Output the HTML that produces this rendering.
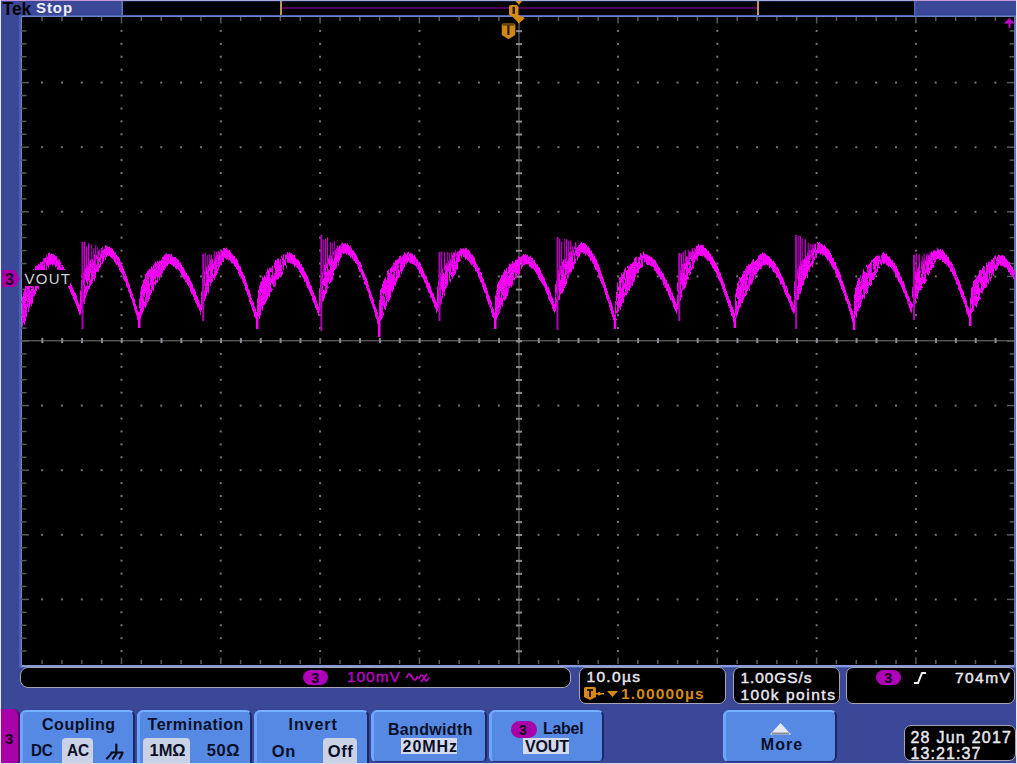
<!DOCTYPE html>
<html><head><meta charset="utf-8">
<style>
*{margin:0;padding:0;box-sizing:border-box}
html,body{width:1017px;height:764px;overflow:hidden;background:#3b4898;font-family:"Liberation Sans",sans-serif}
.a{position:absolute}
.btn{position:absolute;top:710px;height:53px;background:#5589e3;border-top:2px solid #78aeff;border-left:3px solid #6ea6ff;border-right:2.5px solid #1c2766;border-bottom:0;border-radius:6px 6px 0 0}
.btn2{height:52px;border-bottom:1px solid #24307a;border-radius:6px 6px 5px 5px}
.hl{position:absolute;background:#ccd2e6;border-radius:4px}
.box{position:absolute;background:#000;border:1px solid #a4a4b4;border-radius:7px}
.t{position:absolute;white-space:nowrap;font-family:"Liberation Sans",sans-serif}
#wrap{position:absolute;left:0;top:0;width:1017px;height:764px;background:#3b4898;overflow:hidden}
</style></head><body><div id="wrap">
<svg class="a" style="left:0;top:0" width="1017" height="764" viewBox="0 0 1017 764">
<rect x="0" y="0" width="1017" height="1" fill="#a6aacf"/>
<rect x="0" y="0" width="123" height="1" fill="#c49ad8"/>
<rect x="914" y="0" width="103" height="1" fill="#c49ad8"/>
<rect x="0" y="0" width="1" height="764" fill="#e8e8f0"/>
<rect x="1016" y="0" width="1" height="764" fill="#e8e8f0"/>
<rect x="0" y="763" width="1017" height="1" fill="#d8d8e2"/>
<rect x="123" y="1" width="791" height="14" fill="#000"/>
<rect x="123" y="1" width="791" height="1" fill="#141a48"/>
<rect x="121.5" y="1" width="1.5" height="14" fill="#5a76c8"/>
<rect x="914" y="1" width="1.5" height="14" fill="#4a64b8"/>
<rect x="282" y="7" width="475" height="2" fill="#50005a"/>
<rect x="280" y="1" width="2" height="14" fill="#9a9aa8"/>
<rect x="280.5" y="3" width="1.5" height="3" fill="#e09010"/>
<rect x="280.5" y="7" width="1.5" height="3" fill="#e09010"/>
<rect x="280.5" y="11" width="1.5" height="3" fill="#e09010"/>
<rect x="757" y="1" width="2" height="14" fill="#9a9aa8"/>
<rect x="757" y="3" width="1.5" height="3" fill="#e09010"/>
<rect x="757" y="7" width="1.5" height="3" fill="#e09010"/>
<rect x="757" y="11" width="1.5" height="3" fill="#e09010"/>
<rect x="19" y="15" width="997" height="653" fill="#4a62b0"/>
<rect x="21" y="16" width="995" height="651" fill="#6a84c4"/>
<rect x="22" y="17" width="992" height="648" fill="#000"/>
<rect x="22" y="665" width="994" height="2" fill="#8a9ad8"/>
<rect x="1014" y="16" width="2" height="651" fill="#5a78b8"/>
<rect x="120.50" y="29.92" width="2" height="2" fill="#767676"/>
<rect x="120.50" y="42.84" width="2" height="2" fill="#767676"/>
<rect x="120.50" y="55.76" width="2" height="2" fill="#767676"/>
<rect x="120.50" y="68.68" width="2" height="2" fill="#767676"/>
<rect x="120.50" y="81.60" width="2" height="2" fill="#767676"/>
<rect x="120.50" y="94.52" width="2" height="2" fill="#767676"/>
<rect x="120.50" y="107.44" width="2" height="2" fill="#767676"/>
<rect x="120.50" y="120.36" width="2" height="2" fill="#767676"/>
<rect x="120.50" y="133.28" width="2" height="2" fill="#767676"/>
<rect x="120.50" y="146.20" width="2" height="2" fill="#767676"/>
<rect x="120.50" y="159.12" width="2" height="2" fill="#767676"/>
<rect x="120.50" y="172.04" width="2" height="2" fill="#767676"/>
<rect x="120.50" y="184.96" width="2" height="2" fill="#767676"/>
<rect x="120.50" y="197.88" width="2" height="2" fill="#767676"/>
<rect x="120.50" y="210.80" width="2" height="2" fill="#767676"/>
<rect x="120.50" y="223.72" width="2" height="2" fill="#767676"/>
<rect x="120.50" y="236.64" width="2" height="2" fill="#767676"/>
<rect x="120.50" y="249.56" width="2" height="2" fill="#767676"/>
<rect x="120.50" y="262.48" width="2" height="2" fill="#767676"/>
<rect x="120.50" y="275.40" width="2" height="2" fill="#767676"/>
<rect x="120.50" y="288.32" width="2" height="2" fill="#767676"/>
<rect x="120.50" y="301.24" width="2" height="2" fill="#767676"/>
<rect x="120.50" y="314.16" width="2" height="2" fill="#767676"/>
<rect x="120.50" y="327.08" width="2" height="2" fill="#767676"/>
<rect x="120.50" y="340.00" width="2" height="2" fill="#767676"/>
<rect x="120.50" y="352.92" width="2" height="2" fill="#767676"/>
<rect x="120.50" y="365.84" width="2" height="2" fill="#767676"/>
<rect x="120.50" y="378.76" width="2" height="2" fill="#767676"/>
<rect x="120.50" y="391.68" width="2" height="2" fill="#767676"/>
<rect x="120.50" y="404.60" width="2" height="2" fill="#767676"/>
<rect x="120.50" y="417.52" width="2" height="2" fill="#767676"/>
<rect x="120.50" y="430.44" width="2" height="2" fill="#767676"/>
<rect x="120.50" y="443.36" width="2" height="2" fill="#767676"/>
<rect x="120.50" y="456.28" width="2" height="2" fill="#767676"/>
<rect x="120.50" y="469.20" width="2" height="2" fill="#767676"/>
<rect x="120.50" y="482.12" width="2" height="2" fill="#767676"/>
<rect x="120.50" y="495.04" width="2" height="2" fill="#767676"/>
<rect x="120.50" y="507.96" width="2" height="2" fill="#767676"/>
<rect x="120.50" y="520.88" width="2" height="2" fill="#767676"/>
<rect x="120.50" y="533.80" width="2" height="2" fill="#767676"/>
<rect x="120.50" y="546.72" width="2" height="2" fill="#767676"/>
<rect x="120.50" y="559.64" width="2" height="2" fill="#767676"/>
<rect x="120.50" y="572.56" width="2" height="2" fill="#767676"/>
<rect x="120.50" y="585.48" width="2" height="2" fill="#767676"/>
<rect x="120.50" y="598.40" width="2" height="2" fill="#767676"/>
<rect x="120.50" y="611.32" width="2" height="2" fill="#767676"/>
<rect x="120.50" y="624.24" width="2" height="2" fill="#767676"/>
<rect x="120.50" y="637.16" width="2" height="2" fill="#767676"/>
<rect x="120.50" y="650.08" width="2" height="2" fill="#767676"/>
<rect x="219.80" y="29.92" width="2" height="2" fill="#767676"/>
<rect x="219.80" y="42.84" width="2" height="2" fill="#767676"/>
<rect x="219.80" y="55.76" width="2" height="2" fill="#767676"/>
<rect x="219.80" y="68.68" width="2" height="2" fill="#767676"/>
<rect x="219.80" y="81.60" width="2" height="2" fill="#767676"/>
<rect x="219.80" y="94.52" width="2" height="2" fill="#767676"/>
<rect x="219.80" y="107.44" width="2" height="2" fill="#767676"/>
<rect x="219.80" y="120.36" width="2" height="2" fill="#767676"/>
<rect x="219.80" y="133.28" width="2" height="2" fill="#767676"/>
<rect x="219.80" y="146.20" width="2" height="2" fill="#767676"/>
<rect x="219.80" y="159.12" width="2" height="2" fill="#767676"/>
<rect x="219.80" y="172.04" width="2" height="2" fill="#767676"/>
<rect x="219.80" y="184.96" width="2" height="2" fill="#767676"/>
<rect x="219.80" y="197.88" width="2" height="2" fill="#767676"/>
<rect x="219.80" y="210.80" width="2" height="2" fill="#767676"/>
<rect x="219.80" y="223.72" width="2" height="2" fill="#767676"/>
<rect x="219.80" y="236.64" width="2" height="2" fill="#767676"/>
<rect x="219.80" y="249.56" width="2" height="2" fill="#767676"/>
<rect x="219.80" y="262.48" width="2" height="2" fill="#767676"/>
<rect x="219.80" y="275.40" width="2" height="2" fill="#767676"/>
<rect x="219.80" y="288.32" width="2" height="2" fill="#767676"/>
<rect x="219.80" y="301.24" width="2" height="2" fill="#767676"/>
<rect x="219.80" y="314.16" width="2" height="2" fill="#767676"/>
<rect x="219.80" y="327.08" width="2" height="2" fill="#767676"/>
<rect x="219.80" y="340.00" width="2" height="2" fill="#767676"/>
<rect x="219.80" y="352.92" width="2" height="2" fill="#767676"/>
<rect x="219.80" y="365.84" width="2" height="2" fill="#767676"/>
<rect x="219.80" y="378.76" width="2" height="2" fill="#767676"/>
<rect x="219.80" y="391.68" width="2" height="2" fill="#767676"/>
<rect x="219.80" y="404.60" width="2" height="2" fill="#767676"/>
<rect x="219.80" y="417.52" width="2" height="2" fill="#767676"/>
<rect x="219.80" y="430.44" width="2" height="2" fill="#767676"/>
<rect x="219.80" y="443.36" width="2" height="2" fill="#767676"/>
<rect x="219.80" y="456.28" width="2" height="2" fill="#767676"/>
<rect x="219.80" y="469.20" width="2" height="2" fill="#767676"/>
<rect x="219.80" y="482.12" width="2" height="2" fill="#767676"/>
<rect x="219.80" y="495.04" width="2" height="2" fill="#767676"/>
<rect x="219.80" y="507.96" width="2" height="2" fill="#767676"/>
<rect x="219.80" y="520.88" width="2" height="2" fill="#767676"/>
<rect x="219.80" y="533.80" width="2" height="2" fill="#767676"/>
<rect x="219.80" y="546.72" width="2" height="2" fill="#767676"/>
<rect x="219.80" y="559.64" width="2" height="2" fill="#767676"/>
<rect x="219.80" y="572.56" width="2" height="2" fill="#767676"/>
<rect x="219.80" y="585.48" width="2" height="2" fill="#767676"/>
<rect x="219.80" y="598.40" width="2" height="2" fill="#767676"/>
<rect x="219.80" y="611.32" width="2" height="2" fill="#767676"/>
<rect x="219.80" y="624.24" width="2" height="2" fill="#767676"/>
<rect x="219.80" y="637.16" width="2" height="2" fill="#767676"/>
<rect x="219.80" y="650.08" width="2" height="2" fill="#767676"/>
<rect x="319.10" y="29.92" width="2" height="2" fill="#767676"/>
<rect x="319.10" y="42.84" width="2" height="2" fill="#767676"/>
<rect x="319.10" y="55.76" width="2" height="2" fill="#767676"/>
<rect x="319.10" y="68.68" width="2" height="2" fill="#767676"/>
<rect x="319.10" y="81.60" width="2" height="2" fill="#767676"/>
<rect x="319.10" y="94.52" width="2" height="2" fill="#767676"/>
<rect x="319.10" y="107.44" width="2" height="2" fill="#767676"/>
<rect x="319.10" y="120.36" width="2" height="2" fill="#767676"/>
<rect x="319.10" y="133.28" width="2" height="2" fill="#767676"/>
<rect x="319.10" y="146.20" width="2" height="2" fill="#767676"/>
<rect x="319.10" y="159.12" width="2" height="2" fill="#767676"/>
<rect x="319.10" y="172.04" width="2" height="2" fill="#767676"/>
<rect x="319.10" y="184.96" width="2" height="2" fill="#767676"/>
<rect x="319.10" y="197.88" width="2" height="2" fill="#767676"/>
<rect x="319.10" y="210.80" width="2" height="2" fill="#767676"/>
<rect x="319.10" y="223.72" width="2" height="2" fill="#767676"/>
<rect x="319.10" y="236.64" width="2" height="2" fill="#767676"/>
<rect x="319.10" y="249.56" width="2" height="2" fill="#767676"/>
<rect x="319.10" y="262.48" width="2" height="2" fill="#767676"/>
<rect x="319.10" y="275.40" width="2" height="2" fill="#767676"/>
<rect x="319.10" y="288.32" width="2" height="2" fill="#767676"/>
<rect x="319.10" y="301.24" width="2" height="2" fill="#767676"/>
<rect x="319.10" y="314.16" width="2" height="2" fill="#767676"/>
<rect x="319.10" y="327.08" width="2" height="2" fill="#767676"/>
<rect x="319.10" y="340.00" width="2" height="2" fill="#767676"/>
<rect x="319.10" y="352.92" width="2" height="2" fill="#767676"/>
<rect x="319.10" y="365.84" width="2" height="2" fill="#767676"/>
<rect x="319.10" y="378.76" width="2" height="2" fill="#767676"/>
<rect x="319.10" y="391.68" width="2" height="2" fill="#767676"/>
<rect x="319.10" y="404.60" width="2" height="2" fill="#767676"/>
<rect x="319.10" y="417.52" width="2" height="2" fill="#767676"/>
<rect x="319.10" y="430.44" width="2" height="2" fill="#767676"/>
<rect x="319.10" y="443.36" width="2" height="2" fill="#767676"/>
<rect x="319.10" y="456.28" width="2" height="2" fill="#767676"/>
<rect x="319.10" y="469.20" width="2" height="2" fill="#767676"/>
<rect x="319.10" y="482.12" width="2" height="2" fill="#767676"/>
<rect x="319.10" y="495.04" width="2" height="2" fill="#767676"/>
<rect x="319.10" y="507.96" width="2" height="2" fill="#767676"/>
<rect x="319.10" y="520.88" width="2" height="2" fill="#767676"/>
<rect x="319.10" y="533.80" width="2" height="2" fill="#767676"/>
<rect x="319.10" y="546.72" width="2" height="2" fill="#767676"/>
<rect x="319.10" y="559.64" width="2" height="2" fill="#767676"/>
<rect x="319.10" y="572.56" width="2" height="2" fill="#767676"/>
<rect x="319.10" y="585.48" width="2" height="2" fill="#767676"/>
<rect x="319.10" y="598.40" width="2" height="2" fill="#767676"/>
<rect x="319.10" y="611.32" width="2" height="2" fill="#767676"/>
<rect x="319.10" y="624.24" width="2" height="2" fill="#767676"/>
<rect x="319.10" y="637.16" width="2" height="2" fill="#767676"/>
<rect x="319.10" y="650.08" width="2" height="2" fill="#767676"/>
<rect x="418.40" y="29.92" width="2" height="2" fill="#767676"/>
<rect x="418.40" y="42.84" width="2" height="2" fill="#767676"/>
<rect x="418.40" y="55.76" width="2" height="2" fill="#767676"/>
<rect x="418.40" y="68.68" width="2" height="2" fill="#767676"/>
<rect x="418.40" y="81.60" width="2" height="2" fill="#767676"/>
<rect x="418.40" y="94.52" width="2" height="2" fill="#767676"/>
<rect x="418.40" y="107.44" width="2" height="2" fill="#767676"/>
<rect x="418.40" y="120.36" width="2" height="2" fill="#767676"/>
<rect x="418.40" y="133.28" width="2" height="2" fill="#767676"/>
<rect x="418.40" y="146.20" width="2" height="2" fill="#767676"/>
<rect x="418.40" y="159.12" width="2" height="2" fill="#767676"/>
<rect x="418.40" y="172.04" width="2" height="2" fill="#767676"/>
<rect x="418.40" y="184.96" width="2" height="2" fill="#767676"/>
<rect x="418.40" y="197.88" width="2" height="2" fill="#767676"/>
<rect x="418.40" y="210.80" width="2" height="2" fill="#767676"/>
<rect x="418.40" y="223.72" width="2" height="2" fill="#767676"/>
<rect x="418.40" y="236.64" width="2" height="2" fill="#767676"/>
<rect x="418.40" y="249.56" width="2" height="2" fill="#767676"/>
<rect x="418.40" y="262.48" width="2" height="2" fill="#767676"/>
<rect x="418.40" y="275.40" width="2" height="2" fill="#767676"/>
<rect x="418.40" y="288.32" width="2" height="2" fill="#767676"/>
<rect x="418.40" y="301.24" width="2" height="2" fill="#767676"/>
<rect x="418.40" y="314.16" width="2" height="2" fill="#767676"/>
<rect x="418.40" y="327.08" width="2" height="2" fill="#767676"/>
<rect x="418.40" y="340.00" width="2" height="2" fill="#767676"/>
<rect x="418.40" y="352.92" width="2" height="2" fill="#767676"/>
<rect x="418.40" y="365.84" width="2" height="2" fill="#767676"/>
<rect x="418.40" y="378.76" width="2" height="2" fill="#767676"/>
<rect x="418.40" y="391.68" width="2" height="2" fill="#767676"/>
<rect x="418.40" y="404.60" width="2" height="2" fill="#767676"/>
<rect x="418.40" y="417.52" width="2" height="2" fill="#767676"/>
<rect x="418.40" y="430.44" width="2" height="2" fill="#767676"/>
<rect x="418.40" y="443.36" width="2" height="2" fill="#767676"/>
<rect x="418.40" y="456.28" width="2" height="2" fill="#767676"/>
<rect x="418.40" y="469.20" width="2" height="2" fill="#767676"/>
<rect x="418.40" y="482.12" width="2" height="2" fill="#767676"/>
<rect x="418.40" y="495.04" width="2" height="2" fill="#767676"/>
<rect x="418.40" y="507.96" width="2" height="2" fill="#767676"/>
<rect x="418.40" y="520.88" width="2" height="2" fill="#767676"/>
<rect x="418.40" y="533.80" width="2" height="2" fill="#767676"/>
<rect x="418.40" y="546.72" width="2" height="2" fill="#767676"/>
<rect x="418.40" y="559.64" width="2" height="2" fill="#767676"/>
<rect x="418.40" y="572.56" width="2" height="2" fill="#767676"/>
<rect x="418.40" y="585.48" width="2" height="2" fill="#767676"/>
<rect x="418.40" y="598.40" width="2" height="2" fill="#767676"/>
<rect x="418.40" y="611.32" width="2" height="2" fill="#767676"/>
<rect x="418.40" y="624.24" width="2" height="2" fill="#767676"/>
<rect x="418.40" y="637.16" width="2" height="2" fill="#767676"/>
<rect x="418.40" y="650.08" width="2" height="2" fill="#767676"/>
<rect x="617.00" y="29.92" width="2" height="2" fill="#767676"/>
<rect x="617.00" y="42.84" width="2" height="2" fill="#767676"/>
<rect x="617.00" y="55.76" width="2" height="2" fill="#767676"/>
<rect x="617.00" y="68.68" width="2" height="2" fill="#767676"/>
<rect x="617.00" y="81.60" width="2" height="2" fill="#767676"/>
<rect x="617.00" y="94.52" width="2" height="2" fill="#767676"/>
<rect x="617.00" y="107.44" width="2" height="2" fill="#767676"/>
<rect x="617.00" y="120.36" width="2" height="2" fill="#767676"/>
<rect x="617.00" y="133.28" width="2" height="2" fill="#767676"/>
<rect x="617.00" y="146.20" width="2" height="2" fill="#767676"/>
<rect x="617.00" y="159.12" width="2" height="2" fill="#767676"/>
<rect x="617.00" y="172.04" width="2" height="2" fill="#767676"/>
<rect x="617.00" y="184.96" width="2" height="2" fill="#767676"/>
<rect x="617.00" y="197.88" width="2" height="2" fill="#767676"/>
<rect x="617.00" y="210.80" width="2" height="2" fill="#767676"/>
<rect x="617.00" y="223.72" width="2" height="2" fill="#767676"/>
<rect x="617.00" y="236.64" width="2" height="2" fill="#767676"/>
<rect x="617.00" y="249.56" width="2" height="2" fill="#767676"/>
<rect x="617.00" y="262.48" width="2" height="2" fill="#767676"/>
<rect x="617.00" y="275.40" width="2" height="2" fill="#767676"/>
<rect x="617.00" y="288.32" width="2" height="2" fill="#767676"/>
<rect x="617.00" y="301.24" width="2" height="2" fill="#767676"/>
<rect x="617.00" y="314.16" width="2" height="2" fill="#767676"/>
<rect x="617.00" y="327.08" width="2" height="2" fill="#767676"/>
<rect x="617.00" y="340.00" width="2" height="2" fill="#767676"/>
<rect x="617.00" y="352.92" width="2" height="2" fill="#767676"/>
<rect x="617.00" y="365.84" width="2" height="2" fill="#767676"/>
<rect x="617.00" y="378.76" width="2" height="2" fill="#767676"/>
<rect x="617.00" y="391.68" width="2" height="2" fill="#767676"/>
<rect x="617.00" y="404.60" width="2" height="2" fill="#767676"/>
<rect x="617.00" y="417.52" width="2" height="2" fill="#767676"/>
<rect x="617.00" y="430.44" width="2" height="2" fill="#767676"/>
<rect x="617.00" y="443.36" width="2" height="2" fill="#767676"/>
<rect x="617.00" y="456.28" width="2" height="2" fill="#767676"/>
<rect x="617.00" y="469.20" width="2" height="2" fill="#767676"/>
<rect x="617.00" y="482.12" width="2" height="2" fill="#767676"/>
<rect x="617.00" y="495.04" width="2" height="2" fill="#767676"/>
<rect x="617.00" y="507.96" width="2" height="2" fill="#767676"/>
<rect x="617.00" y="520.88" width="2" height="2" fill="#767676"/>
<rect x="617.00" y="533.80" width="2" height="2" fill="#767676"/>
<rect x="617.00" y="546.72" width="2" height="2" fill="#767676"/>
<rect x="617.00" y="559.64" width="2" height="2" fill="#767676"/>
<rect x="617.00" y="572.56" width="2" height="2" fill="#767676"/>
<rect x="617.00" y="585.48" width="2" height="2" fill="#767676"/>
<rect x="617.00" y="598.40" width="2" height="2" fill="#767676"/>
<rect x="617.00" y="611.32" width="2" height="2" fill="#767676"/>
<rect x="617.00" y="624.24" width="2" height="2" fill="#767676"/>
<rect x="617.00" y="637.16" width="2" height="2" fill="#767676"/>
<rect x="617.00" y="650.08" width="2" height="2" fill="#767676"/>
<rect x="716.30" y="29.92" width="2" height="2" fill="#767676"/>
<rect x="716.30" y="42.84" width="2" height="2" fill="#767676"/>
<rect x="716.30" y="55.76" width="2" height="2" fill="#767676"/>
<rect x="716.30" y="68.68" width="2" height="2" fill="#767676"/>
<rect x="716.30" y="81.60" width="2" height="2" fill="#767676"/>
<rect x="716.30" y="94.52" width="2" height="2" fill="#767676"/>
<rect x="716.30" y="107.44" width="2" height="2" fill="#767676"/>
<rect x="716.30" y="120.36" width="2" height="2" fill="#767676"/>
<rect x="716.30" y="133.28" width="2" height="2" fill="#767676"/>
<rect x="716.30" y="146.20" width="2" height="2" fill="#767676"/>
<rect x="716.30" y="159.12" width="2" height="2" fill="#767676"/>
<rect x="716.30" y="172.04" width="2" height="2" fill="#767676"/>
<rect x="716.30" y="184.96" width="2" height="2" fill="#767676"/>
<rect x="716.30" y="197.88" width="2" height="2" fill="#767676"/>
<rect x="716.30" y="210.80" width="2" height="2" fill="#767676"/>
<rect x="716.30" y="223.72" width="2" height="2" fill="#767676"/>
<rect x="716.30" y="236.64" width="2" height="2" fill="#767676"/>
<rect x="716.30" y="249.56" width="2" height="2" fill="#767676"/>
<rect x="716.30" y="262.48" width="2" height="2" fill="#767676"/>
<rect x="716.30" y="275.40" width="2" height="2" fill="#767676"/>
<rect x="716.30" y="288.32" width="2" height="2" fill="#767676"/>
<rect x="716.30" y="301.24" width="2" height="2" fill="#767676"/>
<rect x="716.30" y="314.16" width="2" height="2" fill="#767676"/>
<rect x="716.30" y="327.08" width="2" height="2" fill="#767676"/>
<rect x="716.30" y="340.00" width="2" height="2" fill="#767676"/>
<rect x="716.30" y="352.92" width="2" height="2" fill="#767676"/>
<rect x="716.30" y="365.84" width="2" height="2" fill="#767676"/>
<rect x="716.30" y="378.76" width="2" height="2" fill="#767676"/>
<rect x="716.30" y="391.68" width="2" height="2" fill="#767676"/>
<rect x="716.30" y="404.60" width="2" height="2" fill="#767676"/>
<rect x="716.30" y="417.52" width="2" height="2" fill="#767676"/>
<rect x="716.30" y="430.44" width="2" height="2" fill="#767676"/>
<rect x="716.30" y="443.36" width="2" height="2" fill="#767676"/>
<rect x="716.30" y="456.28" width="2" height="2" fill="#767676"/>
<rect x="716.30" y="469.20" width="2" height="2" fill="#767676"/>
<rect x="716.30" y="482.12" width="2" height="2" fill="#767676"/>
<rect x="716.30" y="495.04" width="2" height="2" fill="#767676"/>
<rect x="716.30" y="507.96" width="2" height="2" fill="#767676"/>
<rect x="716.30" y="520.88" width="2" height="2" fill="#767676"/>
<rect x="716.30" y="533.80" width="2" height="2" fill="#767676"/>
<rect x="716.30" y="546.72" width="2" height="2" fill="#767676"/>
<rect x="716.30" y="559.64" width="2" height="2" fill="#767676"/>
<rect x="716.30" y="572.56" width="2" height="2" fill="#767676"/>
<rect x="716.30" y="585.48" width="2" height="2" fill="#767676"/>
<rect x="716.30" y="598.40" width="2" height="2" fill="#767676"/>
<rect x="716.30" y="611.32" width="2" height="2" fill="#767676"/>
<rect x="716.30" y="624.24" width="2" height="2" fill="#767676"/>
<rect x="716.30" y="637.16" width="2" height="2" fill="#767676"/>
<rect x="716.30" y="650.08" width="2" height="2" fill="#767676"/>
<rect x="815.60" y="29.92" width="2" height="2" fill="#767676"/>
<rect x="815.60" y="42.84" width="2" height="2" fill="#767676"/>
<rect x="815.60" y="55.76" width="2" height="2" fill="#767676"/>
<rect x="815.60" y="68.68" width="2" height="2" fill="#767676"/>
<rect x="815.60" y="81.60" width="2" height="2" fill="#767676"/>
<rect x="815.60" y="94.52" width="2" height="2" fill="#767676"/>
<rect x="815.60" y="107.44" width="2" height="2" fill="#767676"/>
<rect x="815.60" y="120.36" width="2" height="2" fill="#767676"/>
<rect x="815.60" y="133.28" width="2" height="2" fill="#767676"/>
<rect x="815.60" y="146.20" width="2" height="2" fill="#767676"/>
<rect x="815.60" y="159.12" width="2" height="2" fill="#767676"/>
<rect x="815.60" y="172.04" width="2" height="2" fill="#767676"/>
<rect x="815.60" y="184.96" width="2" height="2" fill="#767676"/>
<rect x="815.60" y="197.88" width="2" height="2" fill="#767676"/>
<rect x="815.60" y="210.80" width="2" height="2" fill="#767676"/>
<rect x="815.60" y="223.72" width="2" height="2" fill="#767676"/>
<rect x="815.60" y="236.64" width="2" height="2" fill="#767676"/>
<rect x="815.60" y="249.56" width="2" height="2" fill="#767676"/>
<rect x="815.60" y="262.48" width="2" height="2" fill="#767676"/>
<rect x="815.60" y="275.40" width="2" height="2" fill="#767676"/>
<rect x="815.60" y="288.32" width="2" height="2" fill="#767676"/>
<rect x="815.60" y="301.24" width="2" height="2" fill="#767676"/>
<rect x="815.60" y="314.16" width="2" height="2" fill="#767676"/>
<rect x="815.60" y="327.08" width="2" height="2" fill="#767676"/>
<rect x="815.60" y="340.00" width="2" height="2" fill="#767676"/>
<rect x="815.60" y="352.92" width="2" height="2" fill="#767676"/>
<rect x="815.60" y="365.84" width="2" height="2" fill="#767676"/>
<rect x="815.60" y="378.76" width="2" height="2" fill="#767676"/>
<rect x="815.60" y="391.68" width="2" height="2" fill="#767676"/>
<rect x="815.60" y="404.60" width="2" height="2" fill="#767676"/>
<rect x="815.60" y="417.52" width="2" height="2" fill="#767676"/>
<rect x="815.60" y="430.44" width="2" height="2" fill="#767676"/>
<rect x="815.60" y="443.36" width="2" height="2" fill="#767676"/>
<rect x="815.60" y="456.28" width="2" height="2" fill="#767676"/>
<rect x="815.60" y="469.20" width="2" height="2" fill="#767676"/>
<rect x="815.60" y="482.12" width="2" height="2" fill="#767676"/>
<rect x="815.60" y="495.04" width="2" height="2" fill="#767676"/>
<rect x="815.60" y="507.96" width="2" height="2" fill="#767676"/>
<rect x="815.60" y="520.88" width="2" height="2" fill="#767676"/>
<rect x="815.60" y="533.80" width="2" height="2" fill="#767676"/>
<rect x="815.60" y="546.72" width="2" height="2" fill="#767676"/>
<rect x="815.60" y="559.64" width="2" height="2" fill="#767676"/>
<rect x="815.60" y="572.56" width="2" height="2" fill="#767676"/>
<rect x="815.60" y="585.48" width="2" height="2" fill="#767676"/>
<rect x="815.60" y="598.40" width="2" height="2" fill="#767676"/>
<rect x="815.60" y="611.32" width="2" height="2" fill="#767676"/>
<rect x="815.60" y="624.24" width="2" height="2" fill="#767676"/>
<rect x="815.60" y="637.16" width="2" height="2" fill="#767676"/>
<rect x="815.60" y="650.08" width="2" height="2" fill="#767676"/>
<rect x="914.90" y="29.92" width="2" height="2" fill="#767676"/>
<rect x="914.90" y="42.84" width="2" height="2" fill="#767676"/>
<rect x="914.90" y="55.76" width="2" height="2" fill="#767676"/>
<rect x="914.90" y="68.68" width="2" height="2" fill="#767676"/>
<rect x="914.90" y="81.60" width="2" height="2" fill="#767676"/>
<rect x="914.90" y="94.52" width="2" height="2" fill="#767676"/>
<rect x="914.90" y="107.44" width="2" height="2" fill="#767676"/>
<rect x="914.90" y="120.36" width="2" height="2" fill="#767676"/>
<rect x="914.90" y="133.28" width="2" height="2" fill="#767676"/>
<rect x="914.90" y="146.20" width="2" height="2" fill="#767676"/>
<rect x="914.90" y="159.12" width="2" height="2" fill="#767676"/>
<rect x="914.90" y="172.04" width="2" height="2" fill="#767676"/>
<rect x="914.90" y="184.96" width="2" height="2" fill="#767676"/>
<rect x="914.90" y="197.88" width="2" height="2" fill="#767676"/>
<rect x="914.90" y="210.80" width="2" height="2" fill="#767676"/>
<rect x="914.90" y="223.72" width="2" height="2" fill="#767676"/>
<rect x="914.90" y="236.64" width="2" height="2" fill="#767676"/>
<rect x="914.90" y="249.56" width="2" height="2" fill="#767676"/>
<rect x="914.90" y="262.48" width="2" height="2" fill="#767676"/>
<rect x="914.90" y="275.40" width="2" height="2" fill="#767676"/>
<rect x="914.90" y="288.32" width="2" height="2" fill="#767676"/>
<rect x="914.90" y="301.24" width="2" height="2" fill="#767676"/>
<rect x="914.90" y="314.16" width="2" height="2" fill="#767676"/>
<rect x="914.90" y="327.08" width="2" height="2" fill="#767676"/>
<rect x="914.90" y="340.00" width="2" height="2" fill="#767676"/>
<rect x="914.90" y="352.92" width="2" height="2" fill="#767676"/>
<rect x="914.90" y="365.84" width="2" height="2" fill="#767676"/>
<rect x="914.90" y="378.76" width="2" height="2" fill="#767676"/>
<rect x="914.90" y="391.68" width="2" height="2" fill="#767676"/>
<rect x="914.90" y="404.60" width="2" height="2" fill="#767676"/>
<rect x="914.90" y="417.52" width="2" height="2" fill="#767676"/>
<rect x="914.90" y="430.44" width="2" height="2" fill="#767676"/>
<rect x="914.90" y="443.36" width="2" height="2" fill="#767676"/>
<rect x="914.90" y="456.28" width="2" height="2" fill="#767676"/>
<rect x="914.90" y="469.20" width="2" height="2" fill="#767676"/>
<rect x="914.90" y="482.12" width="2" height="2" fill="#767676"/>
<rect x="914.90" y="495.04" width="2" height="2" fill="#767676"/>
<rect x="914.90" y="507.96" width="2" height="2" fill="#767676"/>
<rect x="914.90" y="520.88" width="2" height="2" fill="#767676"/>
<rect x="914.90" y="533.80" width="2" height="2" fill="#767676"/>
<rect x="914.90" y="546.72" width="2" height="2" fill="#767676"/>
<rect x="914.90" y="559.64" width="2" height="2" fill="#767676"/>
<rect x="914.90" y="572.56" width="2" height="2" fill="#767676"/>
<rect x="914.90" y="585.48" width="2" height="2" fill="#767676"/>
<rect x="914.90" y="598.40" width="2" height="2" fill="#767676"/>
<rect x="914.90" y="611.32" width="2" height="2" fill="#767676"/>
<rect x="914.90" y="624.24" width="2" height="2" fill="#767676"/>
<rect x="914.90" y="637.16" width="2" height="2" fill="#767676"/>
<rect x="914.90" y="650.08" width="2" height="2" fill="#767676"/>
<rect x="41.06" y="81.60" width="2" height="2" fill="#767676"/>
<rect x="60.92" y="81.60" width="2" height="2" fill="#767676"/>
<rect x="80.78" y="81.60" width="2" height="2" fill="#767676"/>
<rect x="100.64" y="81.60" width="2" height="2" fill="#767676"/>
<rect x="140.36" y="81.60" width="2" height="2" fill="#767676"/>
<rect x="160.22" y="81.60" width="2" height="2" fill="#767676"/>
<rect x="180.08" y="81.60" width="2" height="2" fill="#767676"/>
<rect x="199.94" y="81.60" width="2" height="2" fill="#767676"/>
<rect x="239.66" y="81.60" width="2" height="2" fill="#767676"/>
<rect x="259.52" y="81.60" width="2" height="2" fill="#767676"/>
<rect x="279.38" y="81.60" width="2" height="2" fill="#767676"/>
<rect x="299.24" y="81.60" width="2" height="2" fill="#767676"/>
<rect x="338.96" y="81.60" width="2" height="2" fill="#767676"/>
<rect x="358.82" y="81.60" width="2" height="2" fill="#767676"/>
<rect x="378.68" y="81.60" width="2" height="2" fill="#767676"/>
<rect x="398.54" y="81.60" width="2" height="2" fill="#767676"/>
<rect x="438.26" y="81.60" width="2" height="2" fill="#767676"/>
<rect x="458.12" y="81.60" width="2" height="2" fill="#767676"/>
<rect x="477.98" y="81.60" width="2" height="2" fill="#767676"/>
<rect x="497.84" y="81.60" width="2" height="2" fill="#767676"/>
<rect x="537.56" y="81.60" width="2" height="2" fill="#767676"/>
<rect x="557.42" y="81.60" width="2" height="2" fill="#767676"/>
<rect x="577.28" y="81.60" width="2" height="2" fill="#767676"/>
<rect x="597.14" y="81.60" width="2" height="2" fill="#767676"/>
<rect x="636.86" y="81.60" width="2" height="2" fill="#767676"/>
<rect x="656.72" y="81.60" width="2" height="2" fill="#767676"/>
<rect x="676.58" y="81.60" width="2" height="2" fill="#767676"/>
<rect x="696.44" y="81.60" width="2" height="2" fill="#767676"/>
<rect x="736.16" y="81.60" width="2" height="2" fill="#767676"/>
<rect x="756.02" y="81.60" width="2" height="2" fill="#767676"/>
<rect x="775.88" y="81.60" width="2" height="2" fill="#767676"/>
<rect x="795.74" y="81.60" width="2" height="2" fill="#767676"/>
<rect x="835.46" y="81.60" width="2" height="2" fill="#767676"/>
<rect x="855.32" y="81.60" width="2" height="2" fill="#767676"/>
<rect x="875.18" y="81.60" width="2" height="2" fill="#767676"/>
<rect x="895.04" y="81.60" width="2" height="2" fill="#767676"/>
<rect x="934.76" y="81.60" width="2" height="2" fill="#767676"/>
<rect x="954.62" y="81.60" width="2" height="2" fill="#767676"/>
<rect x="974.48" y="81.60" width="2" height="2" fill="#767676"/>
<rect x="994.34" y="81.60" width="2" height="2" fill="#767676"/>
<rect x="41.06" y="146.20" width="2" height="2" fill="#767676"/>
<rect x="60.92" y="146.20" width="2" height="2" fill="#767676"/>
<rect x="80.78" y="146.20" width="2" height="2" fill="#767676"/>
<rect x="100.64" y="146.20" width="2" height="2" fill="#767676"/>
<rect x="140.36" y="146.20" width="2" height="2" fill="#767676"/>
<rect x="160.22" y="146.20" width="2" height="2" fill="#767676"/>
<rect x="180.08" y="146.20" width="2" height="2" fill="#767676"/>
<rect x="199.94" y="146.20" width="2" height="2" fill="#767676"/>
<rect x="239.66" y="146.20" width="2" height="2" fill="#767676"/>
<rect x="259.52" y="146.20" width="2" height="2" fill="#767676"/>
<rect x="279.38" y="146.20" width="2" height="2" fill="#767676"/>
<rect x="299.24" y="146.20" width="2" height="2" fill="#767676"/>
<rect x="338.96" y="146.20" width="2" height="2" fill="#767676"/>
<rect x="358.82" y="146.20" width="2" height="2" fill="#767676"/>
<rect x="378.68" y="146.20" width="2" height="2" fill="#767676"/>
<rect x="398.54" y="146.20" width="2" height="2" fill="#767676"/>
<rect x="438.26" y="146.20" width="2" height="2" fill="#767676"/>
<rect x="458.12" y="146.20" width="2" height="2" fill="#767676"/>
<rect x="477.98" y="146.20" width="2" height="2" fill="#767676"/>
<rect x="497.84" y="146.20" width="2" height="2" fill="#767676"/>
<rect x="537.56" y="146.20" width="2" height="2" fill="#767676"/>
<rect x="557.42" y="146.20" width="2" height="2" fill="#767676"/>
<rect x="577.28" y="146.20" width="2" height="2" fill="#767676"/>
<rect x="597.14" y="146.20" width="2" height="2" fill="#767676"/>
<rect x="636.86" y="146.20" width="2" height="2" fill="#767676"/>
<rect x="656.72" y="146.20" width="2" height="2" fill="#767676"/>
<rect x="676.58" y="146.20" width="2" height="2" fill="#767676"/>
<rect x="696.44" y="146.20" width="2" height="2" fill="#767676"/>
<rect x="736.16" y="146.20" width="2" height="2" fill="#767676"/>
<rect x="756.02" y="146.20" width="2" height="2" fill="#767676"/>
<rect x="775.88" y="146.20" width="2" height="2" fill="#767676"/>
<rect x="795.74" y="146.20" width="2" height="2" fill="#767676"/>
<rect x="835.46" y="146.20" width="2" height="2" fill="#767676"/>
<rect x="855.32" y="146.20" width="2" height="2" fill="#767676"/>
<rect x="875.18" y="146.20" width="2" height="2" fill="#767676"/>
<rect x="895.04" y="146.20" width="2" height="2" fill="#767676"/>
<rect x="934.76" y="146.20" width="2" height="2" fill="#767676"/>
<rect x="954.62" y="146.20" width="2" height="2" fill="#767676"/>
<rect x="974.48" y="146.20" width="2" height="2" fill="#767676"/>
<rect x="994.34" y="146.20" width="2" height="2" fill="#767676"/>
<rect x="41.06" y="210.80" width="2" height="2" fill="#767676"/>
<rect x="60.92" y="210.80" width="2" height="2" fill="#767676"/>
<rect x="80.78" y="210.80" width="2" height="2" fill="#767676"/>
<rect x="100.64" y="210.80" width="2" height="2" fill="#767676"/>
<rect x="140.36" y="210.80" width="2" height="2" fill="#767676"/>
<rect x="160.22" y="210.80" width="2" height="2" fill="#767676"/>
<rect x="180.08" y="210.80" width="2" height="2" fill="#767676"/>
<rect x="199.94" y="210.80" width="2" height="2" fill="#767676"/>
<rect x="239.66" y="210.80" width="2" height="2" fill="#767676"/>
<rect x="259.52" y="210.80" width="2" height="2" fill="#767676"/>
<rect x="279.38" y="210.80" width="2" height="2" fill="#767676"/>
<rect x="299.24" y="210.80" width="2" height="2" fill="#767676"/>
<rect x="338.96" y="210.80" width="2" height="2" fill="#767676"/>
<rect x="358.82" y="210.80" width="2" height="2" fill="#767676"/>
<rect x="378.68" y="210.80" width="2" height="2" fill="#767676"/>
<rect x="398.54" y="210.80" width="2" height="2" fill="#767676"/>
<rect x="438.26" y="210.80" width="2" height="2" fill="#767676"/>
<rect x="458.12" y="210.80" width="2" height="2" fill="#767676"/>
<rect x="477.98" y="210.80" width="2" height="2" fill="#767676"/>
<rect x="497.84" y="210.80" width="2" height="2" fill="#767676"/>
<rect x="537.56" y="210.80" width="2" height="2" fill="#767676"/>
<rect x="557.42" y="210.80" width="2" height="2" fill="#767676"/>
<rect x="577.28" y="210.80" width="2" height="2" fill="#767676"/>
<rect x="597.14" y="210.80" width="2" height="2" fill="#767676"/>
<rect x="636.86" y="210.80" width="2" height="2" fill="#767676"/>
<rect x="656.72" y="210.80" width="2" height="2" fill="#767676"/>
<rect x="676.58" y="210.80" width="2" height="2" fill="#767676"/>
<rect x="696.44" y="210.80" width="2" height="2" fill="#767676"/>
<rect x="736.16" y="210.80" width="2" height="2" fill="#767676"/>
<rect x="756.02" y="210.80" width="2" height="2" fill="#767676"/>
<rect x="775.88" y="210.80" width="2" height="2" fill="#767676"/>
<rect x="795.74" y="210.80" width="2" height="2" fill="#767676"/>
<rect x="835.46" y="210.80" width="2" height="2" fill="#767676"/>
<rect x="855.32" y="210.80" width="2" height="2" fill="#767676"/>
<rect x="875.18" y="210.80" width="2" height="2" fill="#767676"/>
<rect x="895.04" y="210.80" width="2" height="2" fill="#767676"/>
<rect x="934.76" y="210.80" width="2" height="2" fill="#767676"/>
<rect x="954.62" y="210.80" width="2" height="2" fill="#767676"/>
<rect x="974.48" y="210.80" width="2" height="2" fill="#767676"/>
<rect x="994.34" y="210.80" width="2" height="2" fill="#767676"/>
<rect x="41.06" y="275.40" width="2" height="2" fill="#767676"/>
<rect x="60.92" y="275.40" width="2" height="2" fill="#767676"/>
<rect x="80.78" y="275.40" width="2" height="2" fill="#767676"/>
<rect x="100.64" y="275.40" width="2" height="2" fill="#767676"/>
<rect x="140.36" y="275.40" width="2" height="2" fill="#767676"/>
<rect x="160.22" y="275.40" width="2" height="2" fill="#767676"/>
<rect x="180.08" y="275.40" width="2" height="2" fill="#767676"/>
<rect x="199.94" y="275.40" width="2" height="2" fill="#767676"/>
<rect x="239.66" y="275.40" width="2" height="2" fill="#767676"/>
<rect x="259.52" y="275.40" width="2" height="2" fill="#767676"/>
<rect x="279.38" y="275.40" width="2" height="2" fill="#767676"/>
<rect x="299.24" y="275.40" width="2" height="2" fill="#767676"/>
<rect x="338.96" y="275.40" width="2" height="2" fill="#767676"/>
<rect x="358.82" y="275.40" width="2" height="2" fill="#767676"/>
<rect x="378.68" y="275.40" width="2" height="2" fill="#767676"/>
<rect x="398.54" y="275.40" width="2" height="2" fill="#767676"/>
<rect x="438.26" y="275.40" width="2" height="2" fill="#767676"/>
<rect x="458.12" y="275.40" width="2" height="2" fill="#767676"/>
<rect x="477.98" y="275.40" width="2" height="2" fill="#767676"/>
<rect x="497.84" y="275.40" width="2" height="2" fill="#767676"/>
<rect x="537.56" y="275.40" width="2" height="2" fill="#767676"/>
<rect x="557.42" y="275.40" width="2" height="2" fill="#767676"/>
<rect x="577.28" y="275.40" width="2" height="2" fill="#767676"/>
<rect x="597.14" y="275.40" width="2" height="2" fill="#767676"/>
<rect x="636.86" y="275.40" width="2" height="2" fill="#767676"/>
<rect x="656.72" y="275.40" width="2" height="2" fill="#767676"/>
<rect x="676.58" y="275.40" width="2" height="2" fill="#767676"/>
<rect x="696.44" y="275.40" width="2" height="2" fill="#767676"/>
<rect x="736.16" y="275.40" width="2" height="2" fill="#767676"/>
<rect x="756.02" y="275.40" width="2" height="2" fill="#767676"/>
<rect x="775.88" y="275.40" width="2" height="2" fill="#767676"/>
<rect x="795.74" y="275.40" width="2" height="2" fill="#767676"/>
<rect x="835.46" y="275.40" width="2" height="2" fill="#767676"/>
<rect x="855.32" y="275.40" width="2" height="2" fill="#767676"/>
<rect x="875.18" y="275.40" width="2" height="2" fill="#767676"/>
<rect x="895.04" y="275.40" width="2" height="2" fill="#767676"/>
<rect x="934.76" y="275.40" width="2" height="2" fill="#767676"/>
<rect x="954.62" y="275.40" width="2" height="2" fill="#767676"/>
<rect x="974.48" y="275.40" width="2" height="2" fill="#767676"/>
<rect x="994.34" y="275.40" width="2" height="2" fill="#767676"/>
<rect x="41.06" y="404.60" width="2" height="2" fill="#767676"/>
<rect x="60.92" y="404.60" width="2" height="2" fill="#767676"/>
<rect x="80.78" y="404.60" width="2" height="2" fill="#767676"/>
<rect x="100.64" y="404.60" width="2" height="2" fill="#767676"/>
<rect x="140.36" y="404.60" width="2" height="2" fill="#767676"/>
<rect x="160.22" y="404.60" width="2" height="2" fill="#767676"/>
<rect x="180.08" y="404.60" width="2" height="2" fill="#767676"/>
<rect x="199.94" y="404.60" width="2" height="2" fill="#767676"/>
<rect x="239.66" y="404.60" width="2" height="2" fill="#767676"/>
<rect x="259.52" y="404.60" width="2" height="2" fill="#767676"/>
<rect x="279.38" y="404.60" width="2" height="2" fill="#767676"/>
<rect x="299.24" y="404.60" width="2" height="2" fill="#767676"/>
<rect x="338.96" y="404.60" width="2" height="2" fill="#767676"/>
<rect x="358.82" y="404.60" width="2" height="2" fill="#767676"/>
<rect x="378.68" y="404.60" width="2" height="2" fill="#767676"/>
<rect x="398.54" y="404.60" width="2" height="2" fill="#767676"/>
<rect x="438.26" y="404.60" width="2" height="2" fill="#767676"/>
<rect x="458.12" y="404.60" width="2" height="2" fill="#767676"/>
<rect x="477.98" y="404.60" width="2" height="2" fill="#767676"/>
<rect x="497.84" y="404.60" width="2" height="2" fill="#767676"/>
<rect x="537.56" y="404.60" width="2" height="2" fill="#767676"/>
<rect x="557.42" y="404.60" width="2" height="2" fill="#767676"/>
<rect x="577.28" y="404.60" width="2" height="2" fill="#767676"/>
<rect x="597.14" y="404.60" width="2" height="2" fill="#767676"/>
<rect x="636.86" y="404.60" width="2" height="2" fill="#767676"/>
<rect x="656.72" y="404.60" width="2" height="2" fill="#767676"/>
<rect x="676.58" y="404.60" width="2" height="2" fill="#767676"/>
<rect x="696.44" y="404.60" width="2" height="2" fill="#767676"/>
<rect x="736.16" y="404.60" width="2" height="2" fill="#767676"/>
<rect x="756.02" y="404.60" width="2" height="2" fill="#767676"/>
<rect x="775.88" y="404.60" width="2" height="2" fill="#767676"/>
<rect x="795.74" y="404.60" width="2" height="2" fill="#767676"/>
<rect x="835.46" y="404.60" width="2" height="2" fill="#767676"/>
<rect x="855.32" y="404.60" width="2" height="2" fill="#767676"/>
<rect x="875.18" y="404.60" width="2" height="2" fill="#767676"/>
<rect x="895.04" y="404.60" width="2" height="2" fill="#767676"/>
<rect x="934.76" y="404.60" width="2" height="2" fill="#767676"/>
<rect x="954.62" y="404.60" width="2" height="2" fill="#767676"/>
<rect x="974.48" y="404.60" width="2" height="2" fill="#767676"/>
<rect x="994.34" y="404.60" width="2" height="2" fill="#767676"/>
<rect x="41.06" y="469.20" width="2" height="2" fill="#767676"/>
<rect x="60.92" y="469.20" width="2" height="2" fill="#767676"/>
<rect x="80.78" y="469.20" width="2" height="2" fill="#767676"/>
<rect x="100.64" y="469.20" width="2" height="2" fill="#767676"/>
<rect x="140.36" y="469.20" width="2" height="2" fill="#767676"/>
<rect x="160.22" y="469.20" width="2" height="2" fill="#767676"/>
<rect x="180.08" y="469.20" width="2" height="2" fill="#767676"/>
<rect x="199.94" y="469.20" width="2" height="2" fill="#767676"/>
<rect x="239.66" y="469.20" width="2" height="2" fill="#767676"/>
<rect x="259.52" y="469.20" width="2" height="2" fill="#767676"/>
<rect x="279.38" y="469.20" width="2" height="2" fill="#767676"/>
<rect x="299.24" y="469.20" width="2" height="2" fill="#767676"/>
<rect x="338.96" y="469.20" width="2" height="2" fill="#767676"/>
<rect x="358.82" y="469.20" width="2" height="2" fill="#767676"/>
<rect x="378.68" y="469.20" width="2" height="2" fill="#767676"/>
<rect x="398.54" y="469.20" width="2" height="2" fill="#767676"/>
<rect x="438.26" y="469.20" width="2" height="2" fill="#767676"/>
<rect x="458.12" y="469.20" width="2" height="2" fill="#767676"/>
<rect x="477.98" y="469.20" width="2" height="2" fill="#767676"/>
<rect x="497.84" y="469.20" width="2" height="2" fill="#767676"/>
<rect x="537.56" y="469.20" width="2" height="2" fill="#767676"/>
<rect x="557.42" y="469.20" width="2" height="2" fill="#767676"/>
<rect x="577.28" y="469.20" width="2" height="2" fill="#767676"/>
<rect x="597.14" y="469.20" width="2" height="2" fill="#767676"/>
<rect x="636.86" y="469.20" width="2" height="2" fill="#767676"/>
<rect x="656.72" y="469.20" width="2" height="2" fill="#767676"/>
<rect x="676.58" y="469.20" width="2" height="2" fill="#767676"/>
<rect x="696.44" y="469.20" width="2" height="2" fill="#767676"/>
<rect x="736.16" y="469.20" width="2" height="2" fill="#767676"/>
<rect x="756.02" y="469.20" width="2" height="2" fill="#767676"/>
<rect x="775.88" y="469.20" width="2" height="2" fill="#767676"/>
<rect x="795.74" y="469.20" width="2" height="2" fill="#767676"/>
<rect x="835.46" y="469.20" width="2" height="2" fill="#767676"/>
<rect x="855.32" y="469.20" width="2" height="2" fill="#767676"/>
<rect x="875.18" y="469.20" width="2" height="2" fill="#767676"/>
<rect x="895.04" y="469.20" width="2" height="2" fill="#767676"/>
<rect x="934.76" y="469.20" width="2" height="2" fill="#767676"/>
<rect x="954.62" y="469.20" width="2" height="2" fill="#767676"/>
<rect x="974.48" y="469.20" width="2" height="2" fill="#767676"/>
<rect x="994.34" y="469.20" width="2" height="2" fill="#767676"/>
<rect x="41.06" y="533.80" width="2" height="2" fill="#767676"/>
<rect x="60.92" y="533.80" width="2" height="2" fill="#767676"/>
<rect x="80.78" y="533.80" width="2" height="2" fill="#767676"/>
<rect x="100.64" y="533.80" width="2" height="2" fill="#767676"/>
<rect x="140.36" y="533.80" width="2" height="2" fill="#767676"/>
<rect x="160.22" y="533.80" width="2" height="2" fill="#767676"/>
<rect x="180.08" y="533.80" width="2" height="2" fill="#767676"/>
<rect x="199.94" y="533.80" width="2" height="2" fill="#767676"/>
<rect x="239.66" y="533.80" width="2" height="2" fill="#767676"/>
<rect x="259.52" y="533.80" width="2" height="2" fill="#767676"/>
<rect x="279.38" y="533.80" width="2" height="2" fill="#767676"/>
<rect x="299.24" y="533.80" width="2" height="2" fill="#767676"/>
<rect x="338.96" y="533.80" width="2" height="2" fill="#767676"/>
<rect x="358.82" y="533.80" width="2" height="2" fill="#767676"/>
<rect x="378.68" y="533.80" width="2" height="2" fill="#767676"/>
<rect x="398.54" y="533.80" width="2" height="2" fill="#767676"/>
<rect x="438.26" y="533.80" width="2" height="2" fill="#767676"/>
<rect x="458.12" y="533.80" width="2" height="2" fill="#767676"/>
<rect x="477.98" y="533.80" width="2" height="2" fill="#767676"/>
<rect x="497.84" y="533.80" width="2" height="2" fill="#767676"/>
<rect x="537.56" y="533.80" width="2" height="2" fill="#767676"/>
<rect x="557.42" y="533.80" width="2" height="2" fill="#767676"/>
<rect x="577.28" y="533.80" width="2" height="2" fill="#767676"/>
<rect x="597.14" y="533.80" width="2" height="2" fill="#767676"/>
<rect x="636.86" y="533.80" width="2" height="2" fill="#767676"/>
<rect x="656.72" y="533.80" width="2" height="2" fill="#767676"/>
<rect x="676.58" y="533.80" width="2" height="2" fill="#767676"/>
<rect x="696.44" y="533.80" width="2" height="2" fill="#767676"/>
<rect x="736.16" y="533.80" width="2" height="2" fill="#767676"/>
<rect x="756.02" y="533.80" width="2" height="2" fill="#767676"/>
<rect x="775.88" y="533.80" width="2" height="2" fill="#767676"/>
<rect x="795.74" y="533.80" width="2" height="2" fill="#767676"/>
<rect x="835.46" y="533.80" width="2" height="2" fill="#767676"/>
<rect x="855.32" y="533.80" width="2" height="2" fill="#767676"/>
<rect x="875.18" y="533.80" width="2" height="2" fill="#767676"/>
<rect x="895.04" y="533.80" width="2" height="2" fill="#767676"/>
<rect x="934.76" y="533.80" width="2" height="2" fill="#767676"/>
<rect x="954.62" y="533.80" width="2" height="2" fill="#767676"/>
<rect x="974.48" y="533.80" width="2" height="2" fill="#767676"/>
<rect x="994.34" y="533.80" width="2" height="2" fill="#767676"/>
<rect x="41.06" y="598.40" width="2" height="2" fill="#767676"/>
<rect x="60.92" y="598.40" width="2" height="2" fill="#767676"/>
<rect x="80.78" y="598.40" width="2" height="2" fill="#767676"/>
<rect x="100.64" y="598.40" width="2" height="2" fill="#767676"/>
<rect x="140.36" y="598.40" width="2" height="2" fill="#767676"/>
<rect x="160.22" y="598.40" width="2" height="2" fill="#767676"/>
<rect x="180.08" y="598.40" width="2" height="2" fill="#767676"/>
<rect x="199.94" y="598.40" width="2" height="2" fill="#767676"/>
<rect x="239.66" y="598.40" width="2" height="2" fill="#767676"/>
<rect x="259.52" y="598.40" width="2" height="2" fill="#767676"/>
<rect x="279.38" y="598.40" width="2" height="2" fill="#767676"/>
<rect x="299.24" y="598.40" width="2" height="2" fill="#767676"/>
<rect x="338.96" y="598.40" width="2" height="2" fill="#767676"/>
<rect x="358.82" y="598.40" width="2" height="2" fill="#767676"/>
<rect x="378.68" y="598.40" width="2" height="2" fill="#767676"/>
<rect x="398.54" y="598.40" width="2" height="2" fill="#767676"/>
<rect x="438.26" y="598.40" width="2" height="2" fill="#767676"/>
<rect x="458.12" y="598.40" width="2" height="2" fill="#767676"/>
<rect x="477.98" y="598.40" width="2" height="2" fill="#767676"/>
<rect x="497.84" y="598.40" width="2" height="2" fill="#767676"/>
<rect x="537.56" y="598.40" width="2" height="2" fill="#767676"/>
<rect x="557.42" y="598.40" width="2" height="2" fill="#767676"/>
<rect x="577.28" y="598.40" width="2" height="2" fill="#767676"/>
<rect x="597.14" y="598.40" width="2" height="2" fill="#767676"/>
<rect x="636.86" y="598.40" width="2" height="2" fill="#767676"/>
<rect x="656.72" y="598.40" width="2" height="2" fill="#767676"/>
<rect x="676.58" y="598.40" width="2" height="2" fill="#767676"/>
<rect x="696.44" y="598.40" width="2" height="2" fill="#767676"/>
<rect x="736.16" y="598.40" width="2" height="2" fill="#767676"/>
<rect x="756.02" y="598.40" width="2" height="2" fill="#767676"/>
<rect x="775.88" y="598.40" width="2" height="2" fill="#767676"/>
<rect x="795.74" y="598.40" width="2" height="2" fill="#767676"/>
<rect x="835.46" y="598.40" width="2" height="2" fill="#767676"/>
<rect x="855.32" y="598.40" width="2" height="2" fill="#767676"/>
<rect x="875.18" y="598.40" width="2" height="2" fill="#767676"/>
<rect x="895.04" y="598.40" width="2" height="2" fill="#767676"/>
<rect x="934.76" y="598.40" width="2" height="2" fill="#767676"/>
<rect x="954.62" y="598.40" width="2" height="2" fill="#767676"/>
<rect x="974.48" y="598.40" width="2" height="2" fill="#767676"/>
<rect x="994.34" y="598.40" width="2" height="2" fill="#767676"/>
<rect x="22" y="340" width="992" height="1.4" fill="#565656"/>
<rect x="518.3" y="17" width="1.4" height="647" fill="#565656"/>
<rect x="41.31" y="338" width="2" height="5" fill="#8c8c94"/>
<rect x="41.31" y="17" width="1.5" height="4" fill="#5a5a5a"/>
<rect x="41.31" y="660" width="1.5" height="4" fill="#5a5a5a"/>
<rect x="61.17" y="338" width="2" height="5" fill="#8c8c94"/>
<rect x="61.17" y="17" width="1.5" height="4" fill="#5a5a5a"/>
<rect x="61.17" y="660" width="1.5" height="4" fill="#5a5a5a"/>
<rect x="81.03" y="338" width="2" height="5" fill="#8c8c94"/>
<rect x="81.03" y="17" width="1.5" height="4" fill="#5a5a5a"/>
<rect x="81.03" y="660" width="1.5" height="4" fill="#5a5a5a"/>
<rect x="100.89" y="338" width="2" height="5" fill="#8c8c94"/>
<rect x="100.89" y="17" width="1.5" height="4" fill="#5a5a5a"/>
<rect x="100.89" y="660" width="1.5" height="4" fill="#5a5a5a"/>
<rect x="120.75" y="338" width="2" height="5" fill="#8c8c94"/>
<rect x="120.75" y="17" width="1.5" height="6.5" fill="#5a5a5a"/>
<rect x="120.75" y="657.5" width="1.5" height="6.5" fill="#5a5a5a"/>
<rect x="140.61" y="338" width="2" height="5" fill="#8c8c94"/>
<rect x="140.61" y="17" width="1.5" height="4" fill="#5a5a5a"/>
<rect x="140.61" y="660" width="1.5" height="4" fill="#5a5a5a"/>
<rect x="160.47" y="338" width="2" height="5" fill="#8c8c94"/>
<rect x="160.47" y="17" width="1.5" height="4" fill="#5a5a5a"/>
<rect x="160.47" y="660" width="1.5" height="4" fill="#5a5a5a"/>
<rect x="180.33" y="338" width="2" height="5" fill="#8c8c94"/>
<rect x="180.33" y="17" width="1.5" height="4" fill="#5a5a5a"/>
<rect x="180.33" y="660" width="1.5" height="4" fill="#5a5a5a"/>
<rect x="200.19" y="338" width="2" height="5" fill="#8c8c94"/>
<rect x="200.19" y="17" width="1.5" height="4" fill="#5a5a5a"/>
<rect x="200.19" y="660" width="1.5" height="4" fill="#5a5a5a"/>
<rect x="220.05" y="338" width="2" height="5" fill="#8c8c94"/>
<rect x="220.05" y="17" width="1.5" height="6.5" fill="#5a5a5a"/>
<rect x="220.05" y="657.5" width="1.5" height="6.5" fill="#5a5a5a"/>
<rect x="239.91" y="338" width="2" height="5" fill="#8c8c94"/>
<rect x="239.91" y="17" width="1.5" height="4" fill="#5a5a5a"/>
<rect x="239.91" y="660" width="1.5" height="4" fill="#5a5a5a"/>
<rect x="259.77" y="338" width="2" height="5" fill="#8c8c94"/>
<rect x="259.77" y="17" width="1.5" height="4" fill="#5a5a5a"/>
<rect x="259.77" y="660" width="1.5" height="4" fill="#5a5a5a"/>
<rect x="279.63" y="338" width="2" height="5" fill="#8c8c94"/>
<rect x="279.63" y="17" width="1.5" height="4" fill="#5a5a5a"/>
<rect x="279.63" y="660" width="1.5" height="4" fill="#5a5a5a"/>
<rect x="299.49" y="338" width="2" height="5" fill="#8c8c94"/>
<rect x="299.49" y="17" width="1.5" height="4" fill="#5a5a5a"/>
<rect x="299.49" y="660" width="1.5" height="4" fill="#5a5a5a"/>
<rect x="319.35" y="338" width="2" height="5" fill="#8c8c94"/>
<rect x="319.35" y="17" width="1.5" height="6.5" fill="#5a5a5a"/>
<rect x="319.35" y="657.5" width="1.5" height="6.5" fill="#5a5a5a"/>
<rect x="339.21" y="338" width="2" height="5" fill="#8c8c94"/>
<rect x="339.21" y="17" width="1.5" height="4" fill="#5a5a5a"/>
<rect x="339.21" y="660" width="1.5" height="4" fill="#5a5a5a"/>
<rect x="359.07" y="338" width="2" height="5" fill="#8c8c94"/>
<rect x="359.07" y="17" width="1.5" height="4" fill="#5a5a5a"/>
<rect x="359.07" y="660" width="1.5" height="4" fill="#5a5a5a"/>
<rect x="378.93" y="338" width="2" height="5" fill="#8c8c94"/>
<rect x="378.93" y="17" width="1.5" height="4" fill="#5a5a5a"/>
<rect x="378.93" y="660" width="1.5" height="4" fill="#5a5a5a"/>
<rect x="398.79" y="338" width="2" height="5" fill="#8c8c94"/>
<rect x="398.79" y="17" width="1.5" height="4" fill="#5a5a5a"/>
<rect x="398.79" y="660" width="1.5" height="4" fill="#5a5a5a"/>
<rect x="418.65" y="338" width="2" height="5" fill="#8c8c94"/>
<rect x="418.65" y="17" width="1.5" height="6.5" fill="#5a5a5a"/>
<rect x="418.65" y="657.5" width="1.5" height="6.5" fill="#5a5a5a"/>
<rect x="438.51" y="338" width="2" height="5" fill="#8c8c94"/>
<rect x="438.51" y="17" width="1.5" height="4" fill="#5a5a5a"/>
<rect x="438.51" y="660" width="1.5" height="4" fill="#5a5a5a"/>
<rect x="458.37" y="338" width="2" height="5" fill="#8c8c94"/>
<rect x="458.37" y="17" width="1.5" height="4" fill="#5a5a5a"/>
<rect x="458.37" y="660" width="1.5" height="4" fill="#5a5a5a"/>
<rect x="478.23" y="338" width="2" height="5" fill="#8c8c94"/>
<rect x="478.23" y="17" width="1.5" height="4" fill="#5a5a5a"/>
<rect x="478.23" y="660" width="1.5" height="4" fill="#5a5a5a"/>
<rect x="498.09" y="338" width="2" height="5" fill="#8c8c94"/>
<rect x="498.09" y="17" width="1.5" height="4" fill="#5a5a5a"/>
<rect x="498.09" y="660" width="1.5" height="4" fill="#5a5a5a"/>
<rect x="517.95" y="338" width="2" height="5" fill="#8c8c94"/>
<rect x="517.95" y="17" width="1.5" height="6.5" fill="#5a5a5a"/>
<rect x="517.95" y="657.5" width="1.5" height="6.5" fill="#5a5a5a"/>
<rect x="537.81" y="338" width="2" height="5" fill="#8c8c94"/>
<rect x="537.81" y="17" width="1.5" height="4" fill="#5a5a5a"/>
<rect x="537.81" y="660" width="1.5" height="4" fill="#5a5a5a"/>
<rect x="557.67" y="338" width="2" height="5" fill="#8c8c94"/>
<rect x="557.67" y="17" width="1.5" height="4" fill="#5a5a5a"/>
<rect x="557.67" y="660" width="1.5" height="4" fill="#5a5a5a"/>
<rect x="577.53" y="338" width="2" height="5" fill="#8c8c94"/>
<rect x="577.53" y="17" width="1.5" height="4" fill="#5a5a5a"/>
<rect x="577.53" y="660" width="1.5" height="4" fill="#5a5a5a"/>
<rect x="597.39" y="338" width="2" height="5" fill="#8c8c94"/>
<rect x="597.39" y="17" width="1.5" height="4" fill="#5a5a5a"/>
<rect x="597.39" y="660" width="1.5" height="4" fill="#5a5a5a"/>
<rect x="617.25" y="338" width="2" height="5" fill="#8c8c94"/>
<rect x="617.25" y="17" width="1.5" height="6.5" fill="#5a5a5a"/>
<rect x="617.25" y="657.5" width="1.5" height="6.5" fill="#5a5a5a"/>
<rect x="637.11" y="338" width="2" height="5" fill="#8c8c94"/>
<rect x="637.11" y="17" width="1.5" height="4" fill="#5a5a5a"/>
<rect x="637.11" y="660" width="1.5" height="4" fill="#5a5a5a"/>
<rect x="656.97" y="338" width="2" height="5" fill="#8c8c94"/>
<rect x="656.97" y="17" width="1.5" height="4" fill="#5a5a5a"/>
<rect x="656.97" y="660" width="1.5" height="4" fill="#5a5a5a"/>
<rect x="676.83" y="338" width="2" height="5" fill="#8c8c94"/>
<rect x="676.83" y="17" width="1.5" height="4" fill="#5a5a5a"/>
<rect x="676.83" y="660" width="1.5" height="4" fill="#5a5a5a"/>
<rect x="696.69" y="338" width="2" height="5" fill="#8c8c94"/>
<rect x="696.69" y="17" width="1.5" height="4" fill="#5a5a5a"/>
<rect x="696.69" y="660" width="1.5" height="4" fill="#5a5a5a"/>
<rect x="716.55" y="338" width="2" height="5" fill="#8c8c94"/>
<rect x="716.55" y="17" width="1.5" height="6.5" fill="#5a5a5a"/>
<rect x="716.55" y="657.5" width="1.5" height="6.5" fill="#5a5a5a"/>
<rect x="736.41" y="338" width="2" height="5" fill="#8c8c94"/>
<rect x="736.41" y="17" width="1.5" height="4" fill="#5a5a5a"/>
<rect x="736.41" y="660" width="1.5" height="4" fill="#5a5a5a"/>
<rect x="756.27" y="338" width="2" height="5" fill="#8c8c94"/>
<rect x="756.27" y="17" width="1.5" height="4" fill="#5a5a5a"/>
<rect x="756.27" y="660" width="1.5" height="4" fill="#5a5a5a"/>
<rect x="776.13" y="338" width="2" height="5" fill="#8c8c94"/>
<rect x="776.13" y="17" width="1.5" height="4" fill="#5a5a5a"/>
<rect x="776.13" y="660" width="1.5" height="4" fill="#5a5a5a"/>
<rect x="795.99" y="338" width="2" height="5" fill="#8c8c94"/>
<rect x="795.99" y="17" width="1.5" height="4" fill="#5a5a5a"/>
<rect x="795.99" y="660" width="1.5" height="4" fill="#5a5a5a"/>
<rect x="815.85" y="338" width="2" height="5" fill="#8c8c94"/>
<rect x="815.85" y="17" width="1.5" height="6.5" fill="#5a5a5a"/>
<rect x="815.85" y="657.5" width="1.5" height="6.5" fill="#5a5a5a"/>
<rect x="835.71" y="338" width="2" height="5" fill="#8c8c94"/>
<rect x="835.71" y="17" width="1.5" height="4" fill="#5a5a5a"/>
<rect x="835.71" y="660" width="1.5" height="4" fill="#5a5a5a"/>
<rect x="855.57" y="338" width="2" height="5" fill="#8c8c94"/>
<rect x="855.57" y="17" width="1.5" height="4" fill="#5a5a5a"/>
<rect x="855.57" y="660" width="1.5" height="4" fill="#5a5a5a"/>
<rect x="875.43" y="338" width="2" height="5" fill="#8c8c94"/>
<rect x="875.43" y="17" width="1.5" height="4" fill="#5a5a5a"/>
<rect x="875.43" y="660" width="1.5" height="4" fill="#5a5a5a"/>
<rect x="895.29" y="338" width="2" height="5" fill="#8c8c94"/>
<rect x="895.29" y="17" width="1.5" height="4" fill="#5a5a5a"/>
<rect x="895.29" y="660" width="1.5" height="4" fill="#5a5a5a"/>
<rect x="915.15" y="338" width="2" height="5" fill="#8c8c94"/>
<rect x="915.15" y="17" width="1.5" height="6.5" fill="#5a5a5a"/>
<rect x="915.15" y="657.5" width="1.5" height="6.5" fill="#5a5a5a"/>
<rect x="935.01" y="338" width="2" height="5" fill="#8c8c94"/>
<rect x="935.01" y="17" width="1.5" height="4" fill="#5a5a5a"/>
<rect x="935.01" y="660" width="1.5" height="4" fill="#5a5a5a"/>
<rect x="954.87" y="338" width="2" height="5" fill="#8c8c94"/>
<rect x="954.87" y="17" width="1.5" height="4" fill="#5a5a5a"/>
<rect x="954.87" y="660" width="1.5" height="4" fill="#5a5a5a"/>
<rect x="974.73" y="338" width="2" height="5" fill="#8c8c94"/>
<rect x="974.73" y="17" width="1.5" height="4" fill="#5a5a5a"/>
<rect x="974.73" y="660" width="1.5" height="4" fill="#5a5a5a"/>
<rect x="994.59" y="338" width="2" height="5" fill="#8c8c94"/>
<rect x="994.59" y="17" width="1.5" height="4" fill="#5a5a5a"/>
<rect x="994.59" y="660" width="1.5" height="4" fill="#5a5a5a"/>
<rect x="516" y="30.17" width="6" height="2" fill="#8c8c94"/>
<rect x="21" y="30.17" width="5.5" height="1.5" fill="#5a5a5a"/>
<rect x="1009.5" y="30.17" width="4.5" height="1.5" fill="#5a5a5a"/>
<rect x="516" y="43.09" width="6" height="2" fill="#8c8c94"/>
<rect x="21" y="43.09" width="5.5" height="1.5" fill="#5a5a5a"/>
<rect x="1009.5" y="43.09" width="4.5" height="1.5" fill="#5a5a5a"/>
<rect x="516" y="56.01" width="6" height="2" fill="#8c8c94"/>
<rect x="21" y="56.01" width="5.5" height="1.5" fill="#5a5a5a"/>
<rect x="1009.5" y="56.01" width="4.5" height="1.5" fill="#5a5a5a"/>
<rect x="516" y="68.93" width="6" height="2" fill="#8c8c94"/>
<rect x="21" y="68.93" width="5.5" height="1.5" fill="#5a5a5a"/>
<rect x="1009.5" y="68.93" width="4.5" height="1.5" fill="#5a5a5a"/>
<rect x="516" y="81.85" width="6" height="2" fill="#8c8c94"/>
<rect x="21" y="81.85" width="8" height="1.5" fill="#5a5a5a"/>
<rect x="1007" y="81.85" width="7" height="1.5" fill="#5a5a5a"/>
<rect x="516" y="94.77" width="6" height="2" fill="#8c8c94"/>
<rect x="21" y="94.77" width="5.5" height="1.5" fill="#5a5a5a"/>
<rect x="1009.5" y="94.77" width="4.5" height="1.5" fill="#5a5a5a"/>
<rect x="516" y="107.69" width="6" height="2" fill="#8c8c94"/>
<rect x="21" y="107.69" width="5.5" height="1.5" fill="#5a5a5a"/>
<rect x="1009.5" y="107.69" width="4.5" height="1.5" fill="#5a5a5a"/>
<rect x="516" y="120.61" width="6" height="2" fill="#8c8c94"/>
<rect x="21" y="120.61" width="5.5" height="1.5" fill="#5a5a5a"/>
<rect x="1009.5" y="120.61" width="4.5" height="1.5" fill="#5a5a5a"/>
<rect x="516" y="133.53" width="6" height="2" fill="#8c8c94"/>
<rect x="21" y="133.53" width="5.5" height="1.5" fill="#5a5a5a"/>
<rect x="1009.5" y="133.53" width="4.5" height="1.5" fill="#5a5a5a"/>
<rect x="516" y="146.45" width="6" height="2" fill="#8c8c94"/>
<rect x="21" y="146.45" width="8" height="1.5" fill="#5a5a5a"/>
<rect x="1007" y="146.45" width="7" height="1.5" fill="#5a5a5a"/>
<rect x="516" y="159.37" width="6" height="2" fill="#8c8c94"/>
<rect x="21" y="159.37" width="5.5" height="1.5" fill="#5a5a5a"/>
<rect x="1009.5" y="159.37" width="4.5" height="1.5" fill="#5a5a5a"/>
<rect x="516" y="172.29" width="6" height="2" fill="#8c8c94"/>
<rect x="21" y="172.29" width="5.5" height="1.5" fill="#5a5a5a"/>
<rect x="1009.5" y="172.29" width="4.5" height="1.5" fill="#5a5a5a"/>
<rect x="516" y="185.21" width="6" height="2" fill="#8c8c94"/>
<rect x="21" y="185.21" width="5.5" height="1.5" fill="#5a5a5a"/>
<rect x="1009.5" y="185.21" width="4.5" height="1.5" fill="#5a5a5a"/>
<rect x="516" y="198.13" width="6" height="2" fill="#8c8c94"/>
<rect x="21" y="198.13" width="5.5" height="1.5" fill="#5a5a5a"/>
<rect x="1009.5" y="198.13" width="4.5" height="1.5" fill="#5a5a5a"/>
<rect x="516" y="211.05" width="6" height="2" fill="#8c8c94"/>
<rect x="21" y="211.05" width="8" height="1.5" fill="#5a5a5a"/>
<rect x="1007" y="211.05" width="7" height="1.5" fill="#5a5a5a"/>
<rect x="516" y="223.97" width="6" height="2" fill="#8c8c94"/>
<rect x="21" y="223.97" width="5.5" height="1.5" fill="#5a5a5a"/>
<rect x="1009.5" y="223.97" width="4.5" height="1.5" fill="#5a5a5a"/>
<rect x="516" y="236.89" width="6" height="2" fill="#8c8c94"/>
<rect x="21" y="236.89" width="5.5" height="1.5" fill="#5a5a5a"/>
<rect x="1009.5" y="236.89" width="4.5" height="1.5" fill="#5a5a5a"/>
<rect x="516" y="249.81" width="6" height="2" fill="#8c8c94"/>
<rect x="21" y="249.81" width="5.5" height="1.5" fill="#5a5a5a"/>
<rect x="1009.5" y="249.81" width="4.5" height="1.5" fill="#5a5a5a"/>
<rect x="516" y="262.73" width="6" height="2" fill="#8c8c94"/>
<rect x="21" y="262.73" width="5.5" height="1.5" fill="#5a5a5a"/>
<rect x="1009.5" y="262.73" width="4.5" height="1.5" fill="#5a5a5a"/>
<rect x="516" y="275.65" width="6" height="2" fill="#8c8c94"/>
<rect x="21" y="275.65" width="8" height="1.5" fill="#5a5a5a"/>
<rect x="1007" y="275.65" width="7" height="1.5" fill="#5a5a5a"/>
<rect x="516" y="288.57" width="6" height="2" fill="#8c8c94"/>
<rect x="21" y="288.57" width="5.5" height="1.5" fill="#5a5a5a"/>
<rect x="1009.5" y="288.57" width="4.5" height="1.5" fill="#5a5a5a"/>
<rect x="516" y="301.49" width="6" height="2" fill="#8c8c94"/>
<rect x="21" y="301.49" width="5.5" height="1.5" fill="#5a5a5a"/>
<rect x="1009.5" y="301.49" width="4.5" height="1.5" fill="#5a5a5a"/>
<rect x="516" y="314.41" width="6" height="2" fill="#8c8c94"/>
<rect x="21" y="314.41" width="5.5" height="1.5" fill="#5a5a5a"/>
<rect x="1009.5" y="314.41" width="4.5" height="1.5" fill="#5a5a5a"/>
<rect x="516" y="327.33" width="6" height="2" fill="#8c8c94"/>
<rect x="21" y="327.33" width="5.5" height="1.5" fill="#5a5a5a"/>
<rect x="1009.5" y="327.33" width="4.5" height="1.5" fill="#5a5a5a"/>
<rect x="516" y="340.25" width="6" height="2" fill="#8c8c94"/>
<rect x="21" y="340.25" width="8" height="1.5" fill="#5a5a5a"/>
<rect x="1007" y="340.25" width="7" height="1.5" fill="#5a5a5a"/>
<rect x="516" y="353.17" width="6" height="2" fill="#8c8c94"/>
<rect x="21" y="353.17" width="5.5" height="1.5" fill="#5a5a5a"/>
<rect x="1009.5" y="353.17" width="4.5" height="1.5" fill="#5a5a5a"/>
<rect x="516" y="366.09" width="6" height="2" fill="#8c8c94"/>
<rect x="21" y="366.09" width="5.5" height="1.5" fill="#5a5a5a"/>
<rect x="1009.5" y="366.09" width="4.5" height="1.5" fill="#5a5a5a"/>
<rect x="516" y="379.01" width="6" height="2" fill="#8c8c94"/>
<rect x="21" y="379.01" width="5.5" height="1.5" fill="#5a5a5a"/>
<rect x="1009.5" y="379.01" width="4.5" height="1.5" fill="#5a5a5a"/>
<rect x="516" y="391.93" width="6" height="2" fill="#8c8c94"/>
<rect x="21" y="391.93" width="5.5" height="1.5" fill="#5a5a5a"/>
<rect x="1009.5" y="391.93" width="4.5" height="1.5" fill="#5a5a5a"/>
<rect x="516" y="404.85" width="6" height="2" fill="#8c8c94"/>
<rect x="21" y="404.85" width="8" height="1.5" fill="#5a5a5a"/>
<rect x="1007" y="404.85" width="7" height="1.5" fill="#5a5a5a"/>
<rect x="516" y="417.77" width="6" height="2" fill="#8c8c94"/>
<rect x="21" y="417.77" width="5.5" height="1.5" fill="#5a5a5a"/>
<rect x="1009.5" y="417.77" width="4.5" height="1.5" fill="#5a5a5a"/>
<rect x="516" y="430.69" width="6" height="2" fill="#8c8c94"/>
<rect x="21" y="430.69" width="5.5" height="1.5" fill="#5a5a5a"/>
<rect x="1009.5" y="430.69" width="4.5" height="1.5" fill="#5a5a5a"/>
<rect x="516" y="443.61" width="6" height="2" fill="#8c8c94"/>
<rect x="21" y="443.61" width="5.5" height="1.5" fill="#5a5a5a"/>
<rect x="1009.5" y="443.61" width="4.5" height="1.5" fill="#5a5a5a"/>
<rect x="516" y="456.53" width="6" height="2" fill="#8c8c94"/>
<rect x="21" y="456.53" width="5.5" height="1.5" fill="#5a5a5a"/>
<rect x="1009.5" y="456.53" width="4.5" height="1.5" fill="#5a5a5a"/>
<rect x="516" y="469.45" width="6" height="2" fill="#8c8c94"/>
<rect x="21" y="469.45" width="8" height="1.5" fill="#5a5a5a"/>
<rect x="1007" y="469.45" width="7" height="1.5" fill="#5a5a5a"/>
<rect x="516" y="482.37" width="6" height="2" fill="#8c8c94"/>
<rect x="21" y="482.37" width="5.5" height="1.5" fill="#5a5a5a"/>
<rect x="1009.5" y="482.37" width="4.5" height="1.5" fill="#5a5a5a"/>
<rect x="516" y="495.29" width="6" height="2" fill="#8c8c94"/>
<rect x="21" y="495.29" width="5.5" height="1.5" fill="#5a5a5a"/>
<rect x="1009.5" y="495.29" width="4.5" height="1.5" fill="#5a5a5a"/>
<rect x="516" y="508.21" width="6" height="2" fill="#8c8c94"/>
<rect x="21" y="508.21" width="5.5" height="1.5" fill="#5a5a5a"/>
<rect x="1009.5" y="508.21" width="4.5" height="1.5" fill="#5a5a5a"/>
<rect x="516" y="521.13" width="6" height="2" fill="#8c8c94"/>
<rect x="21" y="521.13" width="5.5" height="1.5" fill="#5a5a5a"/>
<rect x="1009.5" y="521.13" width="4.5" height="1.5" fill="#5a5a5a"/>
<rect x="516" y="534.05" width="6" height="2" fill="#8c8c94"/>
<rect x="21" y="534.05" width="8" height="1.5" fill="#5a5a5a"/>
<rect x="1007" y="534.05" width="7" height="1.5" fill="#5a5a5a"/>
<rect x="516" y="546.97" width="6" height="2" fill="#8c8c94"/>
<rect x="21" y="546.97" width="5.5" height="1.5" fill="#5a5a5a"/>
<rect x="1009.5" y="546.97" width="4.5" height="1.5" fill="#5a5a5a"/>
<rect x="516" y="559.89" width="6" height="2" fill="#8c8c94"/>
<rect x="21" y="559.89" width="5.5" height="1.5" fill="#5a5a5a"/>
<rect x="1009.5" y="559.89" width="4.5" height="1.5" fill="#5a5a5a"/>
<rect x="516" y="572.81" width="6" height="2" fill="#8c8c94"/>
<rect x="21" y="572.81" width="5.5" height="1.5" fill="#5a5a5a"/>
<rect x="1009.5" y="572.81" width="4.5" height="1.5" fill="#5a5a5a"/>
<rect x="516" y="585.73" width="6" height="2" fill="#8c8c94"/>
<rect x="21" y="585.73" width="5.5" height="1.5" fill="#5a5a5a"/>
<rect x="1009.5" y="585.73" width="4.5" height="1.5" fill="#5a5a5a"/>
<rect x="516" y="598.65" width="6" height="2" fill="#8c8c94"/>
<rect x="21" y="598.65" width="8" height="1.5" fill="#5a5a5a"/>
<rect x="1007" y="598.65" width="7" height="1.5" fill="#5a5a5a"/>
<rect x="516" y="611.57" width="6" height="2" fill="#8c8c94"/>
<rect x="21" y="611.57" width="5.5" height="1.5" fill="#5a5a5a"/>
<rect x="1009.5" y="611.57" width="4.5" height="1.5" fill="#5a5a5a"/>
<rect x="516" y="624.49" width="6" height="2" fill="#8c8c94"/>
<rect x="21" y="624.49" width="5.5" height="1.5" fill="#5a5a5a"/>
<rect x="1009.5" y="624.49" width="4.5" height="1.5" fill="#5a5a5a"/>
<rect x="516" y="637.41" width="6" height="2" fill="#8c8c94"/>
<rect x="21" y="637.41" width="5.5" height="1.5" fill="#5a5a5a"/>
<rect x="1009.5" y="637.41" width="4.5" height="1.5" fill="#5a5a5a"/>
<rect x="516" y="650.33" width="6" height="2" fill="#8c8c94"/>
<rect x="21" y="650.33" width="5.5" height="1.5" fill="#5a5a5a"/>
<rect x="1009.5" y="650.33" width="4.5" height="1.5" fill="#5a5a5a"/>
<rect x="22" y="296.6" width="1" height="6.6" fill="#ff00ff"/>
<rect x="22" y="303.3" width="1" height="4.5" fill="#ff00ff"/>
<rect x="22" y="307.8" width="1" height="2.9" fill="#ff00ff"/>
<rect x="22" y="310.7" width="1" height="5.1" fill="#ff00ff"/>
<rect x="22" y="315.9" width="1" height="2.5" fill="#ff00ff"/>
<rect x="22" y="318.3" width="1" height="2.5" fill="#d000d8"/>
<rect x="22" y="320.8" width="1" height="5.5" fill="#ff00ff"/>
<rect x="23" y="292.4" width="1" height="2.8" fill="#ff00ff"/>
<rect x="23" y="295.2" width="1" height="4.6" fill="#ff00ff"/>
<rect x="23" y="299.9" width="1" height="3.0" fill="#ff00ff"/>
<rect x="23" y="302.8" width="1" height="2.2" fill="#ff00ff"/>
<rect x="23" y="305.0" width="1" height="4.2" fill="#d000d8"/>
<rect x="23" y="309.2" width="1" height="4.6" fill="#ff00ff"/>
<rect x="23" y="313.8" width="1" height="4.5" fill="#ff00ff"/>
<rect x="23" y="318.3" width="1" height="4.3" fill="#ff00ff"/>
<rect x="24" y="289.4" width="1" height="3.6" fill="#ff00ff"/>
<rect x="24" y="293.0" width="1" height="3.4" fill="#ff00ff"/>
<rect x="24" y="296.5" width="1" height="5.8" fill="#ff00ff"/>
<rect x="24" y="302.3" width="1" height="6.2" fill="#ff00ff"/>
<rect x="24" y="308.5" width="1" height="6.8" fill="#d000d8"/>
<rect x="24" y="315.3" width="1" height="2.0" fill="#ff00ff"/>
<rect x="24" y="317.3" width="1" height="6.6" fill="#ff00ff"/>
<rect x="24" y="323.9" width="1" height="1.0" fill="#ff00ff"/>
<rect x="25" y="283.3" width="1" height="5.9" fill="#ff00ff"/>
<rect x="25" y="289.2" width="1" height="2.4" fill="#ff00ff"/>
<rect x="25" y="291.7" width="1" height="6.8" fill="#ff00ff"/>
<rect x="25" y="298.5" width="1" height="2.6" fill="#ff00ff"/>
<rect x="25" y="301.1" width="1" height="2.5" fill="#ff00ff"/>
<rect x="25" y="303.6" width="1" height="6.0" fill="#ff00ff"/>
<rect x="25" y="309.6" width="1" height="4.8" fill="#ff00ff"/>
<rect x="25" y="314.4" width="1" height="3.0" fill="#ff00ff"/>
<rect x="25" y="317.3" width="1" height="2.7" fill="#ff00ff"/>
<rect x="25" y="320.0" width="1" height="1.0" fill="#ff00ff"/>
<rect x="26" y="281.3" width="1" height="6.9" fill="#d000d8"/>
<rect x="26" y="288.1" width="1" height="3.5" fill="#d000d8"/>
<rect x="26" y="291.7" width="1" height="3.1" fill="#ff00ff"/>
<rect x="26" y="294.7" width="1" height="6.3" fill="#ff00ff"/>
<rect x="26" y="303.5" width="1" height="3.1" fill="#ff00ff"/>
<rect x="26" y="306.6" width="1" height="5.9" fill="#ff00ff"/>
<rect x="26" y="312.4" width="1" height="3.5" fill="#ff00ff"/>
<rect x="26" y="315.9" width="1" height="1.0" fill="#ff00ff"/>
<rect x="27" y="279.1" width="1" height="3.9" fill="#ff00ff"/>
<rect x="27" y="283.0" width="1" height="6.8" fill="#ff00ff"/>
<rect x="27" y="289.8" width="1" height="4.9" fill="#d000d8"/>
<rect x="27" y="294.6" width="1" height="2.9" fill="#ff00ff"/>
<rect x="27" y="297.6" width="1" height="6.5" fill="#d000d8"/>
<rect x="27" y="304.1" width="1" height="3.2" fill="#ff00ff"/>
<rect x="28" y="279.6" width="1" height="4.1" fill="#ff00ff"/>
<rect x="28" y="285.9" width="1" height="3.2" fill="#ff00ff"/>
<rect x="28" y="289.1" width="1" height="3.3" fill="#d000d8"/>
<rect x="28" y="292.4" width="1" height="5.0" fill="#ff00ff"/>
<rect x="28" y="297.4" width="1" height="2.9" fill="#ff00ff"/>
<rect x="28" y="300.3" width="1" height="2.3" fill="#ff00ff"/>
<rect x="28" y="302.6" width="1" height="4.8" fill="#d000d8"/>
<rect x="28" y="307.4" width="1" height="4.9" fill="#ff00ff"/>
<rect x="29" y="277.9" width="1" height="2.1" fill="#ff00ff"/>
<rect x="29" y="280.0" width="1" height="4.2" fill="#ff00ff"/>
<rect x="29" y="284.2" width="1" height="2.9" fill="#ff00ff"/>
<rect x="29" y="287.1" width="1" height="4.9" fill="#ff00ff"/>
<rect x="29" y="291.9" width="1" height="3.8" fill="#d000d8"/>
<rect x="29" y="295.8" width="1" height="6.9" fill="#ff00ff"/>
<rect x="29" y="302.7" width="1" height="5.0" fill="#ff00ff"/>
<rect x="30" y="273.1" width="1" height="2.1" fill="#d000d8"/>
<rect x="30" y="280.7" width="1" height="2.1" fill="#ff00ff"/>
<rect x="30" y="282.8" width="1" height="4.4" fill="#ff00ff"/>
<rect x="30" y="290.8" width="1" height="2.4" fill="#ff00ff"/>
<rect x="30" y="293.1" width="1" height="5.7" fill="#d000d8"/>
<rect x="30" y="298.8" width="1" height="5.5" fill="#ff00ff"/>
<rect x="31" y="274.1" width="1" height="3.8" fill="#ff00ff"/>
<rect x="31" y="277.8" width="1" height="6.5" fill="#d000d8"/>
<rect x="31" y="284.3" width="1" height="4.1" fill="#ff00ff"/>
<rect x="31" y="288.4" width="1" height="6.3" fill="#ff00ff"/>
<rect x="31" y="294.7" width="1" height="5.1" fill="#ff00ff"/>
<rect x="31" y="299.9" width="1" height="4.9" fill="#ff00ff"/>
<rect x="31" y="304.8" width="1" height="1.4" fill="#ff00ff"/>
<rect x="32" y="273.4" width="1" height="5.6" fill="#ff00ff"/>
<rect x="32" y="279.0" width="1" height="5.7" fill="#ff00ff"/>
<rect x="32" y="284.7" width="1" height="4.2" fill="#d000d8"/>
<rect x="32" y="288.9" width="1" height="2.4" fill="#ff00ff"/>
<rect x="32" y="291.3" width="1" height="2.1" fill="#ff00ff"/>
<rect x="32" y="293.5" width="1" height="4.4" fill="#ff00ff"/>
<rect x="32" y="297.9" width="1" height="5.5" fill="#ff00ff"/>
<rect x="33" y="269.0" width="1" height="3.5" fill="#ff00ff"/>
<rect x="33" y="272.5" width="1" height="3.0" fill="#ff00ff"/>
<rect x="33" y="275.5" width="1" height="6.5" fill="#ff00ff"/>
<rect x="33" y="282.1" width="1" height="4.2" fill="#d000d8"/>
<rect x="33" y="286.3" width="1" height="3.6" fill="#ff00ff"/>
<rect x="33" y="289.9" width="1" height="3.0" fill="#ff00ff"/>
<rect x="33" y="292.9" width="1" height="3.9" fill="#d000d8"/>
<rect x="34" y="270.2" width="1" height="4.9" fill="#ff00ff"/>
<rect x="34" y="275.1" width="1" height="2.7" fill="#ff00ff"/>
<rect x="34" y="277.8" width="1" height="6.2" fill="#d000d8"/>
<rect x="34" y="289.5" width="1" height="3.4" fill="#ff00ff"/>
<rect x="34" y="292.9" width="1" height="3.4" fill="#ff00ff"/>
<rect x="35" y="266.3" width="1" height="5.1" fill="#ff00ff"/>
<rect x="35" y="271.4" width="1" height="3.6" fill="#d000d8"/>
<rect x="35" y="275.0" width="1" height="6.9" fill="#ff00ff"/>
<rect x="35" y="281.9" width="1" height="2.4" fill="#ff00ff"/>
<rect x="35" y="284.2" width="1" height="6.4" fill="#ff00ff"/>
<rect x="35" y="290.6" width="1" height="3.5" fill="#ff00ff"/>
<rect x="36" y="265.4" width="1" height="2.1" fill="#ff00ff"/>
<rect x="36" y="267.5" width="1" height="4.3" fill="#ff00ff"/>
<rect x="36" y="271.8" width="1" height="6.1" fill="#ff00ff"/>
<rect x="36" y="277.9" width="1" height="2.7" fill="#ff00ff"/>
<rect x="36" y="280.6" width="1" height="5.1" fill="#ff00ff"/>
<rect x="36" y="285.8" width="1" height="5.1" fill="#ff00ff"/>
<rect x="37" y="265.8" width="1" height="4.4" fill="#ff00ff"/>
<rect x="37" y="270.2" width="1" height="2.1" fill="#ff00ff"/>
<rect x="37" y="272.2" width="1" height="5.6" fill="#ff00ff"/>
<rect x="37" y="277.8" width="1" height="3.4" fill="#ff00ff"/>
<rect x="37" y="281.1" width="1" height="5.5" fill="#ff00ff"/>
<rect x="37" y="286.6" width="1" height="1.9" fill="#ff00ff"/>
<rect x="38" y="263.5" width="1" height="6.5" fill="#ff00ff"/>
<rect x="38" y="270.0" width="1" height="6.7" fill="#ff00ff"/>
<rect x="38" y="276.7" width="1" height="2.6" fill="#ff00ff"/>
<rect x="38" y="279.4" width="1" height="5.1" fill="#d000d8"/>
<rect x="38" y="284.5" width="1" height="3.9" fill="#ff00ff"/>
<rect x="38" y="288.4" width="1" height="1.0" fill="#ff00ff"/>
<rect x="39" y="264.7" width="1" height="5.3" fill="#ff00ff"/>
<rect x="39" y="269.9" width="1" height="5.6" fill="#d000d8"/>
<rect x="39" y="275.5" width="1" height="5.2" fill="#ff00ff"/>
<rect x="39" y="280.7" width="1" height="3.1" fill="#d000d8"/>
<rect x="40" y="262.0" width="1" height="3.6" fill="#d000d8"/>
<rect x="40" y="265.6" width="1" height="6.3" fill="#ff00ff"/>
<rect x="40" y="271.9" width="1" height="2.4" fill="#ff00ff"/>
<rect x="40" y="274.3" width="1" height="4.8" fill="#ff00ff"/>
<rect x="40" y="279.0" width="1" height="4.4" fill="#ff00ff"/>
<rect x="40" y="283.5" width="1" height="1.3" fill="#ff00ff"/>
<rect x="41" y="262.1" width="1" height="3.7" fill="#ff00ff"/>
<rect x="41" y="265.7" width="1" height="2.7" fill="#ff00ff"/>
<rect x="41" y="268.4" width="1" height="4.6" fill="#ff00ff"/>
<rect x="41" y="273.0" width="1" height="6.2" fill="#ff00ff"/>
<rect x="41" y="279.2" width="1" height="1.0" fill="#ff00ff"/>
<rect x="42" y="261.7" width="1" height="3.1" fill="#ff00ff"/>
<rect x="42" y="264.8" width="1" height="3.5" fill="#ff00ff"/>
<rect x="42" y="268.3" width="1" height="5.2" fill="#ff00ff"/>
<rect x="42" y="273.5" width="1" height="3.5" fill="#ff00ff"/>
<rect x="43" y="258.2" width="1" height="6.2" fill="#d000d8"/>
<rect x="43" y="264.5" width="1" height="3.0" fill="#d000d8"/>
<rect x="43" y="267.5" width="1" height="6.8" fill="#ff00ff"/>
<rect x="43" y="274.4" width="1" height="2.0" fill="#ff00ff"/>
<rect x="44" y="258.2" width="1" height="5.0" fill="#ff00ff"/>
<rect x="44" y="263.3" width="1" height="6.8" fill="#ff00ff"/>
<rect x="44" y="270.1" width="1" height="4.0" fill="#d000d8"/>
<rect x="44" y="274.1" width="1" height="1.0" fill="#ff00ff"/>
<rect x="45" y="258.0" width="1" height="4.7" fill="#ff00ff"/>
<rect x="45" y="269.5" width="1" height="1.1" fill="#ff00ff"/>
<rect x="46" y="254.9" width="1" height="6.1" fill="#d000d8"/>
<rect x="46" y="261.0" width="1" height="4.4" fill="#ff00ff"/>
<rect x="46" y="265.4" width="1" height="3.0" fill="#ff00ff"/>
<rect x="46" y="268.3" width="1" height="2.0" fill="#ff00ff"/>
<rect x="47" y="256.7" width="1" height="3.0" fill="#ff00ff"/>
<rect x="47" y="259.7" width="1" height="5.4" fill="#ff00ff"/>
<rect x="47" y="265.1" width="1" height="1.1" fill="#ff00ff"/>
<rect x="48" y="253.2" width="1" height="2.6" fill="#ff00ff"/>
<rect x="48" y="255.8" width="1" height="3.3" fill="#ff00ff"/>
<rect x="48" y="259.1" width="1" height="4.7" fill="#ff00ff"/>
<rect x="48" y="263.7" width="1" height="3.9" fill="#ff00ff"/>
<rect x="48" y="267.6" width="1" height="1.0" fill="#ff00ff"/>
<rect x="49" y="252.8" width="1" height="5.2" fill="#ff00ff"/>
<rect x="49" y="258.0" width="1" height="6.3" fill="#ff00ff"/>
<rect x="49" y="264.3" width="1" height="1.0" fill="#ff00ff"/>
<rect x="50" y="254.6" width="1" height="10.2" fill="#ff00ff"/>
<rect x="51" y="253.8" width="1" height="10.0" fill="#ff00ff"/>
<rect x="52" y="253.9" width="1" height="11.9" fill="#ff00ff"/>
<rect x="53" y="254.2" width="1" height="10.3" fill="#ff00ff"/>
<rect x="54" y="255.1" width="1" height="9.6" fill="#ff00ff"/>
<rect x="55" y="256.3" width="1" height="10.9" fill="#ff00ff"/>
<rect x="55" y="260.7" width="1" height="2.4" fill="#a000a0"/>
<rect x="56" y="256.2" width="1" height="10.4" fill="#ff00ff"/>
<rect x="57" y="259.3" width="1" height="10.1" fill="#ff00ff"/>
<rect x="57" y="264.5" width="1" height="2.5" fill="#a000a0"/>
<rect x="58" y="259.5" width="1" height="10.4" fill="#ff00ff"/>
<rect x="58" y="260.2" width="1" height="1.2" fill="#a000a0"/>
<rect x="59" y="259.6" width="1" height="11.2" fill="#ff00ff"/>
<rect x="60" y="262.3" width="1" height="9.0" fill="#ff00ff"/>
<rect x="60" y="264.1" width="1" height="2.7" fill="#a000a0"/>
<rect x="61" y="264.8" width="1" height="9.8" fill="#ff00ff"/>
<rect x="61" y="265.4" width="1" height="2.9" fill="#a000a0"/>
<rect x="62" y="265.1" width="1" height="10.7" fill="#ff00ff"/>
<rect x="63" y="266.9" width="1" height="10.1" fill="#ff00ff"/>
<rect x="64" y="269.0" width="1" height="8.6" fill="#ff00ff"/>
<rect x="65" y="271.5" width="1" height="8.4" fill="#ff00ff"/>
<rect x="66" y="273.3" width="1" height="9.2" fill="#ff00ff"/>
<rect x="66" y="274.8" width="1" height="2.0" fill="#a000a0"/>
<rect x="67" y="273.6" width="1" height="12.1" fill="#ff00ff"/>
<rect x="68" y="277.5" width="1" height="10.4" fill="#ff00ff"/>
<rect x="69" y="279.0" width="1" height="10.5" fill="#ff00ff"/>
<rect x="70" y="282.7" width="1" height="9.6" fill="#ff00ff"/>
<rect x="71" y="284.9" width="1" height="9.6" fill="#ff00ff"/>
<rect x="72" y="287.2" width="1" height="9.0" fill="#ff00ff"/>
<rect x="73" y="289.8" width="1" height="9.6" fill="#ff00ff"/>
<rect x="74" y="292.1" width="1" height="9.1" fill="#ff00ff"/>
<rect x="75" y="293.0" width="1" height="10.7" fill="#ff00ff"/>
<rect x="76" y="295.5" width="1" height="10.8" fill="#ff00ff"/>
<rect x="77" y="299.6" width="1" height="9.1" fill="#ff00ff"/>
<rect x="78" y="302.4" width="1" height="9.2" fill="#ff00ff"/>
<rect x="79" y="304.8" width="1" height="9.9" fill="#ff00ff"/>
<rect x="80" y="290.4" width="1" height="5.5" fill="#ff00ff"/>
<rect x="80" y="295.9" width="1" height="6.9" fill="#ff00ff"/>
<rect x="80" y="302.8" width="1" height="5.1" fill="#ff00ff"/>
<rect x="80" y="307.8" width="1" height="3.3" fill="#ff00ff"/>
<rect x="80" y="311.1" width="1" height="2.3" fill="#ff00ff"/>
<rect x="80" y="313.4" width="1" height="1.3" fill="#ff00ff"/>
<rect x="81" y="280.1" width="1" height="4.8" fill="#ff00ff"/>
<rect x="81" y="284.8" width="1" height="6.8" fill="#ff00ff"/>
<rect x="81" y="291.7" width="1" height="7.0" fill="#ff00ff"/>
<rect x="81" y="298.6" width="1" height="6.0" fill="#ff00ff"/>
<rect x="81" y="304.7" width="1" height="5.0" fill="#ff00ff"/>
<rect x="81" y="311.9" width="1" height="1.0" fill="#ff00ff"/>
<rect x="82" y="275.5" width="1" height="5.1" fill="#ff00ff"/>
<rect x="82" y="280.5" width="1" height="6.7" fill="#ff00ff"/>
<rect x="82" y="287.2" width="1" height="4.6" fill="#ff00ff"/>
<rect x="82" y="291.9" width="1" height="3.8" fill="#ff00ff"/>
<rect x="82" y="295.7" width="1" height="5.3" fill="#ff00ff"/>
<rect x="82" y="301.0" width="1" height="3.4" fill="#ff00ff"/>
<rect x="82" y="304.4" width="1" height="2.9" fill="#ff00ff"/>
<rect x="83" y="272.6" width="1" height="2.8" fill="#ff00ff"/>
<rect x="83" y="275.3" width="1" height="3.9" fill="#d000d8"/>
<rect x="83" y="279.3" width="1" height="5.7" fill="#ff00ff"/>
<rect x="83" y="292.0" width="1" height="2.4" fill="#d000d8"/>
<rect x="83" y="294.3" width="1" height="4.1" fill="#ff00ff"/>
<rect x="83" y="298.5" width="1" height="3.7" fill="#ff00ff"/>
<rect x="84" y="271.1" width="1" height="5.6" fill="#ff00ff"/>
<rect x="84" y="276.7" width="1" height="6.9" fill="#d000d8"/>
<rect x="84" y="283.6" width="1" height="5.0" fill="#ff00ff"/>
<rect x="84" y="288.6" width="1" height="5.1" fill="#ff00ff"/>
<rect x="84" y="293.7" width="1" height="3.0" fill="#ff00ff"/>
<rect x="84" y="296.7" width="1" height="4.6" fill="#ff00ff"/>
<rect x="84" y="301.4" width="1" height="2.6" fill="#ff00ff"/>
<rect x="85" y="268.5" width="1" height="4.9" fill="#ff00ff"/>
<rect x="85" y="273.5" width="1" height="5.9" fill="#ff00ff"/>
<rect x="85" y="286.3" width="1" height="5.7" fill="#ff00ff"/>
<rect x="85" y="292.0" width="1" height="2.6" fill="#d000d8"/>
<rect x="85" y="294.6" width="1" height="3.4" fill="#ff00ff"/>
<rect x="86" y="266.2" width="1" height="5.4" fill="#ff00ff"/>
<rect x="86" y="271.6" width="1" height="5.0" fill="#ff00ff"/>
<rect x="86" y="276.6" width="1" height="5.8" fill="#ff00ff"/>
<rect x="86" y="285.6" width="1" height="6.6" fill="#d000d8"/>
<rect x="86" y="292.2" width="1" height="2.2" fill="#ff00ff"/>
<rect x="86" y="294.4" width="1" height="1.2" fill="#ff00ff"/>
<rect x="87" y="265.5" width="1" height="4.7" fill="#ff00ff"/>
<rect x="87" y="270.2" width="1" height="2.4" fill="#ff00ff"/>
<rect x="87" y="272.6" width="1" height="4.8" fill="#ff00ff"/>
<rect x="87" y="277.4" width="1" height="3.9" fill="#ff00ff"/>
<rect x="87" y="281.2" width="1" height="3.1" fill="#ff00ff"/>
<rect x="87" y="284.3" width="1" height="5.7" fill="#d000d8"/>
<rect x="87" y="290.0" width="1" height="2.3" fill="#ff00ff"/>
<rect x="88" y="264.6" width="1" height="5.8" fill="#ff00ff"/>
<rect x="88" y="270.5" width="1" height="4.1" fill="#ff00ff"/>
<rect x="88" y="274.6" width="1" height="6.0" fill="#ff00ff"/>
<rect x="88" y="285.9" width="1" height="3.6" fill="#ff00ff"/>
<rect x="89" y="261.6" width="1" height="2.5" fill="#d000d8"/>
<rect x="89" y="264.1" width="1" height="2.4" fill="#ff00ff"/>
<rect x="89" y="266.5" width="1" height="4.8" fill="#ff00ff"/>
<rect x="89" y="271.3" width="1" height="5.4" fill="#ff00ff"/>
<rect x="89" y="276.7" width="1" height="5.9" fill="#ff00ff"/>
<rect x="89" y="282.6" width="1" height="3.1" fill="#ff00ff"/>
<rect x="89" y="285.7" width="1" height="2.4" fill="#ff00ff"/>
<rect x="89" y="288.1" width="1" height="1.0" fill="#ff00ff"/>
<rect x="90" y="259.7" width="1" height="3.8" fill="#ff00ff"/>
<rect x="90" y="263.4" width="1" height="3.8" fill="#ff00ff"/>
<rect x="90" y="267.3" width="1" height="5.5" fill="#ff00ff"/>
<rect x="90" y="279.4" width="1" height="6.2" fill="#ff00ff"/>
<rect x="91" y="260.5" width="1" height="3.6" fill="#ff00ff"/>
<rect x="91" y="264.0" width="1" height="6.7" fill="#d000d8"/>
<rect x="91" y="270.7" width="1" height="3.2" fill="#ff00ff"/>
<rect x="91" y="274.0" width="1" height="3.8" fill="#ff00ff"/>
<rect x="91" y="277.8" width="1" height="4.0" fill="#ff00ff"/>
<rect x="91" y="281.8" width="1" height="2.5" fill="#ff00ff"/>
<rect x="92" y="259.2" width="1" height="6.2" fill="#ff00ff"/>
<rect x="92" y="265.4" width="1" height="2.9" fill="#ff00ff"/>
<rect x="92" y="268.3" width="1" height="6.4" fill="#ff00ff"/>
<rect x="92" y="274.7" width="1" height="2.1" fill="#ff00ff"/>
<rect x="92" y="276.8" width="1" height="4.7" fill="#ff00ff"/>
<rect x="92" y="281.5" width="1" height="1.8" fill="#ff00ff"/>
<rect x="93" y="258.1" width="1" height="4.7" fill="#ff00ff"/>
<rect x="93" y="262.8" width="1" height="2.4" fill="#ff00ff"/>
<rect x="93" y="265.3" width="1" height="5.7" fill="#d000d8"/>
<rect x="93" y="270.9" width="1" height="2.4" fill="#ff00ff"/>
<rect x="93" y="273.4" width="1" height="2.7" fill="#ff00ff"/>
<rect x="93" y="276.1" width="1" height="2.7" fill="#ff00ff"/>
<rect x="94" y="254.7" width="1" height="4.6" fill="#ff00ff"/>
<rect x="94" y="259.3" width="1" height="4.0" fill="#ff00ff"/>
<rect x="94" y="263.3" width="1" height="6.8" fill="#ff00ff"/>
<rect x="94" y="270.1" width="1" height="4.5" fill="#ff00ff"/>
<rect x="94" y="274.6" width="1" height="5.6" fill="#ff00ff"/>
<rect x="94" y="280.2" width="1" height="1.0" fill="#ff00ff"/>
<rect x="95" y="256.1" width="1" height="6.3" fill="#d000d8"/>
<rect x="95" y="262.3" width="1" height="6.2" fill="#d000d8"/>
<rect x="95" y="268.5" width="1" height="6.8" fill="#ff00ff"/>
<rect x="95" y="275.3" width="1" height="2.4" fill="#ff00ff"/>
<rect x="96" y="255.0" width="1" height="4.1" fill="#ff00ff"/>
<rect x="96" y="264.8" width="1" height="3.9" fill="#ff00ff"/>
<rect x="96" y="268.7" width="1" height="3.0" fill="#ff00ff"/>
<rect x="97" y="251.1" width="1" height="2.6" fill="#ff00ff"/>
<rect x="97" y="253.6" width="1" height="5.9" fill="#ff00ff"/>
<rect x="97" y="259.5" width="1" height="2.3" fill="#ff00ff"/>
<rect x="97" y="261.8" width="1" height="4.9" fill="#d000d8"/>
<rect x="97" y="266.8" width="1" height="2.2" fill="#ff00ff"/>
<rect x="97" y="268.9" width="1" height="2.9" fill="#ff00ff"/>
<rect x="98" y="250.9" width="1" height="5.0" fill="#ff00ff"/>
<rect x="98" y="255.8" width="1" height="2.9" fill="#ff00ff"/>
<rect x="98" y="258.8" width="1" height="2.9" fill="#ff00ff"/>
<rect x="98" y="261.6" width="1" height="3.6" fill="#ff00ff"/>
<rect x="98" y="265.2" width="1" height="6.1" fill="#ff00ff"/>
<rect x="98" y="271.3" width="1" height="1.0" fill="#d000d8"/>
<rect x="99" y="257.4" width="1" height="4.4" fill="#ff00ff"/>
<rect x="99" y="264.1" width="1" height="3.9" fill="#ff00ff"/>
<rect x="100" y="253.7" width="1" height="5.3" fill="#ff00ff"/>
<rect x="100" y="259.0" width="1" height="2.1" fill="#ff00ff"/>
<rect x="100" y="261.0" width="1" height="3.9" fill="#ff00ff"/>
<rect x="100" y="264.9" width="1" height="2.1" fill="#ff00ff"/>
<rect x="101" y="248.0" width="1" height="3.6" fill="#ff00ff"/>
<rect x="101" y="251.6" width="1" height="6.3" fill="#ff00ff"/>
<rect x="101" y="263.1" width="1" height="1.0" fill="#ff00ff"/>
<rect x="102" y="247.2" width="1" height="2.0" fill="#d000d8"/>
<rect x="102" y="249.2" width="1" height="6.2" fill="#d000d8"/>
<rect x="102" y="255.4" width="1" height="2.4" fill="#ff00ff"/>
<rect x="102" y="257.8" width="1" height="5.6" fill="#ff00ff"/>
<rect x="102" y="263.4" width="1" height="1.0" fill="#ff00ff"/>
<rect x="103" y="249.6" width="1" height="6.3" fill="#ff00ff"/>
<rect x="103" y="255.9" width="1" height="5.7" fill="#ff00ff"/>
<rect x="104" y="248.7" width="1" height="6.1" fill="#ff00ff"/>
<rect x="104" y="254.9" width="1" height="2.4" fill="#ff00ff"/>
<rect x="105" y="245.0" width="1" height="3.6" fill="#ff00ff"/>
<rect x="105" y="248.5" width="1" height="2.4" fill="#ff00ff"/>
<rect x="105" y="250.9" width="1" height="4.3" fill="#ff00ff"/>
<rect x="105" y="255.3" width="1" height="3.8" fill="#ff00ff"/>
<rect x="105" y="259.1" width="1" height="1.0" fill="#ff00ff"/>
<rect x="106" y="245.9" width="1" height="11.2" fill="#ff00ff"/>
<rect x="107" y="246.5" width="1" height="8.5" fill="#ff00ff"/>
<rect x="108" y="247.0" width="1" height="8.9" fill="#ff00ff"/>
<rect x="109" y="246.8" width="1" height="8.9" fill="#ff00ff"/>
<rect x="110" y="248.3" width="1" height="8.6" fill="#ff00ff"/>
<rect x="111" y="247.8" width="1" height="10.2" fill="#ff00ff"/>
<rect x="112" y="248.7" width="1" height="10.1" fill="#ff00ff"/>
<rect x="113" y="250.7" width="1" height="9.0" fill="#ff00ff"/>
<rect x="113" y="257.3" width="1" height="1.7" fill="#a000a0"/>
<rect x="114" y="252.6" width="1" height="9.1" fill="#ff00ff"/>
<rect x="115" y="252.4" width="1" height="11.2" fill="#ff00ff"/>
<rect x="115" y="254.0" width="1" height="1.2" fill="#a000a0"/>
<rect x="116" y="254.7" width="1" height="10.1" fill="#ff00ff"/>
<rect x="116" y="258.8" width="1" height="2.7" fill="#a000a0"/>
<rect x="117" y="256.2" width="1" height="8.8" fill="#ff00ff"/>
<rect x="118" y="256.9" width="1" height="9.9" fill="#ff00ff"/>
<rect x="119" y="258.5" width="1" height="12.0" fill="#ff00ff"/>
<rect x="120" y="261.6" width="1" height="10.3" fill="#ff00ff"/>
<rect x="121" y="264.5" width="1" height="9.0" fill="#ff00ff"/>
<rect x="122" y="265.7" width="1" height="9.0" fill="#ff00ff"/>
<rect x="123" y="268.7" width="1" height="10.7" fill="#ff00ff"/>
<rect x="124" y="271.1" width="1" height="9.9" fill="#ff00ff"/>
<rect x="124" y="274.4" width="1" height="1.7" fill="#a000a0"/>
<rect x="125" y="273.6" width="1" height="8.7" fill="#ff00ff"/>
<rect x="126" y="275.9" width="1" height="10.7" fill="#ff00ff"/>
<rect x="127" y="278.9" width="1" height="8.9" fill="#ff00ff"/>
<rect x="128" y="282.4" width="1" height="9.1" fill="#ff00ff"/>
<rect x="129" y="284.3" width="1" height="9.1" fill="#ff00ff"/>
<rect x="130" y="288.4" width="1" height="8.9" fill="#ff00ff"/>
<rect x="131" y="291.0" width="1" height="8.5" fill="#ff00ff"/>
<rect x="132" y="293.6" width="1" height="9.0" fill="#ff00ff"/>
<rect x="132" y="295.8" width="1" height="2.2" fill="#a000a0"/>
<rect x="133" y="296.9" width="1" height="9.1" fill="#ff00ff"/>
<rect x="134" y="299.2" width="1" height="10.2" fill="#ff00ff"/>
<rect x="134" y="309.2" width="1" height="1.3" fill="#a000a0"/>
<rect x="135" y="303.7" width="1" height="9.1" fill="#ff00ff"/>
<rect x="136" y="306.1" width="1" height="9.3" fill="#ff00ff"/>
<rect x="137" y="310.3" width="1" height="9.6" fill="#ff00ff"/>
<rect x="138" y="311.5" width="1" height="11.7" fill="#ff00ff"/>
<rect x="139" y="298.5" width="1" height="4.9" fill="#d000d8"/>
<rect x="139" y="303.3" width="1" height="2.9" fill="#ff00ff"/>
<rect x="139" y="306.2" width="1" height="2.4" fill="#ff00ff"/>
<rect x="139" y="311.5" width="1" height="6.7" fill="#ff00ff"/>
<rect x="139" y="318.2" width="1" height="2.6" fill="#ff00ff"/>
<rect x="140" y="290.7" width="1" height="5.0" fill="#d000d8"/>
<rect x="140" y="295.7" width="1" height="2.1" fill="#ff00ff"/>
<rect x="140" y="297.8" width="1" height="4.3" fill="#ff00ff"/>
<rect x="140" y="302.1" width="1" height="3.9" fill="#ff00ff"/>
<rect x="140" y="306.0" width="1" height="2.9" fill="#ff00ff"/>
<rect x="140" y="308.9" width="1" height="3.3" fill="#ff00ff"/>
<rect x="140" y="312.2" width="1" height="3.7" fill="#ff00ff"/>
<rect x="140" y="315.9" width="1" height="2.2" fill="#ff00ff"/>
<rect x="141" y="286.0" width="1" height="4.1" fill="#ff00ff"/>
<rect x="141" y="290.1" width="1" height="5.4" fill="#ff00ff"/>
<rect x="141" y="295.5" width="1" height="5.8" fill="#ff00ff"/>
<rect x="141" y="301.3" width="1" height="7.0" fill="#d000d8"/>
<rect x="141" y="308.2" width="1" height="6.3" fill="#ff00ff"/>
<rect x="141" y="314.5" width="1" height="1.3" fill="#ff00ff"/>
<rect x="142" y="284.1" width="1" height="4.6" fill="#ff00ff"/>
<rect x="142" y="288.7" width="1" height="6.5" fill="#ff00ff"/>
<rect x="142" y="295.3" width="1" height="2.3" fill="#ff00ff"/>
<rect x="142" y="297.5" width="1" height="6.5" fill="#ff00ff"/>
<rect x="142" y="304.0" width="1" height="5.0" fill="#ff00ff"/>
<rect x="142" y="309.0" width="1" height="3.5" fill="#ff00ff"/>
<rect x="142" y="312.5" width="1" height="1.0" fill="#ff00ff"/>
<rect x="143" y="279.7" width="1" height="4.0" fill="#ff00ff"/>
<rect x="143" y="283.7" width="1" height="5.5" fill="#ff00ff"/>
<rect x="143" y="289.2" width="1" height="3.2" fill="#ff00ff"/>
<rect x="143" y="292.4" width="1" height="4.0" fill="#ff00ff"/>
<rect x="143" y="296.4" width="1" height="2.3" fill="#d000d8"/>
<rect x="143" y="298.7" width="1" height="6.8" fill="#ff00ff"/>
<rect x="143" y="305.5" width="1" height="5.3" fill="#ff00ff"/>
<rect x="144" y="279.0" width="1" height="5.7" fill="#ff00ff"/>
<rect x="144" y="284.7" width="1" height="6.5" fill="#ff00ff"/>
<rect x="144" y="291.2" width="1" height="6.0" fill="#ff00ff"/>
<rect x="144" y="301.9" width="1" height="2.0" fill="#ff00ff"/>
<rect x="144" y="303.9" width="1" height="3.1" fill="#ff00ff"/>
<rect x="145" y="274.1" width="1" height="6.1" fill="#ff00ff"/>
<rect x="145" y="280.2" width="1" height="3.8" fill="#ff00ff"/>
<rect x="145" y="284.0" width="1" height="2.2" fill="#ff00ff"/>
<rect x="145" y="286.2" width="1" height="6.5" fill="#ff00ff"/>
<rect x="145" y="297.2" width="1" height="6.9" fill="#ff00ff"/>
<rect x="145" y="304.1" width="1" height="3.0" fill="#ff00ff"/>
<rect x="145" y="307.1" width="1" height="1.0" fill="#d000d8"/>
<rect x="146" y="272.9" width="1" height="3.8" fill="#ff00ff"/>
<rect x="146" y="276.7" width="1" height="2.9" fill="#d000d8"/>
<rect x="146" y="279.5" width="1" height="7.0" fill="#ff00ff"/>
<rect x="146" y="286.5" width="1" height="5.2" fill="#ff00ff"/>
<rect x="146" y="291.7" width="1" height="6.4" fill="#ff00ff"/>
<rect x="146" y="298.1" width="1" height="2.5" fill="#ff00ff"/>
<rect x="146" y="300.6" width="1" height="3.6" fill="#d000d8"/>
<rect x="146" y="304.2" width="1" height="1.4" fill="#ff00ff"/>
<rect x="147" y="271.1" width="1" height="6.7" fill="#ff00ff"/>
<rect x="147" y="277.8" width="1" height="2.4" fill="#ff00ff"/>
<rect x="147" y="280.2" width="1" height="3.5" fill="#ff00ff"/>
<rect x="147" y="283.7" width="1" height="3.0" fill="#ff00ff"/>
<rect x="147" y="286.7" width="1" height="3.2" fill="#ff00ff"/>
<rect x="147" y="289.9" width="1" height="6.0" fill="#ff00ff"/>
<rect x="147" y="295.8" width="1" height="5.3" fill="#d000d8"/>
<rect x="147" y="301.1" width="1" height="1.5" fill="#ff00ff"/>
<rect x="148" y="270.3" width="1" height="5.3" fill="#ff00ff"/>
<rect x="148" y="275.7" width="1" height="5.2" fill="#ff00ff"/>
<rect x="148" y="280.9" width="1" height="6.9" fill="#ff00ff"/>
<rect x="148" y="287.8" width="1" height="4.6" fill="#ff00ff"/>
<rect x="148" y="292.4" width="1" height="2.2" fill="#ff00ff"/>
<rect x="148" y="294.6" width="1" height="3.4" fill="#ff00ff"/>
<rect x="148" y="298.1" width="1" height="3.6" fill="#ff00ff"/>
<rect x="149" y="268.9" width="1" height="3.2" fill="#ff00ff"/>
<rect x="149" y="272.2" width="1" height="4.7" fill="#ff00ff"/>
<rect x="149" y="283.4" width="1" height="2.2" fill="#ff00ff"/>
<rect x="149" y="285.6" width="1" height="5.8" fill="#ff00ff"/>
<rect x="149" y="291.3" width="1" height="6.6" fill="#ff00ff"/>
<rect x="149" y="298.0" width="1" height="1.0" fill="#ff00ff"/>
<rect x="150" y="269.1" width="1" height="5.3" fill="#ff00ff"/>
<rect x="150" y="274.4" width="1" height="4.6" fill="#ff00ff"/>
<rect x="150" y="279.0" width="1" height="6.2" fill="#ff00ff"/>
<rect x="150" y="289.8" width="1" height="2.9" fill="#ff00ff"/>
<rect x="150" y="292.7" width="1" height="2.1" fill="#ff00ff"/>
<rect x="151" y="266.3" width="1" height="5.9" fill="#ff00ff"/>
<rect x="151" y="272.2" width="1" height="6.0" fill="#ff00ff"/>
<rect x="151" y="278.1" width="1" height="4.4" fill="#ff00ff"/>
<rect x="151" y="282.6" width="1" height="4.9" fill="#ff00ff"/>
<rect x="151" y="287.5" width="1" height="2.2" fill="#ff00ff"/>
<rect x="151" y="289.6" width="1" height="3.5" fill="#ff00ff"/>
<rect x="152" y="267.7" width="1" height="2.8" fill="#ff00ff"/>
<rect x="152" y="270.5" width="1" height="4.5" fill="#ff00ff"/>
<rect x="152" y="275.0" width="1" height="4.2" fill="#ff00ff"/>
<rect x="152" y="279.2" width="1" height="6.0" fill="#ff00ff"/>
<rect x="152" y="285.2" width="1" height="4.7" fill="#ff00ff"/>
<rect x="153" y="265.4" width="1" height="3.2" fill="#ff00ff"/>
<rect x="153" y="268.6" width="1" height="3.6" fill="#ff00ff"/>
<rect x="153" y="272.1" width="1" height="3.6" fill="#ff00ff"/>
<rect x="153" y="275.7" width="1" height="4.6" fill="#ff00ff"/>
<rect x="153" y="280.3" width="1" height="4.9" fill="#ff00ff"/>
<rect x="153" y="285.3" width="1" height="5.8" fill="#ff00ff"/>
<rect x="154" y="263.2" width="1" height="5.5" fill="#d000d8"/>
<rect x="154" y="268.7" width="1" height="5.9" fill="#ff00ff"/>
<rect x="154" y="274.6" width="1" height="4.1" fill="#ff00ff"/>
<rect x="154" y="281.7" width="1" height="2.2" fill="#ff00ff"/>
<rect x="155" y="261.8" width="1" height="5.7" fill="#ff00ff"/>
<rect x="155" y="267.5" width="1" height="3.2" fill="#d000d8"/>
<rect x="155" y="270.7" width="1" height="2.7" fill="#ff00ff"/>
<rect x="155" y="273.4" width="1" height="3.5" fill="#ff00ff"/>
<rect x="155" y="276.9" width="1" height="2.4" fill="#ff00ff"/>
<rect x="155" y="279.3" width="1" height="6.2" fill="#ff00ff"/>
<rect x="156" y="263.2" width="1" height="3.3" fill="#ff00ff"/>
<rect x="156" y="266.5" width="1" height="3.2" fill="#ff00ff"/>
<rect x="156" y="269.7" width="1" height="6.7" fill="#ff00ff"/>
<rect x="156" y="280.1" width="1" height="2.5" fill="#ff00ff"/>
<rect x="157" y="261.0" width="1" height="2.3" fill="#ff00ff"/>
<rect x="157" y="263.3" width="1" height="5.5" fill="#d000d8"/>
<rect x="157" y="268.8" width="1" height="5.0" fill="#d000d8"/>
<rect x="157" y="273.7" width="1" height="4.3" fill="#ff00ff"/>
<rect x="157" y="278.1" width="1" height="4.7" fill="#ff00ff"/>
<rect x="158" y="261.7" width="1" height="3.7" fill="#ff00ff"/>
<rect x="158" y="265.4" width="1" height="4.7" fill="#ff00ff"/>
<rect x="158" y="270.2" width="1" height="3.0" fill="#ff00ff"/>
<rect x="158" y="273.2" width="1" height="4.3" fill="#ff00ff"/>
<rect x="159" y="260.5" width="1" height="3.0" fill="#ff00ff"/>
<rect x="159" y="263.5" width="1" height="2.4" fill="#ff00ff"/>
<rect x="159" y="265.8" width="1" height="3.8" fill="#ff00ff"/>
<rect x="159" y="269.7" width="1" height="2.1" fill="#ff00ff"/>
<rect x="159" y="271.8" width="1" height="3.3" fill="#ff00ff"/>
<rect x="159" y="275.1" width="1" height="5.2" fill="#ff00ff"/>
<rect x="160" y="260.8" width="1" height="3.8" fill="#ff00ff"/>
<rect x="160" y="264.6" width="1" height="5.6" fill="#d000d8"/>
<rect x="160" y="270.2" width="1" height="2.1" fill="#ff00ff"/>
<rect x="160" y="272.3" width="1" height="3.6" fill="#ff00ff"/>
<rect x="161" y="259.7" width="1" height="5.9" fill="#ff00ff"/>
<rect x="161" y="265.6" width="1" height="2.3" fill="#ff00ff"/>
<rect x="161" y="267.8" width="1" height="3.2" fill="#ff00ff"/>
<rect x="161" y="271.0" width="1" height="2.8" fill="#ff00ff"/>
<rect x="161" y="273.8" width="1" height="1.0" fill="#ff00ff"/>
<rect x="162" y="257.1" width="1" height="2.7" fill="#ff00ff"/>
<rect x="162" y="259.8" width="1" height="3.3" fill="#ff00ff"/>
<rect x="162" y="263.1" width="1" height="5.3" fill="#ff00ff"/>
<rect x="162" y="268.4" width="1" height="3.0" fill="#ff00ff"/>
<rect x="162" y="271.5" width="1" height="1.8" fill="#ff00ff"/>
<rect x="163" y="256.3" width="1" height="3.1" fill="#ff00ff"/>
<rect x="163" y="259.4" width="1" height="3.7" fill="#ff00ff"/>
<rect x="163" y="263.1" width="1" height="2.2" fill="#ff00ff"/>
<rect x="163" y="265.3" width="1" height="5.2" fill="#ff00ff"/>
<rect x="164" y="255.2" width="1" height="6.6" fill="#ff00ff"/>
<rect x="164" y="261.8" width="1" height="5.4" fill="#ff00ff"/>
<rect x="164" y="267.2" width="1" height="3.2" fill="#d000d8"/>
<rect x="165" y="254.3" width="1" height="2.4" fill="#ff00ff"/>
<rect x="165" y="256.7" width="1" height="4.0" fill="#ff00ff"/>
<rect x="165" y="260.7" width="1" height="3.9" fill="#ff00ff"/>
<rect x="165" y="264.6" width="1" height="4.0" fill="#ff00ff"/>
<rect x="166" y="253.3" width="1" height="4.4" fill="#ff00ff"/>
<rect x="166" y="257.7" width="1" height="5.3" fill="#ff00ff"/>
<rect x="166" y="263.0" width="1" height="2.5" fill="#ff00ff"/>
<rect x="166" y="265.5" width="1" height="1.0" fill="#ff00ff"/>
<rect x="167" y="254.3" width="1" height="4.8" fill="#ff00ff"/>
<rect x="167" y="259.1" width="1" height="2.1" fill="#ff00ff"/>
<rect x="167" y="261.2" width="1" height="3.8" fill="#ff00ff"/>
<rect x="167" y="265.0" width="1" height="1.0" fill="#ff00ff"/>
<rect x="168" y="254.0" width="1" height="10.2" fill="#ff00ff"/>
<rect x="169" y="253.8" width="1" height="9.8" fill="#ff00ff"/>
<rect x="169" y="257.2" width="1" height="2.8" fill="#a000a0"/>
<rect x="170" y="254.7" width="1" height="9.3" fill="#ff00ff"/>
<rect x="171" y="254.1" width="1" height="10.7" fill="#ff00ff"/>
<rect x="172" y="256.5" width="1" height="8.6" fill="#ff00ff"/>
<rect x="173" y="257.1" width="1" height="9.6" fill="#ff00ff"/>
<rect x="174" y="257.0" width="1" height="9.5" fill="#ff00ff"/>
<rect x="175" y="257.0" width="1" height="11.3" fill="#ff00ff"/>
<rect x="176" y="258.2" width="1" height="11.3" fill="#ff00ff"/>
<rect x="176" y="259.7" width="1" height="2.0" fill="#a000a0"/>
<rect x="177" y="259.0" width="1" height="10.1" fill="#ff00ff"/>
<rect x="178" y="259.8" width="1" height="10.1" fill="#ff00ff"/>
<rect x="179" y="262.3" width="1" height="8.9" fill="#ff00ff"/>
<rect x="179" y="267.1" width="1" height="1.8" fill="#a000a0"/>
<rect x="180" y="262.5" width="1" height="10.6" fill="#ff00ff"/>
<rect x="181" y="264.7" width="1" height="10.2" fill="#ff00ff"/>
<rect x="182" y="266.9" width="1" height="10.3" fill="#ff00ff"/>
<rect x="183" y="267.3" width="1" height="11.3" fill="#ff00ff"/>
<rect x="184" y="269.8" width="1" height="10.0" fill="#ff00ff"/>
<rect x="185" y="272.2" width="1" height="9.7" fill="#ff00ff"/>
<rect x="185" y="278.2" width="1" height="2.0" fill="#a000a0"/>
<rect x="186" y="273.0" width="1" height="9.5" fill="#ff00ff"/>
<rect x="187" y="275.4" width="1" height="9.5" fill="#ff00ff"/>
<rect x="188" y="276.1" width="1" height="10.2" fill="#ff00ff"/>
<rect x="188" y="281.3" width="1" height="1.3" fill="#a000a0"/>
<rect x="189" y="277.7" width="1" height="10.0" fill="#ff00ff"/>
<rect x="189" y="284.7" width="1" height="1.2" fill="#a000a0"/>
<rect x="190" y="280.7" width="1" height="10.8" fill="#ff00ff"/>
<rect x="191" y="282.1" width="1" height="11.7" fill="#ff00ff"/>
<rect x="192" y="284.0" width="1" height="10.5" fill="#ff00ff"/>
<rect x="193" y="288.0" width="1" height="9.0" fill="#ff00ff"/>
<rect x="194" y="288.9" width="1" height="11.1" fill="#ff00ff"/>
<rect x="195" y="291.4" width="1" height="11.0" fill="#ff00ff"/>
<rect x="196" y="294.9" width="1" height="9.4" fill="#ff00ff"/>
<rect x="197" y="297.0" width="1" height="9.8" fill="#ff00ff"/>
<rect x="198" y="299.5" width="1" height="8.4" fill="#ff00ff"/>
<rect x="199" y="301.6" width="1" height="8.9" fill="#ff00ff"/>
<rect x="199" y="301.7" width="1" height="2.2" fill="#a000a0"/>
<rect x="200" y="304.6" width="1" height="10.1" fill="#ff00ff"/>
<rect x="200" y="311.5" width="1" height="1.8" fill="#a000a0"/>
<rect x="201" y="291.5" width="1" height="2.2" fill="#ff00ff"/>
<rect x="201" y="293.7" width="1" height="2.6" fill="#ff00ff"/>
<rect x="201" y="296.3" width="1" height="3.4" fill="#ff00ff"/>
<rect x="201" y="299.7" width="1" height="7.0" fill="#ff00ff"/>
<rect x="201" y="306.7" width="1" height="3.5" fill="#ff00ff"/>
<rect x="202" y="278.7" width="1" height="3.9" fill="#ff00ff"/>
<rect x="202" y="282.6" width="1" height="6.0" fill="#d000d8"/>
<rect x="202" y="288.6" width="1" height="3.4" fill="#ff00ff"/>
<rect x="202" y="292.0" width="1" height="5.1" fill="#ff00ff"/>
<rect x="202" y="297.1" width="1" height="6.9" fill="#ff00ff"/>
<rect x="202" y="304.0" width="1" height="3.2" fill="#ff00ff"/>
<rect x="203" y="276.0" width="1" height="2.9" fill="#ff00ff"/>
<rect x="203" y="278.9" width="1" height="6.7" fill="#ff00ff"/>
<rect x="203" y="285.6" width="1" height="4.4" fill="#ff00ff"/>
<rect x="203" y="290.0" width="1" height="3.6" fill="#ff00ff"/>
<rect x="203" y="293.6" width="1" height="4.8" fill="#ff00ff"/>
<rect x="203" y="298.4" width="1" height="4.0" fill="#ff00ff"/>
<rect x="204" y="270.8" width="1" height="3.8" fill="#ff00ff"/>
<rect x="204" y="274.7" width="1" height="2.3" fill="#ff00ff"/>
<rect x="204" y="276.9" width="1" height="6.5" fill="#ff00ff"/>
<rect x="204" y="283.4" width="1" height="2.4" fill="#ff00ff"/>
<rect x="204" y="290.2" width="1" height="3.0" fill="#d000d8"/>
<rect x="204" y="293.2" width="1" height="4.4" fill="#ff00ff"/>
<rect x="204" y="297.6" width="1" height="3.7" fill="#ff00ff"/>
<rect x="205" y="267.7" width="1" height="5.3" fill="#ff00ff"/>
<rect x="205" y="282.7" width="1" height="4.2" fill="#d000d8"/>
<rect x="205" y="287.0" width="1" height="5.6" fill="#ff00ff"/>
<rect x="205" y="292.6" width="1" height="2.1" fill="#ff00ff"/>
<rect x="205" y="294.7" width="1" height="2.6" fill="#ff00ff"/>
<rect x="205" y="297.3" width="1" height="1.6" fill="#ff00ff"/>
<rect x="206" y="266.7" width="1" height="2.1" fill="#ff00ff"/>
<rect x="206" y="268.7" width="1" height="6.8" fill="#ff00ff"/>
<rect x="206" y="275.5" width="1" height="4.6" fill="#d000d8"/>
<rect x="206" y="280.2" width="1" height="6.0" fill="#ff00ff"/>
<rect x="206" y="286.1" width="1" height="4.0" fill="#d000d8"/>
<rect x="206" y="290.1" width="1" height="6.0" fill="#ff00ff"/>
<rect x="207" y="267.6" width="1" height="6.8" fill="#ff00ff"/>
<rect x="207" y="274.3" width="1" height="5.5" fill="#ff00ff"/>
<rect x="207" y="279.8" width="1" height="6.5" fill="#ff00ff"/>
<rect x="207" y="286.4" width="1" height="4.9" fill="#ff00ff"/>
<rect x="207" y="291.3" width="1" height="1.0" fill="#ff00ff"/>
<rect x="208" y="264.6" width="1" height="3.8" fill="#ff00ff"/>
<rect x="208" y="268.4" width="1" height="3.8" fill="#ff00ff"/>
<rect x="208" y="272.2" width="1" height="6.5" fill="#ff00ff"/>
<rect x="208" y="278.7" width="1" height="2.5" fill="#ff00ff"/>
<rect x="208" y="281.2" width="1" height="5.7" fill="#ff00ff"/>
<rect x="208" y="286.9" width="1" height="5.7" fill="#ff00ff"/>
<rect x="208" y="292.6" width="1" height="1.0" fill="#ff00ff"/>
<rect x="209" y="260.9" width="1" height="3.8" fill="#ff00ff"/>
<rect x="209" y="264.6" width="1" height="2.0" fill="#ff00ff"/>
<rect x="209" y="266.7" width="1" height="4.0" fill="#ff00ff"/>
<rect x="209" y="275.4" width="1" height="3.0" fill="#d000d8"/>
<rect x="209" y="278.4" width="1" height="3.6" fill="#ff00ff"/>
<rect x="210" y="259.9" width="1" height="5.5" fill="#ff00ff"/>
<rect x="210" y="265.5" width="1" height="3.4" fill="#ff00ff"/>
<rect x="210" y="268.8" width="1" height="6.7" fill="#ff00ff"/>
<rect x="210" y="275.6" width="1" height="2.9" fill="#ff00ff"/>
<rect x="210" y="278.5" width="1" height="6.9" fill="#ff00ff"/>
<rect x="210" y="285.4" width="1" height="1.0" fill="#ff00ff"/>
<rect x="211" y="260.3" width="1" height="5.1" fill="#d000d8"/>
<rect x="211" y="265.4" width="1" height="6.3" fill="#ff00ff"/>
<rect x="211" y="271.7" width="1" height="4.5" fill="#ff00ff"/>
<rect x="211" y="276.2" width="1" height="2.6" fill="#d000d8"/>
<rect x="211" y="278.8" width="1" height="4.0" fill="#ff00ff"/>
<rect x="212" y="259.2" width="1" height="3.9" fill="#ff00ff"/>
<rect x="212" y="263.1" width="1" height="5.0" fill="#ff00ff"/>
<rect x="212" y="268.1" width="1" height="4.6" fill="#ff00ff"/>
<rect x="212" y="272.7" width="1" height="5.1" fill="#ff00ff"/>
<rect x="212" y="277.8" width="1" height="3.8" fill="#ff00ff"/>
<rect x="213" y="263.4" width="1" height="5.7" fill="#ff00ff"/>
<rect x="213" y="274.8" width="1" height="3.3" fill="#d000d8"/>
<rect x="214" y="254.8" width="1" height="4.5" fill="#ff00ff"/>
<rect x="214" y="259.3" width="1" height="6.2" fill="#ff00ff"/>
<rect x="214" y="265.5" width="1" height="6.7" fill="#d000d8"/>
<rect x="214" y="272.1" width="1" height="6.0" fill="#ff00ff"/>
<rect x="214" y="278.1" width="1" height="2.0" fill="#ff00ff"/>
<rect x="215" y="256.7" width="1" height="3.3" fill="#d000d8"/>
<rect x="215" y="260.0" width="1" height="4.3" fill="#ff00ff"/>
<rect x="215" y="264.3" width="1" height="6.3" fill="#ff00ff"/>
<rect x="215" y="270.6" width="1" height="3.4" fill="#ff00ff"/>
<rect x="215" y="274.0" width="1" height="2.4" fill="#ff00ff"/>
<rect x="215" y="276.4" width="1" height="1.0" fill="#ff00ff"/>
<rect x="216" y="253.2" width="1" height="6.3" fill="#ff00ff"/>
<rect x="216" y="259.5" width="1" height="4.7" fill="#d000d8"/>
<rect x="216" y="264.3" width="1" height="6.0" fill="#ff00ff"/>
<rect x="216" y="270.2" width="1" height="3.8" fill="#ff00ff"/>
<rect x="216" y="274.1" width="1" height="1.0" fill="#ff00ff"/>
<rect x="217" y="254.8" width="1" height="2.6" fill="#ff00ff"/>
<rect x="217" y="257.4" width="1" height="3.9" fill="#d000d8"/>
<rect x="217" y="261.3" width="1" height="5.1" fill="#d000d8"/>
<rect x="217" y="268.8" width="1" height="3.0" fill="#ff00ff"/>
<rect x="217" y="271.8" width="1" height="1.3" fill="#ff00ff"/>
<rect x="218" y="251.2" width="1" height="4.2" fill="#ff00ff"/>
<rect x="218" y="255.4" width="1" height="3.7" fill="#ff00ff"/>
<rect x="218" y="259.1" width="1" height="5.1" fill="#ff00ff"/>
<rect x="218" y="264.2" width="1" height="5.0" fill="#ff00ff"/>
<rect x="218" y="269.2" width="1" height="1.0" fill="#ff00ff"/>
<rect x="219" y="252.3" width="1" height="2.6" fill="#ff00ff"/>
<rect x="219" y="255.0" width="1" height="6.7" fill="#ff00ff"/>
<rect x="219" y="261.7" width="1" height="3.8" fill="#ff00ff"/>
<rect x="219" y="265.5" width="1" height="1.7" fill="#ff00ff"/>
<rect x="220" y="251.7" width="1" height="3.6" fill="#ff00ff"/>
<rect x="220" y="255.2" width="1" height="2.7" fill="#ff00ff"/>
<rect x="220" y="257.9" width="1" height="4.1" fill="#d000d8"/>
<rect x="220" y="262.1" width="1" height="2.6" fill="#ff00ff"/>
<rect x="221" y="249.9" width="1" height="3.7" fill="#ff00ff"/>
<rect x="221" y="253.7" width="1" height="3.2" fill="#ff00ff"/>
<rect x="221" y="256.8" width="1" height="3.4" fill="#d000d8"/>
<rect x="221" y="260.3" width="1" height="3.4" fill="#d000d8"/>
<rect x="221" y="263.7" width="1" height="1.9" fill="#ff00ff"/>
<rect x="222" y="250.9" width="1" height="5.7" fill="#ff00ff"/>
<rect x="222" y="256.6" width="1" height="4.2" fill="#ff00ff"/>
<rect x="222" y="260.8" width="1" height="1.0" fill="#ff00ff"/>
<rect x="223" y="248.1" width="1" height="3.5" fill="#ff00ff"/>
<rect x="223" y="251.6" width="1" height="5.4" fill="#ff00ff"/>
<rect x="223" y="257.0" width="1" height="4.1" fill="#ff00ff"/>
<rect x="223" y="261.0" width="1" height="1.0" fill="#ff00ff"/>
<rect x="224" y="247.8" width="1" height="9.8" fill="#ff00ff"/>
<rect x="225" y="249.0" width="1" height="9.4" fill="#ff00ff"/>
<rect x="226" y="247.5" width="1" height="11.9" fill="#ff00ff"/>
<rect x="226" y="251.8" width="1" height="1.7" fill="#a000a0"/>
<rect x="227" y="249.4" width="1" height="9.9" fill="#ff00ff"/>
<rect x="228" y="250.5" width="1" height="10.1" fill="#ff00ff"/>
<rect x="228" y="256.9" width="1" height="1.9" fill="#a000a0"/>
<rect x="229" y="249.9" width="1" height="10.2" fill="#ff00ff"/>
<rect x="230" y="251.5" width="1" height="9.8" fill="#ff00ff"/>
<rect x="231" y="253.3" width="1" height="10.0" fill="#ff00ff"/>
<rect x="232" y="254.1" width="1" height="9.6" fill="#ff00ff"/>
<rect x="233" y="255.8" width="1" height="7.8" fill="#ff00ff"/>
<rect x="234" y="255.8" width="1" height="10.6" fill="#ff00ff"/>
<rect x="235" y="258.8" width="1" height="8.1" fill="#ff00ff"/>
<rect x="236" y="258.5" width="1" height="10.6" fill="#ff00ff"/>
<rect x="237" y="260.2" width="1" height="10.2" fill="#ff00ff"/>
<rect x="238" y="263.4" width="1" height="10.3" fill="#ff00ff"/>
<rect x="239" y="265.9" width="1" height="9.8" fill="#ff00ff"/>
<rect x="240" y="266.4" width="1" height="10.8" fill="#ff00ff"/>
<rect x="240" y="275.7" width="1" height="2.9" fill="#a000a0"/>
<rect x="241" y="270.6" width="1" height="7.9" fill="#ff00ff"/>
<rect x="242" y="272.1" width="1" height="10.0" fill="#ff00ff"/>
<rect x="242" y="280.0" width="1" height="1.6" fill="#a000a0"/>
<rect x="243" y="274.5" width="1" height="9.1" fill="#ff00ff"/>
<rect x="244" y="276.1" width="1" height="9.9" fill="#ff00ff"/>
<rect x="245" y="279.2" width="1" height="11.2" fill="#ff00ff"/>
<rect x="246" y="282.2" width="1" height="9.1" fill="#ff00ff"/>
<rect x="247" y="285.0" width="1" height="10.3" fill="#ff00ff"/>
<rect x="248" y="288.9" width="1" height="8.2" fill="#ff00ff"/>
<rect x="249" y="290.1" width="1" height="12.0" fill="#ff00ff"/>
<rect x="250" y="293.7" width="1" height="10.5" fill="#ff00ff"/>
<rect x="251" y="298.0" width="1" height="8.7" fill="#ff00ff"/>
<rect x="251" y="299.4" width="1" height="2.6" fill="#a000a0"/>
<rect x="252" y="300.5" width="1" height="9.9" fill="#ff00ff"/>
<rect x="252" y="305.8" width="1" height="1.1" fill="#a000a0"/>
<rect x="253" y="302.1" width="1" height="10.5" fill="#ff00ff"/>
<rect x="254" y="306.5" width="1" height="10.5" fill="#ff00ff"/>
<rect x="254" y="310.9" width="1" height="1.2" fill="#a000a0"/>
<rect x="255" y="308.7" width="1" height="9.6" fill="#ff00ff"/>
<rect x="256" y="312.0" width="1" height="10.4" fill="#ff00ff"/>
<rect x="257" y="298.6" width="1" height="4.8" fill="#ff00ff"/>
<rect x="257" y="303.4" width="1" height="6.5" fill="#ff00ff"/>
<rect x="257" y="309.9" width="1" height="3.5" fill="#ff00ff"/>
<rect x="257" y="313.4" width="1" height="3.3" fill="#ff00ff"/>
<rect x="257" y="316.7" width="1" height="4.1" fill="#ff00ff"/>
<rect x="257" y="320.9" width="1" height="3.6" fill="#ff00ff"/>
<rect x="258" y="289.8" width="1" height="6.2" fill="#ff00ff"/>
<rect x="258" y="296.0" width="1" height="4.6" fill="#ff00ff"/>
<rect x="258" y="300.6" width="1" height="4.0" fill="#ff00ff"/>
<rect x="258" y="304.6" width="1" height="2.5" fill="#ff00ff"/>
<rect x="258" y="307.1" width="1" height="3.6" fill="#ff00ff"/>
<rect x="258" y="310.7" width="1" height="3.2" fill="#ff00ff"/>
<rect x="258" y="313.8" width="1" height="3.0" fill="#ff00ff"/>
<rect x="259" y="285.5" width="1" height="2.0" fill="#ff00ff"/>
<rect x="259" y="287.5" width="1" height="6.8" fill="#ff00ff"/>
<rect x="259" y="294.3" width="1" height="5.0" fill="#ff00ff"/>
<rect x="259" y="299.3" width="1" height="3.5" fill="#ff00ff"/>
<rect x="259" y="302.8" width="1" height="4.9" fill="#ff00ff"/>
<rect x="259" y="307.8" width="1" height="4.5" fill="#ff00ff"/>
<rect x="259" y="312.3" width="1" height="5.8" fill="#ff00ff"/>
<rect x="259" y="318.0" width="1" height="1.0" fill="#ff00ff"/>
<rect x="260" y="281.9" width="1" height="4.1" fill="#d000d8"/>
<rect x="260" y="286.0" width="1" height="4.0" fill="#ff00ff"/>
<rect x="260" y="290.0" width="1" height="5.4" fill="#ff00ff"/>
<rect x="260" y="295.4" width="1" height="6.9" fill="#d000d8"/>
<rect x="260" y="302.3" width="1" height="3.6" fill="#ff00ff"/>
<rect x="260" y="306.0" width="1" height="6.1" fill="#ff00ff"/>
<rect x="260" y="312.1" width="1" height="3.3" fill="#ff00ff"/>
<rect x="261" y="281.3" width="1" height="5.1" fill="#ff00ff"/>
<rect x="261" y="286.4" width="1" height="6.6" fill="#ff00ff"/>
<rect x="261" y="295.2" width="1" height="5.8" fill="#ff00ff"/>
<rect x="261" y="300.9" width="1" height="2.0" fill="#ff00ff"/>
<rect x="261" y="303.0" width="1" height="4.1" fill="#ff00ff"/>
<rect x="261" y="307.1" width="1" height="2.2" fill="#d000d8"/>
<rect x="262" y="276.4" width="1" height="4.2" fill="#ff00ff"/>
<rect x="262" y="280.6" width="1" height="3.9" fill="#ff00ff"/>
<rect x="262" y="284.5" width="1" height="4.2" fill="#ff00ff"/>
<rect x="262" y="288.7" width="1" height="3.6" fill="#ff00ff"/>
<rect x="262" y="292.3" width="1" height="2.4" fill="#ff00ff"/>
<rect x="262" y="294.6" width="1" height="6.2" fill="#ff00ff"/>
<rect x="262" y="300.8" width="1" height="4.7" fill="#ff00ff"/>
<rect x="262" y="305.5" width="1" height="2.6" fill="#ff00ff"/>
<rect x="262" y="308.1" width="1" height="2.5" fill="#ff00ff"/>
<rect x="263" y="277.9" width="1" height="4.1" fill="#ff00ff"/>
<rect x="263" y="282.0" width="1" height="6.2" fill="#ff00ff"/>
<rect x="263" y="288.2" width="1" height="6.4" fill="#ff00ff"/>
<rect x="263" y="294.5" width="1" height="2.2" fill="#ff00ff"/>
<rect x="263" y="296.7" width="1" height="3.9" fill="#ff00ff"/>
<rect x="263" y="300.6" width="1" height="5.0" fill="#ff00ff"/>
<rect x="264" y="275.3" width="1" height="5.9" fill="#ff00ff"/>
<rect x="264" y="281.1" width="1" height="5.7" fill="#ff00ff"/>
<rect x="264" y="286.9" width="1" height="4.9" fill="#ff00ff"/>
<rect x="264" y="291.8" width="1" height="3.7" fill="#ff00ff"/>
<rect x="264" y="295.5" width="1" height="3.7" fill="#ff00ff"/>
<rect x="264" y="299.3" width="1" height="4.6" fill="#ff00ff"/>
<rect x="264" y="303.9" width="1" height="1.0" fill="#d000d8"/>
<rect x="265" y="276.8" width="1" height="3.6" fill="#ff00ff"/>
<rect x="265" y="280.4" width="1" height="3.2" fill="#ff00ff"/>
<rect x="265" y="283.6" width="1" height="5.7" fill="#ff00ff"/>
<rect x="265" y="289.2" width="1" height="3.3" fill="#ff00ff"/>
<rect x="265" y="292.5" width="1" height="6.1" fill="#ff00ff"/>
<rect x="265" y="298.7" width="1" height="4.6" fill="#ff00ff"/>
<rect x="266" y="272.0" width="1" height="6.9" fill="#d000d8"/>
<rect x="266" y="278.9" width="1" height="4.3" fill="#ff00ff"/>
<rect x="266" y="283.1" width="1" height="3.2" fill="#ff00ff"/>
<rect x="266" y="286.3" width="1" height="2.5" fill="#ff00ff"/>
<rect x="266" y="288.8" width="1" height="6.2" fill="#ff00ff"/>
<rect x="266" y="295.1" width="1" height="5.5" fill="#ff00ff"/>
<rect x="266" y="300.5" width="1" height="1.0" fill="#ff00ff"/>
<rect x="267" y="268.8" width="1" height="5.8" fill="#d000d8"/>
<rect x="267" y="274.6" width="1" height="2.5" fill="#ff00ff"/>
<rect x="267" y="277.1" width="1" height="3.1" fill="#ff00ff"/>
<rect x="267" y="280.2" width="1" height="4.7" fill="#ff00ff"/>
<rect x="267" y="284.9" width="1" height="2.6" fill="#ff00ff"/>
<rect x="267" y="287.5" width="1" height="4.9" fill="#d000d8"/>
<rect x="267" y="292.4" width="1" height="6.6" fill="#ff00ff"/>
<rect x="268" y="269.8" width="1" height="6.3" fill="#ff00ff"/>
<rect x="268" y="276.1" width="1" height="3.3" fill="#ff00ff"/>
<rect x="268" y="279.4" width="1" height="2.1" fill="#ff00ff"/>
<rect x="268" y="281.5" width="1" height="3.3" fill="#ff00ff"/>
<rect x="268" y="284.8" width="1" height="3.3" fill="#ff00ff"/>
<rect x="268" y="288.1" width="1" height="4.4" fill="#ff00ff"/>
<rect x="268" y="292.5" width="1" height="3.4" fill="#ff00ff"/>
<rect x="269" y="267.8" width="1" height="2.8" fill="#d000d8"/>
<rect x="269" y="270.6" width="1" height="6.3" fill="#ff00ff"/>
<rect x="269" y="276.9" width="1" height="4.7" fill="#ff00ff"/>
<rect x="269" y="281.6" width="1" height="4.7" fill="#ff00ff"/>
<rect x="269" y="286.3" width="1" height="6.6" fill="#ff00ff"/>
<rect x="269" y="292.9" width="1" height="3.3" fill="#ff00ff"/>
<rect x="269" y="296.2" width="1" height="1.0" fill="#ff00ff"/>
<rect x="270" y="267.8" width="1" height="4.3" fill="#ff00ff"/>
<rect x="270" y="277.7" width="1" height="4.5" fill="#ff00ff"/>
<rect x="270" y="282.3" width="1" height="3.7" fill="#ff00ff"/>
<rect x="270" y="286.0" width="1" height="5.8" fill="#ff00ff"/>
<rect x="271" y="267.4" width="1" height="2.4" fill="#d000d8"/>
<rect x="271" y="269.8" width="1" height="2.5" fill="#ff00ff"/>
<rect x="271" y="274.9" width="1" height="3.5" fill="#d000d8"/>
<rect x="271" y="278.4" width="1" height="2.3" fill="#ff00ff"/>
<rect x="271" y="280.7" width="1" height="2.3" fill="#ff00ff"/>
<rect x="271" y="287.9" width="1" height="4.2" fill="#d000d8"/>
<rect x="272" y="265.8" width="1" height="2.4" fill="#ff00ff"/>
<rect x="272" y="268.2" width="1" height="2.9" fill="#ff00ff"/>
<rect x="272" y="271.1" width="1" height="3.8" fill="#ff00ff"/>
<rect x="272" y="274.9" width="1" height="3.0" fill="#ff00ff"/>
<rect x="272" y="277.8" width="1" height="4.1" fill="#ff00ff"/>
<rect x="272" y="281.9" width="1" height="2.4" fill="#ff00ff"/>
<rect x="272" y="289.1" width="1" height="1.0" fill="#ff00ff"/>
<rect x="273" y="275.3" width="1" height="6.6" fill="#d000d8"/>
<rect x="273" y="281.9" width="1" height="4.9" fill="#ff00ff"/>
<rect x="274" y="262.7" width="1" height="5.4" fill="#ff00ff"/>
<rect x="274" y="273.2" width="1" height="2.4" fill="#ff00ff"/>
<rect x="274" y="275.7" width="1" height="6.8" fill="#ff00ff"/>
<rect x="274" y="282.5" width="1" height="2.6" fill="#d000d8"/>
<rect x="274" y="285.0" width="1" height="1.3" fill="#ff00ff"/>
<rect x="275" y="260.0" width="1" height="5.4" fill="#ff00ff"/>
<rect x="275" y="265.5" width="1" height="4.9" fill="#ff00ff"/>
<rect x="275" y="270.4" width="1" height="6.0" fill="#ff00ff"/>
<rect x="275" y="276.4" width="1" height="2.3" fill="#ff00ff"/>
<rect x="275" y="278.7" width="1" height="6.9" fill="#d000d8"/>
<rect x="275" y="285.6" width="1" height="1.0" fill="#ff00ff"/>
<rect x="276" y="260.4" width="1" height="5.9" fill="#ff00ff"/>
<rect x="276" y="266.3" width="1" height="4.9" fill="#ff00ff"/>
<rect x="276" y="271.2" width="1" height="3.7" fill="#ff00ff"/>
<rect x="276" y="274.9" width="1" height="4.3" fill="#ff00ff"/>
<rect x="276" y="279.2" width="1" height="1.0" fill="#ff00ff"/>
<rect x="277" y="258.8" width="1" height="4.4" fill="#ff00ff"/>
<rect x="277" y="263.2" width="1" height="3.7" fill="#ff00ff"/>
<rect x="277" y="266.9" width="1" height="5.3" fill="#ff00ff"/>
<rect x="277" y="272.2" width="1" height="4.6" fill="#ff00ff"/>
<rect x="277" y="276.8" width="1" height="2.7" fill="#ff00ff"/>
<rect x="278" y="258.4" width="1" height="3.6" fill="#ff00ff"/>
<rect x="278" y="262.0" width="1" height="5.4" fill="#ff00ff"/>
<rect x="278" y="267.4" width="1" height="4.7" fill="#ff00ff"/>
<rect x="278" y="272.1" width="1" height="5.8" fill="#ff00ff"/>
<rect x="278" y="277.9" width="1" height="1.0" fill="#ff00ff"/>
<rect x="279" y="260.6" width="1" height="3.8" fill="#d000d8"/>
<rect x="279" y="264.4" width="1" height="7.0" fill="#ff00ff"/>
<rect x="279" y="271.4" width="1" height="2.7" fill="#ff00ff"/>
<rect x="279" y="274.1" width="1" height="2.6" fill="#ff00ff"/>
<rect x="280" y="259.1" width="1" height="3.4" fill="#ff00ff"/>
<rect x="280" y="262.5" width="1" height="5.7" fill="#ff00ff"/>
<rect x="280" y="268.2" width="1" height="6.1" fill="#ff00ff"/>
<rect x="280" y="274.3" width="1" height="1.0" fill="#ff00ff"/>
<rect x="281" y="255.5" width="1" height="2.7" fill="#ff00ff"/>
<rect x="281" y="264.6" width="1" height="6.7" fill="#ff00ff"/>
<rect x="281" y="271.3" width="1" height="4.8" fill="#ff00ff"/>
<rect x="282" y="257.4" width="1" height="3.0" fill="#ff00ff"/>
<rect x="282" y="260.3" width="1" height="5.4" fill="#d000d8"/>
<rect x="282" y="271.4" width="1" height="3.2" fill="#ff00ff"/>
<rect x="283" y="254.3" width="1" height="6.7" fill="#ff00ff"/>
<rect x="283" y="261.0" width="1" height="2.9" fill="#ff00ff"/>
<rect x="283" y="263.9" width="1" height="2.2" fill="#ff00ff"/>
<rect x="283" y="266.2" width="1" height="2.9" fill="#ff00ff"/>
<rect x="283" y="269.1" width="1" height="1.0" fill="#ff00ff"/>
<rect x="284" y="260.1" width="1" height="2.4" fill="#ff00ff"/>
<rect x="284" y="262.5" width="1" height="2.4" fill="#ff00ff"/>
<rect x="285" y="254.6" width="1" height="3.7" fill="#ff00ff"/>
<rect x="285" y="258.2" width="1" height="3.5" fill="#ff00ff"/>
<rect x="285" y="261.7" width="1" height="4.1" fill="#ff00ff"/>
<rect x="286" y="254.3" width="1" height="4.3" fill="#ff00ff"/>
<rect x="286" y="265.4" width="1" height="2.1" fill="#ff00ff"/>
<rect x="286" y="267.5" width="1" height="1.0" fill="#ff00ff"/>
<rect x="287" y="252.0" width="1" height="5.7" fill="#ff00ff"/>
<rect x="287" y="257.6" width="1" height="2.1" fill="#ff00ff"/>
<rect x="287" y="259.7" width="1" height="2.9" fill="#ff00ff"/>
<rect x="288" y="253.4" width="1" height="9.5" fill="#ff00ff"/>
<rect x="288" y="253.5" width="1" height="1.6" fill="#a000a0"/>
<rect x="289" y="252.1" width="1" height="10.5" fill="#ff00ff"/>
<rect x="290" y="253.1" width="1" height="10.2" fill="#ff00ff"/>
<rect x="291" y="253.4" width="1" height="10.1" fill="#ff00ff"/>
<rect x="292" y="254.6" width="1" height="9.6" fill="#ff00ff"/>
<rect x="293" y="255.0" width="1" height="9.7" fill="#ff00ff"/>
<rect x="294" y="255.2" width="1" height="11.7" fill="#ff00ff"/>
<rect x="295" y="257.7" width="1" height="8.3" fill="#ff00ff"/>
<rect x="296" y="259.1" width="1" height="8.3" fill="#ff00ff"/>
<rect x="296" y="265.1" width="1" height="1.5" fill="#a000a0"/>
<rect x="297" y="259.3" width="1" height="9.0" fill="#ff00ff"/>
<rect x="298" y="259.9" width="1" height="9.6" fill="#ff00ff"/>
<rect x="299" y="261.5" width="1" height="10.5" fill="#ff00ff"/>
<rect x="300" y="264.4" width="1" height="9.0" fill="#ff00ff"/>
<rect x="301" y="263.9" width="1" height="11.2" fill="#ff00ff"/>
<rect x="302" y="267.0" width="1" height="10.1" fill="#ff00ff"/>
<rect x="303" y="267.7" width="1" height="11.0" fill="#ff00ff"/>
<rect x="304" y="271.0" width="1" height="10.8" fill="#ff00ff"/>
<rect x="305" y="272.6" width="1" height="9.1" fill="#ff00ff"/>
<rect x="306" y="274.3" width="1" height="11.4" fill="#ff00ff"/>
<rect x="307" y="276.5" width="1" height="11.6" fill="#ff00ff"/>
<rect x="308" y="279.2" width="1" height="10.3" fill="#ff00ff"/>
<rect x="309" y="281.8" width="1" height="10.0" fill="#ff00ff"/>
<rect x="310" y="285.0" width="1" height="9.2" fill="#ff00ff"/>
<rect x="311" y="286.0" width="1" height="10.0" fill="#ff00ff"/>
<rect x="312" y="290.0" width="1" height="10.4" fill="#ff00ff"/>
<rect x="313" y="292.3" width="1" height="10.3" fill="#ff00ff"/>
<rect x="314" y="295.2" width="1" height="10.0" fill="#ff00ff"/>
<rect x="314" y="303.3" width="1" height="1.6" fill="#a000a0"/>
<rect x="315" y="296.5" width="1" height="11.6" fill="#ff00ff"/>
<rect x="315" y="302.5" width="1" height="1.7" fill="#a000a0"/>
<rect x="316" y="300.5" width="1" height="9.6" fill="#ff00ff"/>
<rect x="317" y="303.5" width="1" height="9.3" fill="#ff00ff"/>
<rect x="317" y="309.7" width="1" height="1.2" fill="#a000a0"/>
<rect x="318" y="306.3" width="1" height="9.7" fill="#ff00ff"/>
<rect x="319" y="289.5" width="1" height="5.1" fill="#ff00ff"/>
<rect x="319" y="294.6" width="1" height="5.6" fill="#ff00ff"/>
<rect x="319" y="300.3" width="1" height="6.3" fill="#ff00ff"/>
<rect x="319" y="306.6" width="1" height="5.9" fill="#d000d8"/>
<rect x="320" y="278.8" width="1" height="3.9" fill="#ff00ff"/>
<rect x="320" y="282.8" width="1" height="2.1" fill="#ff00ff"/>
<rect x="320" y="284.9" width="1" height="6.0" fill="#ff00ff"/>
<rect x="320" y="290.9" width="1" height="5.3" fill="#ff00ff"/>
<rect x="320" y="296.1" width="1" height="5.5" fill="#ff00ff"/>
<rect x="320" y="301.6" width="1" height="3.6" fill="#ff00ff"/>
<rect x="320" y="305.2" width="1" height="2.9" fill="#ff00ff"/>
<rect x="321" y="273.3" width="1" height="6.6" fill="#ff00ff"/>
<rect x="321" y="279.9" width="1" height="6.8" fill="#ff00ff"/>
<rect x="321" y="286.7" width="1" height="6.8" fill="#ff00ff"/>
<rect x="321" y="293.5" width="1" height="3.7" fill="#ff00ff"/>
<rect x="321" y="297.1" width="1" height="4.6" fill="#ff00ff"/>
<rect x="321" y="301.7" width="1" height="2.2" fill="#d000d8"/>
<rect x="321" y="303.9" width="1" height="4.0" fill="#ff00ff"/>
<rect x="322" y="271.7" width="1" height="3.0" fill="#ff00ff"/>
<rect x="322" y="274.7" width="1" height="3.2" fill="#ff00ff"/>
<rect x="322" y="277.9" width="1" height="2.3" fill="#ff00ff"/>
<rect x="322" y="280.3" width="1" height="3.8" fill="#ff00ff"/>
<rect x="322" y="284.1" width="1" height="6.7" fill="#ff00ff"/>
<rect x="322" y="290.8" width="1" height="4.1" fill="#ff00ff"/>
<rect x="322" y="294.9" width="1" height="3.2" fill="#ff00ff"/>
<rect x="322" y="298.0" width="1" height="3.4" fill="#ff00ff"/>
<rect x="323" y="267.8" width="1" height="5.8" fill="#ff00ff"/>
<rect x="323" y="278.8" width="1" height="6.5" fill="#ff00ff"/>
<rect x="323" y="290.0" width="1" height="4.6" fill="#ff00ff"/>
<rect x="323" y="294.7" width="1" height="5.8" fill="#ff00ff"/>
<rect x="323" y="300.5" width="1" height="1.0" fill="#ff00ff"/>
<rect x="324" y="264.8" width="1" height="5.6" fill="#ff00ff"/>
<rect x="324" y="270.5" width="1" height="5.8" fill="#ff00ff"/>
<rect x="324" y="276.3" width="1" height="5.5" fill="#ff00ff"/>
<rect x="324" y="281.8" width="1" height="4.2" fill="#ff00ff"/>
<rect x="324" y="290.4" width="1" height="6.4" fill="#ff00ff"/>
<rect x="324" y="296.8" width="1" height="1.2" fill="#ff00ff"/>
<rect x="325" y="264.5" width="1" height="2.6" fill="#ff00ff"/>
<rect x="325" y="267.1" width="1" height="4.9" fill="#ff00ff"/>
<rect x="325" y="272.0" width="1" height="4.0" fill="#ff00ff"/>
<rect x="325" y="276.0" width="1" height="5.4" fill="#ff00ff"/>
<rect x="325" y="281.4" width="1" height="2.2" fill="#ff00ff"/>
<rect x="325" y="283.6" width="1" height="2.6" fill="#ff00ff"/>
<rect x="325" y="286.3" width="1" height="4.4" fill="#ff00ff"/>
<rect x="325" y="290.6" width="1" height="2.4" fill="#ff00ff"/>
<rect x="325" y="293.0" width="1" height="1.0" fill="#ff00ff"/>
<rect x="326" y="263.6" width="1" height="4.4" fill="#ff00ff"/>
<rect x="326" y="271.7" width="1" height="2.6" fill="#ff00ff"/>
<rect x="326" y="274.3" width="1" height="3.1" fill="#d000d8"/>
<rect x="326" y="277.4" width="1" height="4.5" fill="#ff00ff"/>
<rect x="326" y="281.9" width="1" height="4.0" fill="#d000d8"/>
<rect x="326" y="285.9" width="1" height="3.3" fill="#ff00ff"/>
<rect x="326" y="289.2" width="1" height="4.2" fill="#ff00ff"/>
<rect x="327" y="259.6" width="1" height="4.3" fill="#ff00ff"/>
<rect x="327" y="263.9" width="1" height="5.1" fill="#ff00ff"/>
<rect x="327" y="269.0" width="1" height="3.5" fill="#ff00ff"/>
<rect x="327" y="272.5" width="1" height="4.3" fill="#ff00ff"/>
<rect x="327" y="276.8" width="1" height="6.4" fill="#ff00ff"/>
<rect x="327" y="283.2" width="1" height="3.9" fill="#d000d8"/>
<rect x="327" y="287.1" width="1" height="1.7" fill="#ff00ff"/>
<rect x="328" y="258.2" width="1" height="5.7" fill="#ff00ff"/>
<rect x="328" y="269.5" width="1" height="5.3" fill="#ff00ff"/>
<rect x="328" y="274.8" width="1" height="4.2" fill="#ff00ff"/>
<rect x="328" y="279.0" width="1" height="3.1" fill="#ff00ff"/>
<rect x="328" y="286.8" width="1" height="1.0" fill="#ff00ff"/>
<rect x="329" y="255.2" width="1" height="5.8" fill="#ff00ff"/>
<rect x="329" y="261.0" width="1" height="5.1" fill="#ff00ff"/>
<rect x="329" y="270.1" width="1" height="3.0" fill="#d000d8"/>
<rect x="329" y="273.1" width="1" height="2.3" fill="#ff00ff"/>
<rect x="329" y="275.4" width="1" height="6.1" fill="#d000d8"/>
<rect x="329" y="281.5" width="1" height="2.2" fill="#ff00ff"/>
<rect x="330" y="256.6" width="1" height="5.7" fill="#ff00ff"/>
<rect x="330" y="262.4" width="1" height="3.3" fill="#ff00ff"/>
<rect x="330" y="265.6" width="1" height="4.8" fill="#ff00ff"/>
<rect x="330" y="270.4" width="1" height="6.9" fill="#ff00ff"/>
<rect x="330" y="277.4" width="1" height="5.7" fill="#ff00ff"/>
<rect x="331" y="255.4" width="1" height="3.4" fill="#ff00ff"/>
<rect x="331" y="258.8" width="1" height="4.6" fill="#ff00ff"/>
<rect x="331" y="263.4" width="1" height="2.8" fill="#ff00ff"/>
<rect x="331" y="266.3" width="1" height="6.5" fill="#ff00ff"/>
<rect x="331" y="272.7" width="1" height="3.4" fill="#d000d8"/>
<rect x="331" y="276.2" width="1" height="4.1" fill="#ff00ff"/>
<rect x="331" y="280.3" width="1" height="1.3" fill="#ff00ff"/>
<rect x="332" y="258.3" width="1" height="3.8" fill="#ff00ff"/>
<rect x="332" y="262.0" width="1" height="2.4" fill="#ff00ff"/>
<rect x="332" y="264.4" width="1" height="5.5" fill="#ff00ff"/>
<rect x="332" y="269.9" width="1" height="6.1" fill="#ff00ff"/>
<rect x="332" y="276.0" width="1" height="3.4" fill="#ff00ff"/>
<rect x="332" y="279.4" width="1" height="1.0" fill="#ff00ff"/>
<rect x="333" y="251.7" width="1" height="2.7" fill="#ff00ff"/>
<rect x="333" y="260.8" width="1" height="3.2" fill="#ff00ff"/>
<rect x="333" y="264.0" width="1" height="2.6" fill="#ff00ff"/>
<rect x="333" y="266.6" width="1" height="6.0" fill="#ff00ff"/>
<rect x="333" y="272.6" width="1" height="3.0" fill="#ff00ff"/>
<rect x="334" y="251.8" width="1" height="6.1" fill="#d000d8"/>
<rect x="334" y="257.9" width="1" height="3.1" fill="#ff00ff"/>
<rect x="334" y="261.0" width="1" height="5.5" fill="#ff00ff"/>
<rect x="334" y="266.5" width="1" height="3.7" fill="#ff00ff"/>
<rect x="335" y="249.9" width="1" height="4.2" fill="#d000d8"/>
<rect x="335" y="254.1" width="1" height="4.8" fill="#ff00ff"/>
<rect x="335" y="259.0" width="1" height="6.9" fill="#ff00ff"/>
<rect x="335" y="265.9" width="1" height="3.1" fill="#ff00ff"/>
<rect x="336" y="248.4" width="1" height="4.2" fill="#d000d8"/>
<rect x="336" y="252.5" width="1" height="6.6" fill="#ff00ff"/>
<rect x="336" y="259.1" width="1" height="2.9" fill="#ff00ff"/>
<rect x="336" y="262.0" width="1" height="5.5" fill="#ff00ff"/>
<rect x="336" y="267.5" width="1" height="1.0" fill="#d000d8"/>
<rect x="337" y="247.0" width="1" height="3.1" fill="#ff00ff"/>
<rect x="337" y="250.1" width="1" height="2.2" fill="#ff00ff"/>
<rect x="337" y="252.3" width="1" height="2.3" fill="#d000d8"/>
<rect x="337" y="254.7" width="1" height="4.7" fill="#ff00ff"/>
<rect x="337" y="259.4" width="1" height="2.5" fill="#ff00ff"/>
<rect x="338" y="247.5" width="1" height="2.3" fill="#ff00ff"/>
<rect x="338" y="249.8" width="1" height="2.1" fill="#ff00ff"/>
<rect x="338" y="251.9" width="1" height="2.9" fill="#ff00ff"/>
<rect x="338" y="254.8" width="1" height="5.3" fill="#ff00ff"/>
<rect x="338" y="260.2" width="1" height="3.6" fill="#ff00ff"/>
<rect x="338" y="263.8" width="1" height="1.8" fill="#ff00ff"/>
<rect x="339" y="245.7" width="1" height="3.2" fill="#ff00ff"/>
<rect x="339" y="248.9" width="1" height="3.3" fill="#ff00ff"/>
<rect x="339" y="252.2" width="1" height="3.6" fill="#ff00ff"/>
<rect x="339" y="255.8" width="1" height="3.3" fill="#ff00ff"/>
<rect x="339" y="259.1" width="1" height="1.8" fill="#ff00ff"/>
<rect x="340" y="245.4" width="1" height="6.4" fill="#ff00ff"/>
<rect x="340" y="251.8" width="1" height="5.1" fill="#ff00ff"/>
<rect x="340" y="257.0" width="1" height="1.6" fill="#ff00ff"/>
<rect x="341" y="244.2" width="1" height="4.5" fill="#ff00ff"/>
<rect x="341" y="248.7" width="1" height="4.6" fill="#ff00ff"/>
<rect x="341" y="253.3" width="1" height="3.5" fill="#d000d8"/>
<rect x="342" y="242.6" width="1" height="3.5" fill="#ff00ff"/>
<rect x="342" y="246.1" width="1" height="6.0" fill="#ff00ff"/>
<rect x="342" y="252.1" width="1" height="1.0" fill="#ff00ff"/>
<rect x="343" y="243.9" width="1" height="9.9" fill="#ff00ff"/>
<rect x="344" y="243.5" width="1" height="10.1" fill="#ff00ff"/>
<rect x="345" y="243.1" width="1" height="10.4" fill="#ff00ff"/>
<rect x="346" y="244.9" width="1" height="9.8" fill="#ff00ff"/>
<rect x="347" y="243.2" width="1" height="10.4" fill="#ff00ff"/>
<rect x="348" y="245.0" width="1" height="9.9" fill="#ff00ff"/>
<rect x="349" y="246.6" width="1" height="9.2" fill="#ff00ff"/>
<rect x="350" y="245.6" width="1" height="12.2" fill="#ff00ff"/>
<rect x="350" y="247.4" width="1" height="1.8" fill="#a000a0"/>
<rect x="351" y="248.1" width="1" height="8.7" fill="#ff00ff"/>
<rect x="352" y="250.0" width="1" height="8.8" fill="#ff00ff"/>
<rect x="353" y="250.5" width="1" height="10.0" fill="#ff00ff"/>
<rect x="353" y="255.2" width="1" height="2.8" fill="#a000a0"/>
<rect x="354" y="252.2" width="1" height="8.9" fill="#ff00ff"/>
<rect x="355" y="253.5" width="1" height="9.5" fill="#ff00ff"/>
<rect x="356" y="255.5" width="1" height="8.5" fill="#ff00ff"/>
<rect x="357" y="257.4" width="1" height="8.9" fill="#ff00ff"/>
<rect x="357" y="264.2" width="1" height="1.7" fill="#a000a0"/>
<rect x="358" y="260.1" width="1" height="9.0" fill="#ff00ff"/>
<rect x="358" y="265.9" width="1" height="1.5" fill="#a000a0"/>
<rect x="359" y="261.9" width="1" height="9.8" fill="#ff00ff"/>
<rect x="360" y="262.3" width="1" height="9.9" fill="#ff00ff"/>
<rect x="361" y="264.8" width="1" height="10.1" fill="#ff00ff"/>
<rect x="361" y="266.5" width="1" height="1.9" fill="#a000a0"/>
<rect x="362" y="269.2" width="1" height="8.5" fill="#ff00ff"/>
<rect x="363" y="271.4" width="1" height="8.5" fill="#ff00ff"/>
<rect x="364" y="273.5" width="1" height="10.8" fill="#ff00ff"/>
<rect x="364" y="279.6" width="1" height="1.8" fill="#a000a0"/>
<rect x="365" y="276.7" width="1" height="8.6" fill="#ff00ff"/>
<rect x="366" y="277.9" width="1" height="10.7" fill="#ff00ff"/>
<rect x="367" y="280.9" width="1" height="10.1" fill="#ff00ff"/>
<rect x="368" y="284.9" width="1" height="8.5" fill="#ff00ff"/>
<rect x="368" y="286.9" width="1" height="1.6" fill="#a000a0"/>
<rect x="369" y="288.3" width="1" height="9.7" fill="#ff00ff"/>
<rect x="370" y="290.9" width="1" height="9.9" fill="#ff00ff"/>
<rect x="371" y="294.2" width="1" height="9.5" fill="#ff00ff"/>
<rect x="371" y="298.8" width="1" height="1.8" fill="#a000a0"/>
<rect x="372" y="296.9" width="1" height="8.8" fill="#ff00ff"/>
<rect x="372" y="305.5" width="1" height="1.7" fill="#a000a0"/>
<rect x="373" y="299.6" width="1" height="9.6" fill="#ff00ff"/>
<rect x="374" y="304.2" width="1" height="8.2" fill="#ff00ff"/>
<rect x="375" y="306.5" width="1" height="10.6" fill="#ff00ff"/>
<rect x="376" y="309.1" width="1" height="9.9" fill="#ff00ff"/>
<rect x="377" y="312.0" width="1" height="11.9" fill="#ff00ff"/>
<rect x="377" y="314.3" width="1" height="1.9" fill="#a000a0"/>
<rect x="378" y="317.2" width="1" height="9.5" fill="#ff00ff"/>
<rect x="379" y="300.0" width="1" height="2.3" fill="#d000d8"/>
<rect x="379" y="302.3" width="1" height="2.7" fill="#ff00ff"/>
<rect x="379" y="305.0" width="1" height="2.2" fill="#ff00ff"/>
<rect x="379" y="307.2" width="1" height="6.4" fill="#ff00ff"/>
<rect x="379" y="313.6" width="1" height="2.4" fill="#ff00ff"/>
<rect x="379" y="316.0" width="1" height="6.2" fill="#ff00ff"/>
<rect x="379" y="322.3" width="1" height="4.7" fill="#ff00ff"/>
<rect x="380" y="289.6" width="1" height="3.0" fill="#ff00ff"/>
<rect x="380" y="292.6" width="1" height="3.0" fill="#ff00ff"/>
<rect x="380" y="295.6" width="1" height="2.8" fill="#ff00ff"/>
<rect x="380" y="298.4" width="1" height="4.7" fill="#ff00ff"/>
<rect x="380" y="303.1" width="1" height="2.7" fill="#ff00ff"/>
<rect x="380" y="305.8" width="1" height="4.5" fill="#ff00ff"/>
<rect x="380" y="310.4" width="1" height="4.4" fill="#ff00ff"/>
<rect x="380" y="314.7" width="1" height="5.1" fill="#ff00ff"/>
<rect x="380" y="319.8" width="1" height="1.3" fill="#ff00ff"/>
<rect x="381" y="288.1" width="1" height="4.0" fill="#ff00ff"/>
<rect x="381" y="292.1" width="1" height="6.7" fill="#ff00ff"/>
<rect x="381" y="298.8" width="1" height="3.9" fill="#ff00ff"/>
<rect x="381" y="302.7" width="1" height="3.9" fill="#ff00ff"/>
<rect x="381" y="306.5" width="1" height="6.5" fill="#ff00ff"/>
<rect x="381" y="313.1" width="1" height="3.4" fill="#ff00ff"/>
<rect x="381" y="316.5" width="1" height="2.9" fill="#ff00ff"/>
<rect x="382" y="283.9" width="1" height="2.9" fill="#ff00ff"/>
<rect x="382" y="286.8" width="1" height="6.3" fill="#ff00ff"/>
<rect x="382" y="295.6" width="1" height="5.7" fill="#d000d8"/>
<rect x="382" y="301.4" width="1" height="3.8" fill="#ff00ff"/>
<rect x="382" y="305.2" width="1" height="6.8" fill="#d000d8"/>
<rect x="382" y="312.0" width="1" height="4.9" fill="#d000d8"/>
<rect x="382" y="316.8" width="1" height="1.3" fill="#d000d8"/>
<rect x="383" y="280.9" width="1" height="2.7" fill="#ff00ff"/>
<rect x="383" y="283.6" width="1" height="4.8" fill="#ff00ff"/>
<rect x="383" y="288.4" width="1" height="5.9" fill="#ff00ff"/>
<rect x="383" y="294.4" width="1" height="5.1" fill="#ff00ff"/>
<rect x="383" y="299.5" width="1" height="3.6" fill="#ff00ff"/>
<rect x="383" y="303.1" width="1" height="3.0" fill="#ff00ff"/>
<rect x="383" y="312.4" width="1" height="3.2" fill="#ff00ff"/>
<rect x="384" y="278.7" width="1" height="6.2" fill="#ff00ff"/>
<rect x="384" y="284.9" width="1" height="4.8" fill="#ff00ff"/>
<rect x="384" y="289.7" width="1" height="2.0" fill="#ff00ff"/>
<rect x="384" y="291.7" width="1" height="2.0" fill="#ff00ff"/>
<rect x="384" y="297.1" width="1" height="5.2" fill="#ff00ff"/>
<rect x="384" y="302.3" width="1" height="5.6" fill="#ff00ff"/>
<rect x="384" y="307.8" width="1" height="1.2" fill="#ff00ff"/>
<rect x="385" y="277.2" width="1" height="4.1" fill="#ff00ff"/>
<rect x="385" y="281.3" width="1" height="4.0" fill="#ff00ff"/>
<rect x="385" y="285.3" width="1" height="5.7" fill="#ff00ff"/>
<rect x="385" y="291.0" width="1" height="5.4" fill="#ff00ff"/>
<rect x="385" y="302.3" width="1" height="3.0" fill="#ff00ff"/>
<rect x="385" y="305.4" width="1" height="2.8" fill="#ff00ff"/>
<rect x="385" y="308.2" width="1" height="2.0" fill="#ff00ff"/>
<rect x="386" y="280.2" width="1" height="2.3" fill="#ff00ff"/>
<rect x="386" y="282.5" width="1" height="2.2" fill="#ff00ff"/>
<rect x="386" y="284.6" width="1" height="6.1" fill="#ff00ff"/>
<rect x="386" y="290.8" width="1" height="4.7" fill="#d000d8"/>
<rect x="386" y="295.5" width="1" height="3.9" fill="#ff00ff"/>
<rect x="386" y="299.4" width="1" height="5.2" fill="#ff00ff"/>
<rect x="386" y="304.6" width="1" height="1.3" fill="#ff00ff"/>
<rect x="387" y="270.8" width="1" height="4.7" fill="#ff00ff"/>
<rect x="387" y="275.4" width="1" height="5.0" fill="#d000d8"/>
<rect x="387" y="280.5" width="1" height="3.7" fill="#ff00ff"/>
<rect x="387" y="284.2" width="1" height="5.4" fill="#ff00ff"/>
<rect x="387" y="289.5" width="1" height="6.4" fill="#ff00ff"/>
<rect x="387" y="296.0" width="1" height="4.9" fill="#d000d8"/>
<rect x="388" y="269.7" width="1" height="5.2" fill="#ff00ff"/>
<rect x="388" y="274.9" width="1" height="2.1" fill="#ff00ff"/>
<rect x="388" y="276.9" width="1" height="3.3" fill="#ff00ff"/>
<rect x="388" y="280.2" width="1" height="4.5" fill="#ff00ff"/>
<rect x="388" y="284.8" width="1" height="2.3" fill="#ff00ff"/>
<rect x="388" y="287.1" width="1" height="5.0" fill="#ff00ff"/>
<rect x="388" y="292.1" width="1" height="7.0" fill="#ff00ff"/>
<rect x="388" y="299.1" width="1" height="3.0" fill="#ff00ff"/>
<rect x="389" y="273.1" width="1" height="4.4" fill="#ff00ff"/>
<rect x="389" y="277.5" width="1" height="4.4" fill="#ff00ff"/>
<rect x="389" y="281.9" width="1" height="7.0" fill="#ff00ff"/>
<rect x="389" y="288.9" width="1" height="4.0" fill="#ff00ff"/>
<rect x="389" y="292.9" width="1" height="5.4" fill="#ff00ff"/>
<rect x="389" y="298.3" width="1" height="1.6" fill="#ff00ff"/>
<rect x="390" y="268.1" width="1" height="4.2" fill="#ff00ff"/>
<rect x="390" y="272.3" width="1" height="3.8" fill="#d000d8"/>
<rect x="390" y="276.2" width="1" height="3.1" fill="#ff00ff"/>
<rect x="390" y="279.2" width="1" height="6.4" fill="#ff00ff"/>
<rect x="390" y="285.7" width="1" height="2.7" fill="#ff00ff"/>
<rect x="390" y="288.3" width="1" height="6.5" fill="#ff00ff"/>
<rect x="390" y="294.8" width="1" height="2.3" fill="#ff00ff"/>
<rect x="390" y="297.1" width="1" height="1.0" fill="#ff00ff"/>
<rect x="391" y="266.8" width="1" height="6.7" fill="#ff00ff"/>
<rect x="391" y="273.5" width="1" height="2.7" fill="#ff00ff"/>
<rect x="391" y="276.2" width="1" height="2.5" fill="#ff00ff"/>
<rect x="391" y="278.8" width="1" height="5.3" fill="#ff00ff"/>
<rect x="391" y="284.0" width="1" height="6.5" fill="#ff00ff"/>
<rect x="391" y="290.5" width="1" height="1.1" fill="#ff00ff"/>
<rect x="392" y="265.6" width="1" height="3.5" fill="#d000d8"/>
<rect x="392" y="269.1" width="1" height="3.0" fill="#ff00ff"/>
<rect x="392" y="274.5" width="1" height="6.7" fill="#ff00ff"/>
<rect x="392" y="281.2" width="1" height="3.6" fill="#ff00ff"/>
<rect x="392" y="284.8" width="1" height="6.5" fill="#ff00ff"/>
<rect x="392" y="291.4" width="1" height="1.0" fill="#ff00ff"/>
<rect x="393" y="262.6" width="1" height="6.8" fill="#d000d8"/>
<rect x="393" y="269.3" width="1" height="3.2" fill="#ff00ff"/>
<rect x="393" y="272.6" width="1" height="3.6" fill="#ff00ff"/>
<rect x="393" y="276.1" width="1" height="5.7" fill="#ff00ff"/>
<rect x="393" y="281.9" width="1" height="3.7" fill="#ff00ff"/>
<rect x="393" y="285.5" width="1" height="4.2" fill="#ff00ff"/>
<rect x="394" y="262.7" width="1" height="2.5" fill="#ff00ff"/>
<rect x="394" y="265.2" width="1" height="6.1" fill="#ff00ff"/>
<rect x="394" y="271.4" width="1" height="5.2" fill="#ff00ff"/>
<rect x="394" y="276.6" width="1" height="3.8" fill="#ff00ff"/>
<rect x="394" y="280.4" width="1" height="5.0" fill="#ff00ff"/>
<rect x="395" y="260.3" width="1" height="5.0" fill="#ff00ff"/>
<rect x="395" y="265.3" width="1" height="5.8" fill="#ff00ff"/>
<rect x="395" y="277.6" width="1" height="4.0" fill="#ff00ff"/>
<rect x="395" y="281.6" width="1" height="3.9" fill="#ff00ff"/>
<rect x="395" y="285.5" width="1" height="1.0" fill="#ff00ff"/>
<rect x="396" y="260.2" width="1" height="6.2" fill="#ff00ff"/>
<rect x="396" y="266.5" width="1" height="5.4" fill="#d000d8"/>
<rect x="396" y="271.8" width="1" height="3.9" fill="#ff00ff"/>
<rect x="396" y="275.8" width="1" height="3.3" fill="#ff00ff"/>
<rect x="396" y="279.0" width="1" height="2.5" fill="#ff00ff"/>
<rect x="396" y="281.5" width="1" height="1.0" fill="#ff00ff"/>
<rect x="397" y="259.3" width="1" height="2.7" fill="#ff00ff"/>
<rect x="397" y="262.1" width="1" height="6.5" fill="#ff00ff"/>
<rect x="397" y="268.5" width="1" height="3.3" fill="#ff00ff"/>
<rect x="397" y="271.8" width="1" height="3.1" fill="#d000d8"/>
<rect x="397" y="274.9" width="1" height="3.8" fill="#ff00ff"/>
<rect x="397" y="278.7" width="1" height="1.0" fill="#ff00ff"/>
<rect x="398" y="258.6" width="1" height="5.6" fill="#ff00ff"/>
<rect x="398" y="264.2" width="1" height="5.2" fill="#d000d8"/>
<rect x="398" y="269.4" width="1" height="3.6" fill="#ff00ff"/>
<rect x="398" y="273.1" width="1" height="2.6" fill="#ff00ff"/>
<rect x="398" y="275.7" width="1" height="2.3" fill="#ff00ff"/>
<rect x="399" y="256.0" width="1" height="5.0" fill="#ff00ff"/>
<rect x="399" y="261.0" width="1" height="2.2" fill="#ff00ff"/>
<rect x="399" y="270.8" width="1" height="6.1" fill="#ff00ff"/>
<rect x="400" y="255.6" width="1" height="2.5" fill="#ff00ff"/>
<rect x="400" y="258.1" width="1" height="2.5" fill="#ff00ff"/>
<rect x="400" y="260.5" width="1" height="4.1" fill="#ff00ff"/>
<rect x="400" y="264.6" width="1" height="7.0" fill="#ff00ff"/>
<rect x="401" y="257.3" width="1" height="4.4" fill="#ff00ff"/>
<rect x="401" y="261.7" width="1" height="5.3" fill="#ff00ff"/>
<rect x="401" y="267.0" width="1" height="4.7" fill="#ff00ff"/>
<rect x="401" y="271.6" width="1" height="2.2" fill="#ff00ff"/>
<rect x="402" y="256.2" width="1" height="5.9" fill="#d000d8"/>
<rect x="402" y="262.1" width="1" height="2.5" fill="#ff00ff"/>
<rect x="402" y="264.6" width="1" height="2.2" fill="#ff00ff"/>
<rect x="402" y="266.8" width="1" height="4.7" fill="#ff00ff"/>
<rect x="403" y="254.4" width="1" height="4.8" fill="#ff00ff"/>
<rect x="403" y="259.2" width="1" height="5.9" fill="#ff00ff"/>
<rect x="403" y="265.1" width="1" height="3.9" fill="#d000d8"/>
<rect x="404" y="251.9" width="1" height="2.5" fill="#d000d8"/>
<rect x="404" y="254.3" width="1" height="2.3" fill="#ff00ff"/>
<rect x="404" y="256.7" width="1" height="5.8" fill="#ff00ff"/>
<rect x="404" y="262.5" width="1" height="5.0" fill="#ff00ff"/>
<rect x="405" y="253.2" width="1" height="4.3" fill="#ff00ff"/>
<rect x="405" y="257.5" width="1" height="5.4" fill="#ff00ff"/>
<rect x="405" y="262.9" width="1" height="1.0" fill="#ff00ff"/>
<rect x="406" y="254.5" width="1" height="6.2" fill="#ff00ff"/>
<rect x="406" y="260.7" width="1" height="2.8" fill="#d000d8"/>
<rect x="406" y="263.5" width="1" height="1.0" fill="#ff00ff"/>
<rect x="407" y="252.6" width="1" height="10.1" fill="#ff00ff"/>
<rect x="408" y="251.5" width="1" height="9.8" fill="#ff00ff"/>
<rect x="408" y="253.7" width="1" height="2.8" fill="#a000a0"/>
<rect x="409" y="253.4" width="1" height="9.0" fill="#ff00ff"/>
<rect x="409" y="256.6" width="1" height="1.5" fill="#a000a0"/>
<rect x="410" y="253.2" width="1" height="10.2" fill="#ff00ff"/>
<rect x="411" y="253.3" width="1" height="10.0" fill="#ff00ff"/>
<rect x="412" y="253.8" width="1" height="10.2" fill="#ff00ff"/>
<rect x="413" y="255.5" width="1" height="9.1" fill="#ff00ff"/>
<rect x="414" y="255.1" width="1" height="9.8" fill="#ff00ff"/>
<rect x="415" y="256.7" width="1" height="9.2" fill="#ff00ff"/>
<rect x="415" y="260.7" width="1" height="2.9" fill="#a000a0"/>
<rect x="416" y="259.1" width="1" height="8.1" fill="#ff00ff"/>
<rect x="417" y="259.3" width="1" height="9.9" fill="#ff00ff"/>
<rect x="417" y="265.2" width="1" height="2.7" fill="#a000a0"/>
<rect x="418" y="260.9" width="1" height="9.5" fill="#ff00ff"/>
<rect x="418" y="261.0" width="1" height="2.5" fill="#a000a0"/>
<rect x="419" y="262.1" width="1" height="11.2" fill="#ff00ff"/>
<rect x="420" y="263.5" width="1" height="10.3" fill="#ff00ff"/>
<rect x="421" y="266.9" width="1" height="9.9" fill="#ff00ff"/>
<rect x="422" y="268.1" width="1" height="9.8" fill="#ff00ff"/>
<rect x="423" y="270.9" width="1" height="8.7" fill="#ff00ff"/>
<rect x="424" y="273.4" width="1" height="9.2" fill="#ff00ff"/>
<rect x="425" y="275.6" width="1" height="8.2" fill="#ff00ff"/>
<rect x="426" y="276.1" width="1" height="11.4" fill="#ff00ff"/>
<rect x="426" y="279.6" width="1" height="1.9" fill="#a000a0"/>
<rect x="427" y="280.0" width="1" height="9.6" fill="#ff00ff"/>
<rect x="428" y="282.6" width="1" height="9.9" fill="#ff00ff"/>
<rect x="429" y="283.0" width="1" height="10.6" fill="#ff00ff"/>
<rect x="430" y="286.4" width="1" height="11.3" fill="#ff00ff"/>
<rect x="431" y="290.0" width="1" height="8.2" fill="#ff00ff"/>
<rect x="432" y="292.4" width="1" height="9.1" fill="#ff00ff"/>
<rect x="433" y="293.5" width="1" height="10.0" fill="#ff00ff"/>
<rect x="434" y="297.3" width="1" height="9.6" fill="#ff00ff"/>
<rect x="435" y="299.4" width="1" height="9.3" fill="#ff00ff"/>
<rect x="436" y="302.2" width="1" height="10.4" fill="#ff00ff"/>
<rect x="437" y="286.6" width="1" height="3.5" fill="#ff00ff"/>
<rect x="437" y="290.1" width="1" height="2.6" fill="#ff00ff"/>
<rect x="437" y="292.6" width="1" height="4.4" fill="#ff00ff"/>
<rect x="437" y="297.0" width="1" height="6.4" fill="#ff00ff"/>
<rect x="437" y="303.4" width="1" height="4.2" fill="#ff00ff"/>
<rect x="437" y="307.7" width="1" height="2.1" fill="#ff00ff"/>
<rect x="437" y="309.8" width="1" height="1.0" fill="#ff00ff"/>
<rect x="438" y="280.6" width="1" height="5.8" fill="#ff00ff"/>
<rect x="438" y="286.4" width="1" height="6.0" fill="#d000d8"/>
<rect x="438" y="292.4" width="1" height="6.5" fill="#ff00ff"/>
<rect x="438" y="298.8" width="1" height="5.4" fill="#ff00ff"/>
<rect x="438" y="304.2" width="1" height="3.7" fill="#ff00ff"/>
<rect x="439" y="276.7" width="1" height="6.3" fill="#ff00ff"/>
<rect x="439" y="283.0" width="1" height="5.8" fill="#ff00ff"/>
<rect x="439" y="288.8" width="1" height="5.0" fill="#d000d8"/>
<rect x="439" y="293.8" width="1" height="2.2" fill="#ff00ff"/>
<rect x="439" y="299.9" width="1" height="2.8" fill="#ff00ff"/>
<rect x="439" y="302.7" width="1" height="2.7" fill="#ff00ff"/>
<rect x="439" y="305.4" width="1" height="1.9" fill="#ff00ff"/>
<rect x="440" y="272.9" width="1" height="2.0" fill="#ff00ff"/>
<rect x="440" y="274.9" width="1" height="5.7" fill="#d000d8"/>
<rect x="440" y="280.6" width="1" height="5.9" fill="#ff00ff"/>
<rect x="440" y="286.4" width="1" height="2.4" fill="#ff00ff"/>
<rect x="440" y="288.8" width="1" height="5.7" fill="#ff00ff"/>
<rect x="440" y="294.5" width="1" height="6.7" fill="#ff00ff"/>
<rect x="440" y="301.2" width="1" height="2.2" fill="#ff00ff"/>
<rect x="440" y="303.3" width="1" height="1.7" fill="#ff00ff"/>
<rect x="441" y="272.7" width="1" height="2.6" fill="#ff00ff"/>
<rect x="441" y="275.3" width="1" height="3.4" fill="#ff00ff"/>
<rect x="441" y="278.7" width="1" height="2.5" fill="#ff00ff"/>
<rect x="441" y="281.2" width="1" height="4.1" fill="#ff00ff"/>
<rect x="441" y="285.3" width="1" height="4.2" fill="#ff00ff"/>
<rect x="441" y="296.2" width="1" height="6.5" fill="#d000d8"/>
<rect x="441" y="302.7" width="1" height="1.0" fill="#ff00ff"/>
<rect x="442" y="268.9" width="1" height="5.0" fill="#ff00ff"/>
<rect x="442" y="273.9" width="1" height="7.0" fill="#ff00ff"/>
<rect x="442" y="280.9" width="1" height="2.1" fill="#ff00ff"/>
<rect x="442" y="283.0" width="1" height="3.0" fill="#ff00ff"/>
<rect x="442" y="286.0" width="1" height="6.2" fill="#ff00ff"/>
<rect x="442" y="292.2" width="1" height="3.2" fill="#ff00ff"/>
<rect x="442" y="295.4" width="1" height="3.4" fill="#d000d8"/>
<rect x="443" y="273.1" width="1" height="5.6" fill="#ff00ff"/>
<rect x="443" y="278.7" width="1" height="5.7" fill="#ff00ff"/>
<rect x="443" y="284.4" width="1" height="4.5" fill="#ff00ff"/>
<rect x="443" y="289.0" width="1" height="4.6" fill="#ff00ff"/>
<rect x="443" y="293.6" width="1" height="1.0" fill="#ff00ff"/>
<rect x="444" y="264.1" width="1" height="3.1" fill="#ff00ff"/>
<rect x="444" y="274.0" width="1" height="6.6" fill="#d000d8"/>
<rect x="444" y="280.6" width="1" height="6.2" fill="#d000d8"/>
<rect x="444" y="286.9" width="1" height="4.8" fill="#ff00ff"/>
<rect x="444" y="291.7" width="1" height="4.2" fill="#d000d8"/>
<rect x="445" y="265.4" width="1" height="2.3" fill="#ff00ff"/>
<rect x="445" y="267.7" width="1" height="4.4" fill="#d000d8"/>
<rect x="445" y="272.1" width="1" height="7.0" fill="#ff00ff"/>
<rect x="445" y="279.1" width="1" height="5.4" fill="#ff00ff"/>
<rect x="445" y="284.5" width="1" height="4.6" fill="#ff00ff"/>
<rect x="446" y="263.2" width="1" height="6.5" fill="#ff00ff"/>
<rect x="446" y="269.7" width="1" height="6.0" fill="#ff00ff"/>
<rect x="446" y="275.7" width="1" height="3.0" fill="#ff00ff"/>
<rect x="446" y="278.8" width="1" height="5.4" fill="#ff00ff"/>
<rect x="446" y="284.2" width="1" height="2.5" fill="#ff00ff"/>
<rect x="446" y="286.7" width="1" height="1.0" fill="#ff00ff"/>
<rect x="447" y="260.3" width="1" height="4.1" fill="#ff00ff"/>
<rect x="447" y="264.4" width="1" height="6.6" fill="#ff00ff"/>
<rect x="447" y="270.9" width="1" height="2.1" fill="#d000d8"/>
<rect x="447" y="273.0" width="1" height="5.0" fill="#ff00ff"/>
<rect x="447" y="278.1" width="1" height="5.1" fill="#ff00ff"/>
<rect x="447" y="283.1" width="1" height="2.5" fill="#ff00ff"/>
<rect x="448" y="260.8" width="1" height="5.4" fill="#d000d8"/>
<rect x="448" y="266.2" width="1" height="5.3" fill="#ff00ff"/>
<rect x="449" y="258.9" width="1" height="5.1" fill="#ff00ff"/>
<rect x="449" y="263.9" width="1" height="6.3" fill="#ff00ff"/>
<rect x="449" y="270.3" width="1" height="3.8" fill="#ff00ff"/>
<rect x="449" y="274.1" width="1" height="6.2" fill="#ff00ff"/>
<rect x="449" y="280.2" width="1" height="1.0" fill="#ff00ff"/>
<rect x="450" y="259.4" width="1" height="7.0" fill="#ff00ff"/>
<rect x="450" y="266.3" width="1" height="6.5" fill="#ff00ff"/>
<rect x="450" y="272.8" width="1" height="2.1" fill="#ff00ff"/>
<rect x="450" y="278.6" width="1" height="3.7" fill="#ff00ff"/>
<rect x="451" y="257.7" width="1" height="3.5" fill="#ff00ff"/>
<rect x="451" y="261.2" width="1" height="2.6" fill="#ff00ff"/>
<rect x="451" y="263.8" width="1" height="4.1" fill="#d000d8"/>
<rect x="451" y="271.7" width="1" height="3.0" fill="#ff00ff"/>
<rect x="451" y="274.6" width="1" height="2.3" fill="#ff00ff"/>
<rect x="452" y="255.2" width="1" height="3.5" fill="#ff00ff"/>
<rect x="452" y="258.6" width="1" height="4.6" fill="#ff00ff"/>
<rect x="452" y="263.2" width="1" height="4.7" fill="#ff00ff"/>
<rect x="452" y="267.9" width="1" height="3.7" fill="#ff00ff"/>
<rect x="452" y="271.7" width="1" height="6.1" fill="#ff00ff"/>
<rect x="452" y="277.7" width="1" height="1.2" fill="#ff00ff"/>
<rect x="453" y="256.5" width="1" height="2.3" fill="#ff00ff"/>
<rect x="453" y="258.8" width="1" height="5.7" fill="#d000d8"/>
<rect x="453" y="264.5" width="1" height="6.9" fill="#ff00ff"/>
<rect x="453" y="271.5" width="1" height="2.8" fill="#ff00ff"/>
<rect x="453" y="274.3" width="1" height="2.0" fill="#ff00ff"/>
<rect x="454" y="252.7" width="1" height="4.6" fill="#ff00ff"/>
<rect x="454" y="257.2" width="1" height="6.9" fill="#ff00ff"/>
<rect x="454" y="264.1" width="1" height="2.3" fill="#ff00ff"/>
<rect x="454" y="266.5" width="1" height="3.3" fill="#ff00ff"/>
<rect x="454" y="269.8" width="1" height="3.5" fill="#ff00ff"/>
<rect x="454" y="273.3" width="1" height="2.2" fill="#ff00ff"/>
<rect x="455" y="261.4" width="1" height="3.3" fill="#d000d8"/>
<rect x="455" y="264.6" width="1" height="2.4" fill="#ff00ff"/>
<rect x="455" y="267.1" width="1" height="2.4" fill="#ff00ff"/>
<rect x="455" y="269.5" width="1" height="4.3" fill="#ff00ff"/>
<rect x="456" y="253.3" width="1" height="2.0" fill="#ff00ff"/>
<rect x="456" y="255.3" width="1" height="2.3" fill="#d000d8"/>
<rect x="456" y="257.6" width="1" height="6.1" fill="#ff00ff"/>
<rect x="456" y="263.7" width="1" height="4.2" fill="#ff00ff"/>
<rect x="456" y="268.0" width="1" height="1.6" fill="#ff00ff"/>
<rect x="457" y="251.8" width="1" height="5.4" fill="#ff00ff"/>
<rect x="457" y="257.2" width="1" height="5.6" fill="#ff00ff"/>
<rect x="457" y="262.8" width="1" height="3.6" fill="#ff00ff"/>
<rect x="457" y="266.4" width="1" height="3.3" fill="#ff00ff"/>
<rect x="458" y="251.0" width="1" height="3.4" fill="#d000d8"/>
<rect x="458" y="254.4" width="1" height="3.7" fill="#ff00ff"/>
<rect x="458" y="258.2" width="1" height="3.8" fill="#ff00ff"/>
<rect x="459" y="250.5" width="1" height="2.8" fill="#ff00ff"/>
<rect x="459" y="253.3" width="1" height="5.1" fill="#ff00ff"/>
<rect x="459" y="258.4" width="1" height="3.4" fill="#ff00ff"/>
<rect x="460" y="248.4" width="1" height="2.7" fill="#ff00ff"/>
<rect x="460" y="251.1" width="1" height="4.5" fill="#ff00ff"/>
<rect x="460" y="259.4" width="1" height="1.4" fill="#d000d8"/>
<rect x="461" y="248.9" width="1" height="2.1" fill="#ff00ff"/>
<rect x="461" y="251.0" width="1" height="6.4" fill="#ff00ff"/>
<rect x="461" y="257.4" width="1" height="1.1" fill="#ff00ff"/>
<rect x="462" y="248.8" width="1" height="5.6" fill="#ff00ff"/>
<rect x="463" y="248.2" width="1" height="8.8" fill="#ff00ff"/>
<rect x="464" y="249.3" width="1" height="8.0" fill="#ff00ff"/>
<rect x="465" y="247.6" width="1" height="12.0" fill="#ff00ff"/>
<rect x="466" y="248.2" width="1" height="10.7" fill="#ff00ff"/>
<rect x="467" y="249.7" width="1" height="10.4" fill="#ff00ff"/>
<rect x="468" y="249.7" width="1" height="11.1" fill="#ff00ff"/>
<rect x="468" y="254.6" width="1" height="2.6" fill="#a000a0"/>
<rect x="469" y="251.1" width="1" height="11.3" fill="#ff00ff"/>
<rect x="470" y="252.5" width="1" height="11.0" fill="#ff00ff"/>
<rect x="470" y="258.6" width="1" height="2.1" fill="#a000a0"/>
<rect x="471" y="254.6" width="1" height="10.6" fill="#ff00ff"/>
<rect x="472" y="254.8" width="1" height="9.9" fill="#ff00ff"/>
<rect x="473" y="256.5" width="1" height="10.7" fill="#ff00ff"/>
<rect x="473" y="263.9" width="1" height="1.8" fill="#a000a0"/>
<rect x="474" y="257.6" width="1" height="10.2" fill="#ff00ff"/>
<rect x="475" y="261.3" width="1" height="10.1" fill="#ff00ff"/>
<rect x="476" y="263.6" width="1" height="8.0" fill="#ff00ff"/>
<rect x="477" y="265.5" width="1" height="8.2" fill="#ff00ff"/>
<rect x="477" y="266.6" width="1" height="1.2" fill="#a000a0"/>
<rect x="478" y="267.4" width="1" height="9.5" fill="#ff00ff"/>
<rect x="479" y="268.0" width="1" height="11.3" fill="#ff00ff"/>
<rect x="479" y="269.5" width="1" height="2.2" fill="#a000a0"/>
<rect x="480" y="271.7" width="1" height="10.4" fill="#ff00ff"/>
<rect x="481" y="273.0" width="1" height="10.4" fill="#ff00ff"/>
<rect x="481" y="278.1" width="1" height="1.1" fill="#a000a0"/>
<rect x="482" y="277.3" width="1" height="9.6" fill="#ff00ff"/>
<rect x="483" y="279.1" width="1" height="11.0" fill="#ff00ff"/>
<rect x="484" y="282.6" width="1" height="9.9" fill="#ff00ff"/>
<rect x="485" y="284.3" width="1" height="9.3" fill="#ff00ff"/>
<rect x="486" y="287.5" width="1" height="11.2" fill="#ff00ff"/>
<rect x="487" y="290.4" width="1" height="11.0" fill="#ff00ff"/>
<rect x="488" y="294.2" width="1" height="10.3" fill="#ff00ff"/>
<rect x="489" y="296.1" width="1" height="10.8" fill="#ff00ff"/>
<rect x="489" y="303.4" width="1" height="2.9" fill="#a000a0"/>
<rect x="490" y="299.7" width="1" height="9.1" fill="#ff00ff"/>
<rect x="491" y="301.8" width="1" height="11.0" fill="#ff00ff"/>
<rect x="491" y="306.4" width="1" height="2.6" fill="#a000a0"/>
<rect x="492" y="306.6" width="1" height="10.3" fill="#ff00ff"/>
<rect x="493" y="309.1" width="1" height="9.1" fill="#ff00ff"/>
<rect x="494" y="312.6" width="1" height="9.6" fill="#ff00ff"/>
<rect x="494" y="317.0" width="1" height="1.1" fill="#a000a0"/>
<rect x="495" y="295.4" width="1" height="4.1" fill="#ff00ff"/>
<rect x="495" y="299.6" width="1" height="6.1" fill="#ff00ff"/>
<rect x="495" y="305.7" width="1" height="6.3" fill="#ff00ff"/>
<rect x="495" y="312.0" width="1" height="2.8" fill="#ff00ff"/>
<rect x="495" y="314.8" width="1" height="5.2" fill="#ff00ff"/>
<rect x="496" y="290.5" width="1" height="2.2" fill="#ff00ff"/>
<rect x="496" y="292.7" width="1" height="4.2" fill="#d000d8"/>
<rect x="496" y="296.9" width="1" height="6.7" fill="#ff00ff"/>
<rect x="496" y="303.6" width="1" height="3.3" fill="#ff00ff"/>
<rect x="496" y="306.9" width="1" height="4.8" fill="#ff00ff"/>
<rect x="496" y="311.7" width="1" height="6.7" fill="#ff00ff"/>
<rect x="496" y="318.4" width="1" height="1.2" fill="#ff00ff"/>
<rect x="497" y="283.9" width="1" height="6.4" fill="#ff00ff"/>
<rect x="497" y="290.2" width="1" height="2.1" fill="#ff00ff"/>
<rect x="497" y="292.3" width="1" height="3.2" fill="#ff00ff"/>
<rect x="497" y="295.5" width="1" height="6.6" fill="#ff00ff"/>
<rect x="497" y="302.1" width="1" height="3.4" fill="#ff00ff"/>
<rect x="497" y="305.5" width="1" height="3.4" fill="#ff00ff"/>
<rect x="497" y="308.9" width="1" height="3.3" fill="#d000d8"/>
<rect x="497" y="312.2" width="1" height="5.4" fill="#d000d8"/>
<rect x="498" y="282.0" width="1" height="4.9" fill="#ff00ff"/>
<rect x="498" y="286.9" width="1" height="5.2" fill="#ff00ff"/>
<rect x="498" y="292.2" width="1" height="2.6" fill="#ff00ff"/>
<rect x="498" y="294.7" width="1" height="5.1" fill="#ff00ff"/>
<rect x="498" y="299.8" width="1" height="2.5" fill="#ff00ff"/>
<rect x="498" y="302.3" width="1" height="2.7" fill="#ff00ff"/>
<rect x="498" y="305.0" width="1" height="3.4" fill="#ff00ff"/>
<rect x="498" y="308.4" width="1" height="6.7" fill="#d000d8"/>
<rect x="499" y="280.5" width="1" height="5.1" fill="#ff00ff"/>
<rect x="499" y="285.6" width="1" height="3.6" fill="#ff00ff"/>
<rect x="499" y="289.3" width="1" height="4.8" fill="#ff00ff"/>
<rect x="499" y="294.1" width="1" height="5.2" fill="#d000d8"/>
<rect x="499" y="299.3" width="1" height="5.6" fill="#ff00ff"/>
<rect x="499" y="304.9" width="1" height="2.1" fill="#ff00ff"/>
<rect x="499" y="307.1" width="1" height="4.2" fill="#d000d8"/>
<rect x="499" y="311.2" width="1" height="1.9" fill="#ff00ff"/>
<rect x="500" y="278.4" width="1" height="5.4" fill="#ff00ff"/>
<rect x="500" y="283.8" width="1" height="4.8" fill="#ff00ff"/>
<rect x="500" y="288.5" width="1" height="2.6" fill="#ff00ff"/>
<rect x="500" y="297.6" width="1" height="3.5" fill="#ff00ff"/>
<rect x="500" y="301.0" width="1" height="4.6" fill="#ff00ff"/>
<rect x="500" y="305.6" width="1" height="2.9" fill="#ff00ff"/>
<rect x="500" y="308.5" width="1" height="1.0" fill="#ff00ff"/>
<rect x="501" y="275.2" width="1" height="3.0" fill="#ff00ff"/>
<rect x="501" y="278.1" width="1" height="4.6" fill="#ff00ff"/>
<rect x="501" y="282.8" width="1" height="5.2" fill="#ff00ff"/>
<rect x="501" y="288.0" width="1" height="5.1" fill="#ff00ff"/>
<rect x="501" y="293.1" width="1" height="5.1" fill="#ff00ff"/>
<rect x="501" y="298.1" width="1" height="4.3" fill="#ff00ff"/>
<rect x="501" y="302.5" width="1" height="2.4" fill="#ff00ff"/>
<rect x="502" y="274.7" width="1" height="5.1" fill="#ff00ff"/>
<rect x="502" y="279.8" width="1" height="5.8" fill="#ff00ff"/>
<rect x="502" y="285.6" width="1" height="3.9" fill="#ff00ff"/>
<rect x="502" y="289.5" width="1" height="5.7" fill="#ff00ff"/>
<rect x="502" y="298.1" width="1" height="6.9" fill="#ff00ff"/>
<rect x="502" y="305.0" width="1" height="1.6" fill="#ff00ff"/>
<rect x="503" y="272.3" width="1" height="2.1" fill="#ff00ff"/>
<rect x="503" y="274.4" width="1" height="5.6" fill="#ff00ff"/>
<rect x="503" y="280.0" width="1" height="5.9" fill="#ff00ff"/>
<rect x="503" y="285.9" width="1" height="5.7" fill="#ff00ff"/>
<rect x="503" y="291.6" width="1" height="5.2" fill="#ff00ff"/>
<rect x="503" y="296.8" width="1" height="3.2" fill="#ff00ff"/>
<rect x="504" y="269.7" width="1" height="5.5" fill="#ff00ff"/>
<rect x="504" y="275.2" width="1" height="6.8" fill="#ff00ff"/>
<rect x="504" y="282.1" width="1" height="2.8" fill="#ff00ff"/>
<rect x="504" y="284.9" width="1" height="3.8" fill="#ff00ff"/>
<rect x="504" y="288.7" width="1" height="6.4" fill="#ff00ff"/>
<rect x="504" y="295.2" width="1" height="5.6" fill="#ff00ff"/>
<rect x="505" y="270.4" width="1" height="6.5" fill="#ff00ff"/>
<rect x="505" y="277.0" width="1" height="5.2" fill="#ff00ff"/>
<rect x="505" y="282.1" width="1" height="2.8" fill="#ff00ff"/>
<rect x="505" y="285.0" width="1" height="4.2" fill="#d000d8"/>
<rect x="505" y="289.2" width="1" height="2.6" fill="#ff00ff"/>
<rect x="505" y="291.7" width="1" height="4.4" fill="#ff00ff"/>
<rect x="505" y="296.1" width="1" height="3.6" fill="#ff00ff"/>
<rect x="506" y="268.1" width="1" height="5.0" fill="#ff00ff"/>
<rect x="506" y="273.1" width="1" height="4.7" fill="#d000d8"/>
<rect x="506" y="277.8" width="1" height="2.2" fill="#ff00ff"/>
<rect x="506" y="280.0" width="1" height="4.4" fill="#ff00ff"/>
<rect x="506" y="284.5" width="1" height="2.8" fill="#ff00ff"/>
<rect x="506" y="287.3" width="1" height="4.2" fill="#ff00ff"/>
<rect x="506" y="291.5" width="1" height="5.0" fill="#ff00ff"/>
<rect x="506" y="296.5" width="1" height="1.7" fill="#ff00ff"/>
<rect x="507" y="272.0" width="1" height="4.7" fill="#ff00ff"/>
<rect x="507" y="276.7" width="1" height="3.3" fill="#ff00ff"/>
<rect x="507" y="280.0" width="1" height="4.2" fill="#ff00ff"/>
<rect x="507" y="284.2" width="1" height="3.3" fill="#d000d8"/>
<rect x="507" y="287.4" width="1" height="3.3" fill="#d000d8"/>
<rect x="507" y="290.8" width="1" height="4.2" fill="#ff00ff"/>
<rect x="507" y="295.0" width="1" height="1.0" fill="#ff00ff"/>
<rect x="508" y="266.7" width="1" height="6.7" fill="#ff00ff"/>
<rect x="508" y="275.9" width="1" height="2.1" fill="#ff00ff"/>
<rect x="508" y="278.0" width="1" height="6.1" fill="#ff00ff"/>
<rect x="508" y="284.1" width="1" height="2.1" fill="#ff00ff"/>
<rect x="508" y="286.2" width="1" height="4.5" fill="#d000d8"/>
<rect x="508" y="290.7" width="1" height="1.6" fill="#ff00ff"/>
<rect x="509" y="263.5" width="1" height="3.6" fill="#ff00ff"/>
<rect x="509" y="267.1" width="1" height="6.8" fill="#ff00ff"/>
<rect x="509" y="273.9" width="1" height="6.3" fill="#ff00ff"/>
<rect x="509" y="280.2" width="1" height="6.6" fill="#ff00ff"/>
<rect x="509" y="286.7" width="1" height="1.1" fill="#ff00ff"/>
<rect x="510" y="264.4" width="1" height="6.6" fill="#ff00ff"/>
<rect x="510" y="271.0" width="1" height="3.0" fill="#ff00ff"/>
<rect x="510" y="274.0" width="1" height="6.0" fill="#ff00ff"/>
<rect x="510" y="280.0" width="1" height="4.9" fill="#ff00ff"/>
<rect x="510" y="285.0" width="1" height="1.2" fill="#ff00ff"/>
<rect x="511" y="263.5" width="1" height="3.1" fill="#ff00ff"/>
<rect x="511" y="266.7" width="1" height="4.9" fill="#ff00ff"/>
<rect x="511" y="271.6" width="1" height="7.0" fill="#ff00ff"/>
<rect x="511" y="278.6" width="1" height="7.0" fill="#ff00ff"/>
<rect x="511" y="285.5" width="1" height="1.7" fill="#ff00ff"/>
<rect x="512" y="260.9" width="1" height="2.5" fill="#ff00ff"/>
<rect x="512" y="263.4" width="1" height="2.4" fill="#ff00ff"/>
<rect x="512" y="265.9" width="1" height="3.0" fill="#ff00ff"/>
<rect x="512" y="268.8" width="1" height="5.8" fill="#ff00ff"/>
<rect x="512" y="274.7" width="1" height="2.7" fill="#ff00ff"/>
<rect x="512" y="277.4" width="1" height="7.0" fill="#ff00ff"/>
<rect x="512" y="284.4" width="1" height="1.0" fill="#ff00ff"/>
<rect x="513" y="262.5" width="1" height="5.9" fill="#ff00ff"/>
<rect x="513" y="268.4" width="1" height="5.9" fill="#ff00ff"/>
<rect x="513" y="274.3" width="1" height="2.6" fill="#ff00ff"/>
<rect x="513" y="277.0" width="1" height="2.9" fill="#ff00ff"/>
<rect x="513" y="283.3" width="1" height="1.0" fill="#d000d8"/>
<rect x="514" y="262.6" width="1" height="5.8" fill="#ff00ff"/>
<rect x="514" y="268.5" width="1" height="4.0" fill="#ff00ff"/>
<rect x="514" y="277.8" width="1" height="2.8" fill="#ff00ff"/>
<rect x="515" y="260.1" width="1" height="4.0" fill="#ff00ff"/>
<rect x="515" y="264.1" width="1" height="2.0" fill="#ff00ff"/>
<rect x="515" y="266.1" width="1" height="4.6" fill="#ff00ff"/>
<rect x="515" y="270.7" width="1" height="5.7" fill="#ff00ff"/>
<rect x="515" y="276.3" width="1" height="2.0" fill="#ff00ff"/>
<rect x="516" y="259.6" width="1" height="5.4" fill="#ff00ff"/>
<rect x="516" y="265.0" width="1" height="5.9" fill="#ff00ff"/>
<rect x="516" y="271.0" width="1" height="2.5" fill="#ff00ff"/>
<rect x="516" y="273.5" width="1" height="3.3" fill="#ff00ff"/>
<rect x="516" y="276.8" width="1" height="1.0" fill="#ff00ff"/>
<rect x="517" y="259.4" width="1" height="5.1" fill="#ff00ff"/>
<rect x="517" y="264.6" width="1" height="3.1" fill="#ff00ff"/>
<rect x="517" y="267.7" width="1" height="2.1" fill="#d000d8"/>
<rect x="517" y="269.8" width="1" height="4.0" fill="#ff00ff"/>
<rect x="518" y="255.8" width="1" height="5.3" fill="#ff00ff"/>
<rect x="518" y="261.1" width="1" height="5.8" fill="#ff00ff"/>
<rect x="518" y="266.9" width="1" height="3.2" fill="#ff00ff"/>
<rect x="518" y="270.1" width="1" height="4.9" fill="#ff00ff"/>
<rect x="519" y="257.0" width="1" height="5.0" fill="#ff00ff"/>
<rect x="519" y="262.1" width="1" height="2.9" fill="#ff00ff"/>
<rect x="519" y="265.0" width="1" height="2.9" fill="#ff00ff"/>
<rect x="519" y="267.9" width="1" height="5.0" fill="#ff00ff"/>
<rect x="519" y="272.9" width="1" height="1.0" fill="#ff00ff"/>
<rect x="520" y="256.9" width="1" height="6.2" fill="#ff00ff"/>
<rect x="520" y="269.5" width="1" height="1.0" fill="#ff00ff"/>
<rect x="521" y="256.4" width="1" height="3.2" fill="#ff00ff"/>
<rect x="521" y="259.6" width="1" height="5.3" fill="#ff00ff"/>
<rect x="521" y="264.9" width="1" height="4.0" fill="#ff00ff"/>
<rect x="522" y="255.4" width="1" height="3.2" fill="#ff00ff"/>
<rect x="522" y="258.6" width="1" height="5.5" fill="#d000d8"/>
<rect x="522" y="264.1" width="1" height="2.6" fill="#ff00ff"/>
<rect x="523" y="254.1" width="1" height="5.2" fill="#ff00ff"/>
<rect x="523" y="259.3" width="1" height="5.7" fill="#d000d8"/>
<rect x="524" y="254.6" width="1" height="10.6" fill="#ff00ff"/>
<rect x="525" y="254.0" width="1" height="10.5" fill="#ff00ff"/>
<rect x="526" y="255.2" width="1" height="9.0" fill="#ff00ff"/>
<rect x="527" y="254.8" width="1" height="9.6" fill="#ff00ff"/>
<rect x="527" y="257.5" width="1" height="2.0" fill="#a000a0"/>
<rect x="528" y="256.4" width="1" height="8.0" fill="#ff00ff"/>
<rect x="529" y="257.1" width="1" height="9.6" fill="#ff00ff"/>
<rect x="530" y="255.5" width="1" height="12.1" fill="#ff00ff"/>
<rect x="530" y="259.1" width="1" height="2.9" fill="#a000a0"/>
<rect x="531" y="258.0" width="1" height="10.4" fill="#ff00ff"/>
<rect x="532" y="257.8" width="1" height="10.8" fill="#ff00ff"/>
<rect x="532" y="261.9" width="1" height="2.0" fill="#a000a0"/>
<rect x="533" y="260.4" width="1" height="8.7" fill="#ff00ff"/>
<rect x="534" y="260.0" width="1" height="10.3" fill="#ff00ff"/>
<rect x="534" y="266.0" width="1" height="2.2" fill="#a000a0"/>
<rect x="535" y="262.8" width="1" height="9.3" fill="#ff00ff"/>
<rect x="536" y="264.2" width="1" height="9.6" fill="#ff00ff"/>
<rect x="537" y="264.5" width="1" height="10.3" fill="#ff00ff"/>
<rect x="538" y="267.1" width="1" height="10.9" fill="#ff00ff"/>
<rect x="539" y="267.6" width="1" height="12.2" fill="#ff00ff"/>
<rect x="540" y="269.8" width="1" height="11.3" fill="#ff00ff"/>
<rect x="541" y="273.3" width="1" height="9.3" fill="#ff00ff"/>
<rect x="542" y="274.3" width="1" height="10.0" fill="#ff00ff"/>
<rect x="543" y="276.7" width="1" height="9.0" fill="#ff00ff"/>
<rect x="544" y="277.7" width="1" height="9.8" fill="#ff00ff"/>
<rect x="545" y="281.4" width="1" height="9.2" fill="#ff00ff"/>
<rect x="546" y="283.4" width="1" height="10.1" fill="#ff00ff"/>
<rect x="547" y="286.4" width="1" height="8.7" fill="#ff00ff"/>
<rect x="548" y="287.2" width="1" height="11.7" fill="#ff00ff"/>
<rect x="549" y="289.5" width="1" height="11.3" fill="#ff00ff"/>
<rect x="549" y="293.8" width="1" height="1.8" fill="#a000a0"/>
<rect x="550" y="292.3" width="1" height="10.1" fill="#ff00ff"/>
<rect x="550" y="296.3" width="1" height="1.2" fill="#a000a0"/>
<rect x="551" y="295.9" width="1" height="8.9" fill="#ff00ff"/>
<rect x="552" y="297.5" width="1" height="11.3" fill="#ff00ff"/>
<rect x="553" y="300.7" width="1" height="10.3" fill="#ff00ff"/>
<rect x="554" y="303.8" width="1" height="8.8" fill="#ff00ff"/>
<rect x="555" y="284.3" width="1" height="3.6" fill="#ff00ff"/>
<rect x="555" y="288.0" width="1" height="2.0" fill="#ff00ff"/>
<rect x="555" y="290.0" width="1" height="2.4" fill="#ff00ff"/>
<rect x="555" y="292.4" width="1" height="4.4" fill="#d000d8"/>
<rect x="555" y="296.8" width="1" height="5.2" fill="#ff00ff"/>
<rect x="555" y="302.0" width="1" height="5.3" fill="#ff00ff"/>
<rect x="555" y="307.3" width="1" height="3.9" fill="#ff00ff"/>
<rect x="556" y="280.5" width="1" height="3.4" fill="#ff00ff"/>
<rect x="556" y="283.8" width="1" height="6.8" fill="#ff00ff"/>
<rect x="556" y="290.6" width="1" height="3.2" fill="#ff00ff"/>
<rect x="556" y="299.2" width="1" height="2.4" fill="#ff00ff"/>
<rect x="556" y="301.6" width="1" height="5.6" fill="#ff00ff"/>
<rect x="556" y="307.2" width="1" height="1.0" fill="#ff00ff"/>
<rect x="557" y="272.7" width="1" height="2.9" fill="#ff00ff"/>
<rect x="557" y="275.5" width="1" height="2.9" fill="#ff00ff"/>
<rect x="557" y="278.5" width="1" height="2.6" fill="#ff00ff"/>
<rect x="557" y="281.0" width="1" height="4.6" fill="#ff00ff"/>
<rect x="557" y="285.7" width="1" height="2.8" fill="#ff00ff"/>
<rect x="557" y="288.4" width="1" height="5.6" fill="#ff00ff"/>
<rect x="557" y="294.1" width="1" height="2.7" fill="#ff00ff"/>
<rect x="557" y="296.8" width="1" height="3.5" fill="#ff00ff"/>
<rect x="557" y="300.3" width="1" height="2.6" fill="#ff00ff"/>
<rect x="558" y="270.5" width="1" height="6.1" fill="#ff00ff"/>
<rect x="558" y="276.6" width="1" height="6.1" fill="#ff00ff"/>
<rect x="558" y="282.8" width="1" height="4.2" fill="#ff00ff"/>
<rect x="558" y="286.9" width="1" height="2.8" fill="#ff00ff"/>
<rect x="558" y="296.4" width="1" height="3.5" fill="#ff00ff"/>
<rect x="559" y="269.3" width="1" height="4.4" fill="#ff00ff"/>
<rect x="559" y="273.7" width="1" height="5.2" fill="#ff00ff"/>
<rect x="559" y="278.9" width="1" height="5.4" fill="#ff00ff"/>
<rect x="559" y="284.3" width="1" height="3.5" fill="#ff00ff"/>
<rect x="559" y="287.8" width="1" height="5.8" fill="#ff00ff"/>
<rect x="559" y="293.6" width="1" height="3.4" fill="#ff00ff"/>
<rect x="559" y="297.0" width="1" height="3.0" fill="#ff00ff"/>
<rect x="560" y="265.7" width="1" height="2.3" fill="#ff00ff"/>
<rect x="560" y="268.0" width="1" height="6.8" fill="#d000d8"/>
<rect x="560" y="279.5" width="1" height="4.7" fill="#ff00ff"/>
<rect x="560" y="284.2" width="1" height="2.5" fill="#ff00ff"/>
<rect x="560" y="286.7" width="1" height="5.1" fill="#ff00ff"/>
<rect x="560" y="291.8" width="1" height="2.6" fill="#ff00ff"/>
<rect x="561" y="264.7" width="1" height="4.4" fill="#ff00ff"/>
<rect x="561" y="269.2" width="1" height="4.6" fill="#ff00ff"/>
<rect x="561" y="273.8" width="1" height="3.2" fill="#ff00ff"/>
<rect x="561" y="277.0" width="1" height="2.8" fill="#ff00ff"/>
<rect x="561" y="279.8" width="1" height="7.0" fill="#ff00ff"/>
<rect x="561" y="286.8" width="1" height="5.7" fill="#ff00ff"/>
<rect x="561" y="292.5" width="1" height="1.0" fill="#ff00ff"/>
<rect x="562" y="261.9" width="1" height="2.1" fill="#ff00ff"/>
<rect x="562" y="264.0" width="1" height="3.4" fill="#ff00ff"/>
<rect x="562" y="267.4" width="1" height="5.7" fill="#d000d8"/>
<rect x="562" y="273.0" width="1" height="4.5" fill="#ff00ff"/>
<rect x="562" y="277.6" width="1" height="2.4" fill="#ff00ff"/>
<rect x="562" y="280.0" width="1" height="6.6" fill="#ff00ff"/>
<rect x="562" y="286.6" width="1" height="4.5" fill="#ff00ff"/>
<rect x="562" y="291.1" width="1" height="2.1" fill="#ff00ff"/>
<rect x="563" y="259.5" width="1" height="4.6" fill="#ff00ff"/>
<rect x="563" y="264.0" width="1" height="5.1" fill="#d000d8"/>
<rect x="563" y="269.1" width="1" height="5.3" fill="#ff00ff"/>
<rect x="563" y="274.4" width="1" height="6.8" fill="#ff00ff"/>
<rect x="563" y="281.1" width="1" height="4.5" fill="#ff00ff"/>
<rect x="563" y="285.7" width="1" height="2.8" fill="#ff00ff"/>
<rect x="563" y="288.5" width="1" height="2.5" fill="#ff00ff"/>
<rect x="564" y="257.3" width="1" height="5.3" fill="#ff00ff"/>
<rect x="564" y="262.7" width="1" height="6.8" fill="#ff00ff"/>
<rect x="564" y="273.7" width="1" height="5.2" fill="#ff00ff"/>
<rect x="564" y="278.9" width="1" height="5.7" fill="#ff00ff"/>
<rect x="564" y="284.7" width="1" height="3.3" fill="#ff00ff"/>
<rect x="565" y="258.7" width="1" height="5.0" fill="#ff00ff"/>
<rect x="565" y="263.7" width="1" height="5.7" fill="#ff00ff"/>
<rect x="565" y="269.4" width="1" height="6.0" fill="#ff00ff"/>
<rect x="565" y="275.4" width="1" height="5.2" fill="#ff00ff"/>
<rect x="565" y="280.6" width="1" height="3.8" fill="#ff00ff"/>
<rect x="565" y="284.4" width="1" height="1.8" fill="#ff00ff"/>
<rect x="566" y="256.1" width="1" height="5.1" fill="#ff00ff"/>
<rect x="566" y="261.3" width="1" height="2.4" fill="#d000d8"/>
<rect x="566" y="263.7" width="1" height="6.2" fill="#ff00ff"/>
<rect x="566" y="269.9" width="1" height="3.0" fill="#ff00ff"/>
<rect x="566" y="272.9" width="1" height="2.0" fill="#ff00ff"/>
<rect x="566" y="278.6" width="1" height="2.2" fill="#ff00ff"/>
<rect x="566" y="280.7" width="1" height="3.8" fill="#ff00ff"/>
<rect x="567" y="260.6" width="1" height="6.5" fill="#ff00ff"/>
<rect x="567" y="267.1" width="1" height="2.4" fill="#ff00ff"/>
<rect x="567" y="269.5" width="1" height="5.2" fill="#d000d8"/>
<rect x="567" y="274.8" width="1" height="3.6" fill="#ff00ff"/>
<rect x="568" y="256.0" width="1" height="4.2" fill="#ff00ff"/>
<rect x="568" y="260.2" width="1" height="5.9" fill="#ff00ff"/>
<rect x="568" y="266.1" width="1" height="6.7" fill="#ff00ff"/>
<rect x="568" y="272.8" width="1" height="5.4" fill="#d000d8"/>
<rect x="569" y="252.3" width="1" height="5.0" fill="#ff00ff"/>
<rect x="569" y="257.4" width="1" height="6.8" fill="#ff00ff"/>
<rect x="569" y="264.2" width="1" height="5.6" fill="#ff00ff"/>
<rect x="569" y="269.8" width="1" height="2.8" fill="#ff00ff"/>
<rect x="569" y="272.6" width="1" height="1.3" fill="#ff00ff"/>
<rect x="570" y="251.0" width="1" height="5.7" fill="#ff00ff"/>
<rect x="570" y="256.7" width="1" height="3.6" fill="#ff00ff"/>
<rect x="570" y="260.3" width="1" height="5.9" fill="#ff00ff"/>
<rect x="570" y="266.2" width="1" height="6.2" fill="#ff00ff"/>
<rect x="570" y="272.4" width="1" height="1.1" fill="#ff00ff"/>
<rect x="571" y="250.8" width="1" height="6.1" fill="#ff00ff"/>
<rect x="571" y="256.9" width="1" height="2.1" fill="#ff00ff"/>
<rect x="571" y="258.9" width="1" height="2.3" fill="#ff00ff"/>
<rect x="571" y="261.2" width="1" height="5.0" fill="#ff00ff"/>
<rect x="571" y="266.2" width="1" height="4.7" fill="#ff00ff"/>
<rect x="571" y="270.9" width="1" height="1.0" fill="#ff00ff"/>
<rect x="572" y="249.2" width="1" height="2.8" fill="#ff00ff"/>
<rect x="572" y="251.9" width="1" height="3.8" fill="#ff00ff"/>
<rect x="572" y="255.8" width="1" height="5.4" fill="#ff00ff"/>
<rect x="572" y="261.1" width="1" height="5.0" fill="#ff00ff"/>
<rect x="572" y="266.2" width="1" height="2.5" fill="#ff00ff"/>
<rect x="573" y="249.4" width="1" height="6.0" fill="#ff00ff"/>
<rect x="573" y="262.0" width="1" height="6.0" fill="#ff00ff"/>
<rect x="573" y="267.9" width="1" height="1.3" fill="#ff00ff"/>
<rect x="574" y="246.6" width="1" height="2.5" fill="#ff00ff"/>
<rect x="574" y="253.0" width="1" height="6.0" fill="#ff00ff"/>
<rect x="574" y="259.1" width="1" height="3.7" fill="#ff00ff"/>
<rect x="574" y="262.8" width="1" height="1.6" fill="#ff00ff"/>
<rect x="575" y="250.8" width="1" height="3.9" fill="#ff00ff"/>
<rect x="575" y="259.0" width="1" height="2.4" fill="#ff00ff"/>
<rect x="575" y="261.4" width="1" height="1.7" fill="#ff00ff"/>
<rect x="576" y="248.1" width="1" height="5.4" fill="#ff00ff"/>
<rect x="576" y="253.5" width="1" height="2.4" fill="#ff00ff"/>
<rect x="577" y="247.3" width="1" height="2.5" fill="#ff00ff"/>
<rect x="577" y="249.8" width="1" height="4.5" fill="#ff00ff"/>
<rect x="577" y="254.3" width="1" height="5.2" fill="#ff00ff"/>
<rect x="577" y="259.5" width="1" height="1.0" fill="#ff00ff"/>
<rect x="578" y="246.6" width="1" height="2.2" fill="#ff00ff"/>
<rect x="578" y="248.9" width="1" height="2.6" fill="#ff00ff"/>
<rect x="578" y="251.5" width="1" height="6.4" fill="#ff00ff"/>
<rect x="579" y="244.5" width="1" height="4.0" fill="#ff00ff"/>
<rect x="579" y="248.5" width="1" height="2.7" fill="#ff00ff"/>
<rect x="579" y="251.2" width="1" height="3.9" fill="#ff00ff"/>
<rect x="579" y="255.0" width="1" height="1.7" fill="#ff00ff"/>
<rect x="580" y="243.1" width="1" height="6.7" fill="#ff00ff"/>
<rect x="580" y="249.7" width="1" height="3.0" fill="#ff00ff"/>
<rect x="580" y="252.7" width="1" height="1.0" fill="#ff00ff"/>
<rect x="581" y="242.0" width="1" height="10.2" fill="#ff00ff"/>
<rect x="582" y="243.3" width="1" height="9.2" fill="#ff00ff"/>
<rect x="583" y="243.0" width="1" height="10.9" fill="#ff00ff"/>
<rect x="583" y="252.2" width="1" height="1.9" fill="#a000a0"/>
<rect x="584" y="243.2" width="1" height="10.3" fill="#ff00ff"/>
<rect x="585" y="243.6" width="1" height="12.0" fill="#ff00ff"/>
<rect x="586" y="245.1" width="1" height="9.2" fill="#ff00ff"/>
<rect x="587" y="247.3" width="1" height="8.1" fill="#ff00ff"/>
<rect x="587" y="251.8" width="1" height="2.3" fill="#a000a0"/>
<rect x="588" y="246.4" width="1" height="10.2" fill="#ff00ff"/>
<rect x="589" y="247.9" width="1" height="9.5" fill="#ff00ff"/>
<rect x="590" y="250.7" width="1" height="9.9" fill="#ff00ff"/>
<rect x="591" y="250.6" width="1" height="10.2" fill="#ff00ff"/>
<rect x="592" y="253.2" width="1" height="10.0" fill="#ff00ff"/>
<rect x="593" y="254.1" width="1" height="10.0" fill="#ff00ff"/>
<rect x="593" y="254.7" width="1" height="2.2" fill="#a000a0"/>
<rect x="594" y="255.6" width="1" height="11.9" fill="#ff00ff"/>
<rect x="595" y="257.8" width="1" height="12.0" fill="#ff00ff"/>
<rect x="596" y="259.6" width="1" height="10.9" fill="#ff00ff"/>
<rect x="597" y="262.5" width="1" height="9.4" fill="#ff00ff"/>
<rect x="598" y="264.2" width="1" height="11.0" fill="#ff00ff"/>
<rect x="599" y="267.2" width="1" height="11.7" fill="#ff00ff"/>
<rect x="600" y="270.4" width="1" height="10.7" fill="#ff00ff"/>
<rect x="601" y="273.6" width="1" height="10.1" fill="#ff00ff"/>
<rect x="602" y="276.3" width="1" height="9.1" fill="#ff00ff"/>
<rect x="602" y="280.1" width="1" height="1.2" fill="#a000a0"/>
<rect x="603" y="279.1" width="1" height="8.9" fill="#ff00ff"/>
<rect x="604" y="282.2" width="1" height="9.5" fill="#ff00ff"/>
<rect x="605" y="285.0" width="1" height="9.9" fill="#ff00ff"/>
<rect x="606" y="288.0" width="1" height="10.5" fill="#ff00ff"/>
<rect x="607" y="291.0" width="1" height="9.7" fill="#ff00ff"/>
<rect x="608" y="294.8" width="1" height="8.5" fill="#ff00ff"/>
<rect x="608" y="299.1" width="1" height="1.6" fill="#a000a0"/>
<rect x="609" y="297.5" width="1" height="9.8" fill="#ff00ff"/>
<rect x="609" y="299.5" width="1" height="2.2" fill="#a000a0"/>
<rect x="610" y="299.9" width="1" height="10.7" fill="#ff00ff"/>
<rect x="611" y="302.5" width="1" height="11.4" fill="#ff00ff"/>
<rect x="612" y="305.8" width="1" height="11.3" fill="#ff00ff"/>
<rect x="613" y="310.3" width="1" height="9.7" fill="#ff00ff"/>
<rect x="614" y="314.5" width="1" height="9.7" fill="#ff00ff"/>
<rect x="615" y="301.1" width="1" height="2.4" fill="#ff00ff"/>
<rect x="615" y="303.5" width="1" height="3.2" fill="#d000d8"/>
<rect x="615" y="306.6" width="1" height="6.6" fill="#ff00ff"/>
<rect x="615" y="313.3" width="1" height="4.4" fill="#d000d8"/>
<rect x="615" y="317.7" width="1" height="4.2" fill="#ff00ff"/>
<rect x="616" y="292.0" width="1" height="3.5" fill="#ff00ff"/>
<rect x="616" y="295.5" width="1" height="5.8" fill="#ff00ff"/>
<rect x="616" y="301.3" width="1" height="3.5" fill="#d000d8"/>
<rect x="616" y="310.8" width="1" height="2.5" fill="#ff00ff"/>
<rect x="616" y="318.9" width="1" height="1.1" fill="#ff00ff"/>
<rect x="617" y="282.6" width="1" height="3.3" fill="#ff00ff"/>
<rect x="617" y="285.9" width="1" height="3.6" fill="#ff00ff"/>
<rect x="617" y="289.5" width="1" height="2.4" fill="#ff00ff"/>
<rect x="617" y="291.9" width="1" height="6.1" fill="#ff00ff"/>
<rect x="617" y="302.6" width="1" height="3.8" fill="#ff00ff"/>
<rect x="617" y="306.4" width="1" height="6.1" fill="#ff00ff"/>
<rect x="617" y="312.4" width="1" height="1.0" fill="#ff00ff"/>
<rect x="618" y="286.6" width="1" height="2.3" fill="#ff00ff"/>
<rect x="618" y="294.1" width="1" height="2.7" fill="#ff00ff"/>
<rect x="618" y="296.9" width="1" height="4.3" fill="#ff00ff"/>
<rect x="618" y="301.2" width="1" height="4.8" fill="#ff00ff"/>
<rect x="618" y="306.0" width="1" height="2.3" fill="#ff00ff"/>
<rect x="618" y="308.3" width="1" height="3.4" fill="#ff00ff"/>
<rect x="619" y="277.1" width="1" height="3.6" fill="#ff00ff"/>
<rect x="619" y="280.7" width="1" height="3.7" fill="#ff00ff"/>
<rect x="619" y="284.4" width="1" height="2.4" fill="#ff00ff"/>
<rect x="619" y="286.8" width="1" height="6.8" fill="#ff00ff"/>
<rect x="619" y="293.5" width="1" height="6.6" fill="#ff00ff"/>
<rect x="619" y="300.1" width="1" height="5.1" fill="#ff00ff"/>
<rect x="619" y="305.2" width="1" height="2.7" fill="#ff00ff"/>
<rect x="620" y="277.1" width="1" height="6.8" fill="#ff00ff"/>
<rect x="620" y="283.9" width="1" height="4.2" fill="#ff00ff"/>
<rect x="620" y="288.1" width="1" height="4.8" fill="#ff00ff"/>
<rect x="620" y="292.9" width="1" height="5.5" fill="#ff00ff"/>
<rect x="620" y="298.4" width="1" height="2.0" fill="#d000d8"/>
<rect x="620" y="300.4" width="1" height="2.6" fill="#ff00ff"/>
<rect x="620" y="303.1" width="1" height="4.6" fill="#ff00ff"/>
<rect x="620" y="307.7" width="1" height="2.0" fill="#ff00ff"/>
<rect x="621" y="273.3" width="1" height="2.6" fill="#ff00ff"/>
<rect x="621" y="275.9" width="1" height="2.5" fill="#ff00ff"/>
<rect x="621" y="278.4" width="1" height="4.3" fill="#ff00ff"/>
<rect x="621" y="287.9" width="1" height="3.7" fill="#ff00ff"/>
<rect x="621" y="291.6" width="1" height="3.0" fill="#ff00ff"/>
<rect x="621" y="294.6" width="1" height="3.8" fill="#ff00ff"/>
<rect x="621" y="298.4" width="1" height="3.0" fill="#ff00ff"/>
<rect x="621" y="301.4" width="1" height="4.5" fill="#ff00ff"/>
<rect x="622" y="274.4" width="1" height="4.9" fill="#ff00ff"/>
<rect x="622" y="279.3" width="1" height="4.0" fill="#ff00ff"/>
<rect x="622" y="283.3" width="1" height="2.4" fill="#ff00ff"/>
<rect x="622" y="285.7" width="1" height="3.3" fill="#ff00ff"/>
<rect x="622" y="289.0" width="1" height="3.7" fill="#ff00ff"/>
<rect x="622" y="292.7" width="1" height="4.9" fill="#ff00ff"/>
<rect x="622" y="297.6" width="1" height="3.2" fill="#ff00ff"/>
<rect x="622" y="300.8" width="1" height="2.1" fill="#d000d8"/>
<rect x="623" y="272.3" width="1" height="2.7" fill="#ff00ff"/>
<rect x="623" y="275.0" width="1" height="3.6" fill="#ff00ff"/>
<rect x="623" y="278.5" width="1" height="6.2" fill="#d000d8"/>
<rect x="623" y="284.7" width="1" height="6.3" fill="#ff00ff"/>
<rect x="623" y="291.0" width="1" height="2.1" fill="#ff00ff"/>
<rect x="623" y="293.1" width="1" height="4.1" fill="#ff00ff"/>
<rect x="623" y="297.3" width="1" height="3.8" fill="#ff00ff"/>
<rect x="623" y="301.0" width="1" height="1.8" fill="#ff00ff"/>
<rect x="624" y="269.4" width="1" height="6.2" fill="#ff00ff"/>
<rect x="624" y="275.6" width="1" height="4.2" fill="#ff00ff"/>
<rect x="624" y="283.1" width="1" height="5.6" fill="#ff00ff"/>
<rect x="624" y="292.4" width="1" height="4.7" fill="#ff00ff"/>
<rect x="625" y="267.7" width="1" height="4.7" fill="#ff00ff"/>
<rect x="625" y="278.7" width="1" height="6.1" fill="#ff00ff"/>
<rect x="625" y="284.8" width="1" height="6.9" fill="#ff00ff"/>
<rect x="625" y="291.8" width="1" height="2.2" fill="#ff00ff"/>
<rect x="625" y="293.9" width="1" height="1.0" fill="#ff00ff"/>
<rect x="626" y="270.6" width="1" height="3.5" fill="#ff00ff"/>
<rect x="626" y="274.1" width="1" height="4.7" fill="#ff00ff"/>
<rect x="626" y="278.8" width="1" height="4.6" fill="#d000d8"/>
<rect x="626" y="283.5" width="1" height="6.2" fill="#ff00ff"/>
<rect x="626" y="289.6" width="1" height="5.8" fill="#ff00ff"/>
<rect x="627" y="265.8" width="1" height="2.2" fill="#ff00ff"/>
<rect x="627" y="270.0" width="1" height="6.1" fill="#ff00ff"/>
<rect x="627" y="276.1" width="1" height="2.3" fill="#ff00ff"/>
<rect x="627" y="278.4" width="1" height="5.9" fill="#ff00ff"/>
<rect x="627" y="284.3" width="1" height="2.5" fill="#ff00ff"/>
<rect x="627" y="286.8" width="1" height="4.9" fill="#ff00ff"/>
<rect x="627" y="291.7" width="1" height="1.0" fill="#ff00ff"/>
<rect x="628" y="266.3" width="1" height="7.0" fill="#ff00ff"/>
<rect x="628" y="273.2" width="1" height="5.8" fill="#ff00ff"/>
<rect x="628" y="279.0" width="1" height="6.6" fill="#ff00ff"/>
<rect x="628" y="285.5" width="1" height="2.9" fill="#d000d8"/>
<rect x="628" y="288.4" width="1" height="1.8" fill="#ff00ff"/>
<rect x="629" y="265.8" width="1" height="3.8" fill="#ff00ff"/>
<rect x="629" y="269.5" width="1" height="5.6" fill="#ff00ff"/>
<rect x="629" y="275.1" width="1" height="3.9" fill="#ff00ff"/>
<rect x="629" y="279.1" width="1" height="6.1" fill="#ff00ff"/>
<rect x="629" y="285.2" width="1" height="5.8" fill="#ff00ff"/>
<rect x="630" y="263.5" width="1" height="3.1" fill="#ff00ff"/>
<rect x="630" y="266.6" width="1" height="6.5" fill="#ff00ff"/>
<rect x="630" y="273.1" width="1" height="5.6" fill="#ff00ff"/>
<rect x="630" y="278.6" width="1" height="4.2" fill="#d000d8"/>
<rect x="630" y="282.8" width="1" height="2.5" fill="#ff00ff"/>
<rect x="630" y="285.3" width="1" height="2.5" fill="#ff00ff"/>
<rect x="631" y="264.1" width="1" height="6.4" fill="#ff00ff"/>
<rect x="631" y="270.5" width="1" height="4.0" fill="#ff00ff"/>
<rect x="631" y="274.5" width="1" height="4.5" fill="#ff00ff"/>
<rect x="631" y="279.0" width="1" height="6.5" fill="#d000d8"/>
<rect x="632" y="262.7" width="1" height="5.7" fill="#ff00ff"/>
<rect x="632" y="268.4" width="1" height="2.5" fill="#ff00ff"/>
<rect x="632" y="270.9" width="1" height="4.4" fill="#ff00ff"/>
<rect x="632" y="275.3" width="1" height="6.5" fill="#ff00ff"/>
<rect x="632" y="281.8" width="1" height="3.2" fill="#ff00ff"/>
<rect x="632" y="285.0" width="1" height="1.0" fill="#ff00ff"/>
<rect x="633" y="262.2" width="1" height="4.1" fill="#ff00ff"/>
<rect x="633" y="266.4" width="1" height="2.2" fill="#ff00ff"/>
<rect x="633" y="268.6" width="1" height="5.1" fill="#ff00ff"/>
<rect x="633" y="273.7" width="1" height="4.5" fill="#ff00ff"/>
<rect x="633" y="278.2" width="1" height="3.6" fill="#ff00ff"/>
<rect x="634" y="258.5" width="1" height="3.6" fill="#ff00ff"/>
<rect x="634" y="262.1" width="1" height="4.2" fill="#ff00ff"/>
<rect x="634" y="266.3" width="1" height="5.8" fill="#ff00ff"/>
<rect x="634" y="272.1" width="1" height="4.8" fill="#ff00ff"/>
<rect x="634" y="276.8" width="1" height="3.7" fill="#ff00ff"/>
<rect x="634" y="280.5" width="1" height="1.0" fill="#ff00ff"/>
<rect x="635" y="257.2" width="1" height="4.8" fill="#ff00ff"/>
<rect x="635" y="262.0" width="1" height="4.3" fill="#ff00ff"/>
<rect x="635" y="266.3" width="1" height="4.7" fill="#d000d8"/>
<rect x="635" y="271.0" width="1" height="3.4" fill="#ff00ff"/>
<rect x="635" y="274.4" width="1" height="2.2" fill="#ff00ff"/>
<rect x="636" y="256.4" width="1" height="5.1" fill="#d000d8"/>
<rect x="636" y="261.5" width="1" height="5.9" fill="#ff00ff"/>
<rect x="636" y="267.4" width="1" height="6.2" fill="#d000d8"/>
<rect x="637" y="263.1" width="1" height="5.2" fill="#ff00ff"/>
<rect x="637" y="268.3" width="1" height="3.7" fill="#ff00ff"/>
<rect x="637" y="272.1" width="1" height="1.2" fill="#ff00ff"/>
<rect x="638" y="257.0" width="1" height="5.1" fill="#d000d8"/>
<rect x="638" y="262.1" width="1" height="2.0" fill="#ff00ff"/>
<rect x="638" y="264.1" width="1" height="2.5" fill="#ff00ff"/>
<rect x="638" y="266.6" width="1" height="6.3" fill="#ff00ff"/>
<rect x="639" y="256.9" width="1" height="3.8" fill="#ff00ff"/>
<rect x="639" y="260.7" width="1" height="3.5" fill="#ff00ff"/>
<rect x="639" y="264.2" width="1" height="4.6" fill="#ff00ff"/>
<rect x="640" y="253.1" width="1" height="6.9" fill="#ff00ff"/>
<rect x="640" y="263.4" width="1" height="4.5" fill="#ff00ff"/>
<rect x="641" y="254.3" width="1" height="3.9" fill="#ff00ff"/>
<rect x="641" y="258.2" width="1" height="3.5" fill="#ff00ff"/>
<rect x="641" y="261.7" width="1" height="5.5" fill="#ff00ff"/>
<rect x="641" y="267.1" width="1" height="1.0" fill="#ff00ff"/>
<rect x="642" y="255.6" width="1" height="5.3" fill="#ff00ff"/>
<rect x="642" y="261.0" width="1" height="3.0" fill="#ff00ff"/>
<rect x="642" y="264.0" width="1" height="2.1" fill="#ff00ff"/>
<rect x="642" y="266.1" width="1" height="1.0" fill="#ff00ff"/>
<rect x="643" y="251.5" width="1" height="4.4" fill="#ff00ff"/>
<rect x="643" y="255.9" width="1" height="2.4" fill="#ff00ff"/>
<rect x="644" y="254.1" width="1" height="8.1" fill="#ff00ff"/>
<rect x="645" y="254.1" width="1" height="7.9" fill="#ff00ff"/>
<rect x="645" y="259.3" width="1" height="2.9" fill="#a000a0"/>
<rect x="646" y="254.5" width="1" height="9.8" fill="#ff00ff"/>
<rect x="647" y="254.5" width="1" height="10.5" fill="#ff00ff"/>
<rect x="648" y="255.6" width="1" height="9.5" fill="#ff00ff"/>
<rect x="649" y="255.5" width="1" height="9.3" fill="#ff00ff"/>
<rect x="650" y="256.8" width="1" height="9.1" fill="#ff00ff"/>
<rect x="650" y="260.9" width="1" height="2.7" fill="#a000a0"/>
<rect x="651" y="257.1" width="1" height="9.5" fill="#ff00ff"/>
<rect x="652" y="258.2" width="1" height="8.7" fill="#ff00ff"/>
<rect x="653" y="259.5" width="1" height="7.9" fill="#ff00ff"/>
<rect x="654" y="259.6" width="1" height="11.0" fill="#ff00ff"/>
<rect x="654" y="263.1" width="1" height="1.6" fill="#a000a0"/>
<rect x="655" y="260.3" width="1" height="11.1" fill="#ff00ff"/>
<rect x="656" y="262.7" width="1" height="10.6" fill="#ff00ff"/>
<rect x="656" y="265.8" width="1" height="1.8" fill="#a000a0"/>
<rect x="657" y="264.5" width="1" height="9.9" fill="#ff00ff"/>
<rect x="658" y="266.2" width="1" height="9.2" fill="#ff00ff"/>
<rect x="659" y="267.7" width="1" height="9.3" fill="#ff00ff"/>
<rect x="660" y="269.5" width="1" height="9.9" fill="#ff00ff"/>
<rect x="660" y="269.8" width="1" height="2.4" fill="#a000a0"/>
<rect x="661" y="271.2" width="1" height="8.5" fill="#ff00ff"/>
<rect x="662" y="272.9" width="1" height="8.6" fill="#ff00ff"/>
<rect x="662" y="278.5" width="1" height="2.2" fill="#a000a0"/>
<rect x="663" y="273.4" width="1" height="11.8" fill="#ff00ff"/>
<rect x="664" y="277.0" width="1" height="10.3" fill="#ff00ff"/>
<rect x="664" y="284.2" width="1" height="2.1" fill="#a000a0"/>
<rect x="665" y="279.2" width="1" height="8.9" fill="#ff00ff"/>
<rect x="666" y="279.7" width="1" height="11.5" fill="#ff00ff"/>
<rect x="667" y="283.5" width="1" height="7.9" fill="#ff00ff"/>
<rect x="668" y="283.6" width="1" height="11.7" fill="#ff00ff"/>
<rect x="669" y="286.5" width="1" height="10.6" fill="#ff00ff"/>
<rect x="670" y="288.2" width="1" height="11.9" fill="#ff00ff"/>
<rect x="671" y="292.3" width="1" height="8.2" fill="#ff00ff"/>
<rect x="671" y="294.2" width="1" height="2.6" fill="#a000a0"/>
<rect x="672" y="292.8" width="1" height="10.0" fill="#ff00ff"/>
<rect x="673" y="296.0" width="1" height="11.1" fill="#ff00ff"/>
<rect x="674" y="298.1" width="1" height="11.2" fill="#ff00ff"/>
<rect x="675" y="301.7" width="1" height="9.7" fill="#ff00ff"/>
<rect x="675" y="306.3" width="1" height="1.8" fill="#a000a0"/>
<rect x="676" y="303.4" width="1" height="10.2" fill="#ff00ff"/>
<rect x="677" y="282.4" width="1" height="6.1" fill="#ff00ff"/>
<rect x="677" y="288.6" width="1" height="3.0" fill="#ff00ff"/>
<rect x="677" y="294.9" width="1" height="3.9" fill="#d000d8"/>
<rect x="677" y="298.8" width="1" height="6.8" fill="#ff00ff"/>
<rect x="677" y="305.7" width="1" height="3.8" fill="#ff00ff"/>
<rect x="678" y="276.7" width="1" height="5.4" fill="#ff00ff"/>
<rect x="678" y="282.2" width="1" height="2.9" fill="#ff00ff"/>
<rect x="678" y="285.0" width="1" height="4.1" fill="#ff00ff"/>
<rect x="678" y="289.2" width="1" height="5.9" fill="#ff00ff"/>
<rect x="678" y="295.1" width="1" height="3.8" fill="#ff00ff"/>
<rect x="678" y="298.9" width="1" height="6.8" fill="#ff00ff"/>
<rect x="679" y="273.8" width="1" height="4.5" fill="#ff00ff"/>
<rect x="679" y="278.4" width="1" height="3.9" fill="#ff00ff"/>
<rect x="679" y="282.2" width="1" height="4.0" fill="#ff00ff"/>
<rect x="679" y="290.6" width="1" height="4.7" fill="#ff00ff"/>
<rect x="679" y="295.3" width="1" height="2.9" fill="#ff00ff"/>
<rect x="679" y="298.2" width="1" height="4.6" fill="#ff00ff"/>
<rect x="679" y="302.8" width="1" height="2.2" fill="#ff00ff"/>
<rect x="680" y="270.3" width="1" height="2.2" fill="#ff00ff"/>
<rect x="680" y="272.6" width="1" height="3.3" fill="#ff00ff"/>
<rect x="680" y="275.8" width="1" height="4.3" fill="#ff00ff"/>
<rect x="680" y="280.1" width="1" height="6.8" fill="#ff00ff"/>
<rect x="680" y="287.0" width="1" height="5.1" fill="#ff00ff"/>
<rect x="680" y="292.1" width="1" height="2.6" fill="#ff00ff"/>
<rect x="680" y="294.6" width="1" height="3.0" fill="#ff00ff"/>
<rect x="680" y="297.6" width="1" height="2.9" fill="#ff00ff"/>
<rect x="681" y="268.5" width="1" height="6.9" fill="#ff00ff"/>
<rect x="681" y="275.4" width="1" height="4.3" fill="#ff00ff"/>
<rect x="681" y="279.7" width="1" height="4.9" fill="#ff00ff"/>
<rect x="681" y="289.5" width="1" height="4.2" fill="#ff00ff"/>
<rect x="681" y="293.7" width="1" height="3.6" fill="#ff00ff"/>
<rect x="682" y="263.9" width="1" height="3.1" fill="#ff00ff"/>
<rect x="682" y="267.0" width="1" height="4.7" fill="#d000d8"/>
<rect x="682" y="271.7" width="1" height="6.3" fill="#d000d8"/>
<rect x="682" y="278.0" width="1" height="5.1" fill="#ff00ff"/>
<rect x="682" y="283.1" width="1" height="3.5" fill="#ff00ff"/>
<rect x="682" y="286.5" width="1" height="4.2" fill="#d000d8"/>
<rect x="682" y="295.5" width="1" height="1.0" fill="#ff00ff"/>
<rect x="683" y="263.2" width="1" height="6.5" fill="#d000d8"/>
<rect x="683" y="269.8" width="1" height="2.9" fill="#d000d8"/>
<rect x="683" y="272.7" width="1" height="5.4" fill="#ff00ff"/>
<rect x="683" y="278.0" width="1" height="5.7" fill="#ff00ff"/>
<rect x="683" y="283.8" width="1" height="5.5" fill="#ff00ff"/>
<rect x="684" y="262.7" width="1" height="3.9" fill="#ff00ff"/>
<rect x="684" y="266.6" width="1" height="5.3" fill="#ff00ff"/>
<rect x="684" y="271.9" width="1" height="4.5" fill="#ff00ff"/>
<rect x="684" y="276.5" width="1" height="5.2" fill="#ff00ff"/>
<rect x="684" y="281.7" width="1" height="3.5" fill="#ff00ff"/>
<rect x="684" y="285.2" width="1" height="3.4" fill="#ff00ff"/>
<rect x="684" y="288.6" width="1" height="1.0" fill="#ff00ff"/>
<rect x="685" y="260.1" width="1" height="4.0" fill="#ff00ff"/>
<rect x="685" y="264.0" width="1" height="5.3" fill="#ff00ff"/>
<rect x="685" y="275.0" width="1" height="6.4" fill="#ff00ff"/>
<rect x="685" y="281.4" width="1" height="6.1" fill="#ff00ff"/>
<rect x="686" y="256.5" width="1" height="3.7" fill="#ff00ff"/>
<rect x="686" y="260.2" width="1" height="5.0" fill="#ff00ff"/>
<rect x="686" y="265.3" width="1" height="4.7" fill="#ff00ff"/>
<rect x="686" y="270.0" width="1" height="5.1" fill="#ff00ff"/>
<rect x="686" y="275.0" width="1" height="5.6" fill="#ff00ff"/>
<rect x="686" y="280.7" width="1" height="3.6" fill="#ff00ff"/>
<rect x="687" y="257.2" width="1" height="2.4" fill="#ff00ff"/>
<rect x="687" y="259.6" width="1" height="5.4" fill="#ff00ff"/>
<rect x="687" y="265.0" width="1" height="6.8" fill="#ff00ff"/>
<rect x="687" y="271.8" width="1" height="4.5" fill="#ff00ff"/>
<rect x="687" y="276.2" width="1" height="3.1" fill="#ff00ff"/>
<rect x="688" y="254.3" width="1" height="3.8" fill="#ff00ff"/>
<rect x="688" y="258.1" width="1" height="2.7" fill="#d000d8"/>
<rect x="688" y="260.8" width="1" height="4.2" fill="#ff00ff"/>
<rect x="688" y="268.2" width="1" height="2.5" fill="#ff00ff"/>
<rect x="688" y="270.7" width="1" height="2.3" fill="#ff00ff"/>
<rect x="688" y="276.7" width="1" height="2.8" fill="#d000d8"/>
<rect x="689" y="252.2" width="1" height="6.9" fill="#ff00ff"/>
<rect x="689" y="259.1" width="1" height="2.2" fill="#ff00ff"/>
<rect x="689" y="261.3" width="1" height="3.8" fill="#ff00ff"/>
<rect x="689" y="265.1" width="1" height="3.9" fill="#ff00ff"/>
<rect x="689" y="269.0" width="1" height="4.4" fill="#ff00ff"/>
<rect x="689" y="273.4" width="1" height="1.7" fill="#ff00ff"/>
<rect x="690" y="253.2" width="1" height="5.7" fill="#ff00ff"/>
<rect x="690" y="262.0" width="1" height="2.6" fill="#ff00ff"/>
<rect x="690" y="264.6" width="1" height="4.1" fill="#ff00ff"/>
<rect x="690" y="268.7" width="1" height="3.1" fill="#d000d8"/>
<rect x="690" y="271.7" width="1" height="2.7" fill="#ff00ff"/>
<rect x="691" y="252.2" width="1" height="4.2" fill="#ff00ff"/>
<rect x="691" y="256.4" width="1" height="4.7" fill="#ff00ff"/>
<rect x="691" y="267.4" width="1" height="2.5" fill="#ff00ff"/>
<rect x="692" y="251.4" width="1" height="6.7" fill="#ff00ff"/>
<rect x="692" y="258.1" width="1" height="6.3" fill="#ff00ff"/>
<rect x="692" y="264.5" width="1" height="3.9" fill="#ff00ff"/>
<rect x="692" y="268.4" width="1" height="1.0" fill="#ff00ff"/>
<rect x="693" y="251.2" width="1" height="4.1" fill="#ff00ff"/>
<rect x="693" y="255.2" width="1" height="4.6" fill="#ff00ff"/>
<rect x="693" y="259.8" width="1" height="6.5" fill="#d000d8"/>
<rect x="693" y="266.3" width="1" height="2.1" fill="#ff00ff"/>
<rect x="694" y="249.9" width="1" height="4.5" fill="#ff00ff"/>
<rect x="694" y="254.4" width="1" height="4.5" fill="#ff00ff"/>
<rect x="694" y="258.9" width="1" height="3.7" fill="#ff00ff"/>
<rect x="695" y="248.9" width="1" height="3.4" fill="#ff00ff"/>
<rect x="695" y="252.3" width="1" height="3.2" fill="#ff00ff"/>
<rect x="695" y="255.5" width="1" height="4.1" fill="#ff00ff"/>
<rect x="696" y="246.0" width="1" height="4.6" fill="#ff00ff"/>
<rect x="696" y="250.6" width="1" height="5.2" fill="#ff00ff"/>
<rect x="696" y="255.8" width="1" height="3.7" fill="#ff00ff"/>
<rect x="697" y="245.6" width="1" height="3.6" fill="#ff00ff"/>
<rect x="697" y="249.2" width="1" height="2.5" fill="#ff00ff"/>
<rect x="697" y="251.7" width="1" height="5.7" fill="#ff00ff"/>
<rect x="697" y="257.4" width="1" height="3.3" fill="#d000d8"/>
<rect x="698" y="243.9" width="1" height="4.9" fill="#ff00ff"/>
<rect x="698" y="248.8" width="1" height="6.0" fill="#ff00ff"/>
<rect x="698" y="254.7" width="1" height="1.0" fill="#ff00ff"/>
<rect x="699" y="245.5" width="1" height="9.7" fill="#ff00ff"/>
<rect x="700" y="245.3" width="1" height="10.9" fill="#ff00ff"/>
<rect x="700" y="248.9" width="1" height="1.6" fill="#a000a0"/>
<rect x="701" y="244.9" width="1" height="11.2" fill="#ff00ff"/>
<rect x="702" y="245.0" width="1" height="11.4" fill="#ff00ff"/>
<rect x="703" y="245.4" width="1" height="9.9" fill="#ff00ff"/>
<rect x="704" y="248.1" width="1" height="9.2" fill="#ff00ff"/>
<rect x="705" y="247.7" width="1" height="10.4" fill="#ff00ff"/>
<rect x="706" y="249.1" width="1" height="10.4" fill="#ff00ff"/>
<rect x="707" y="250.9" width="1" height="9.7" fill="#ff00ff"/>
<rect x="708" y="250.7" width="1" height="10.0" fill="#ff00ff"/>
<rect x="709" y="252.8" width="1" height="8.6" fill="#ff00ff"/>
<rect x="710" y="253.7" width="1" height="10.4" fill="#ff00ff"/>
<rect x="711" y="256.4" width="1" height="9.0" fill="#ff00ff"/>
<rect x="712" y="256.5" width="1" height="11.5" fill="#ff00ff"/>
<rect x="713" y="259.0" width="1" height="9.7" fill="#ff00ff"/>
<rect x="714" y="260.9" width="1" height="9.9" fill="#ff00ff"/>
<rect x="715" y="262.6" width="1" height="9.6" fill="#ff00ff"/>
<rect x="716" y="264.2" width="1" height="9.6" fill="#ff00ff"/>
<rect x="717" y="265.8" width="1" height="11.5" fill="#ff00ff"/>
<rect x="717" y="276.3" width="1" height="1.6" fill="#a000a0"/>
<rect x="718" y="268.7" width="1" height="10.7" fill="#ff00ff"/>
<rect x="719" y="272.1" width="1" height="9.0" fill="#ff00ff"/>
<rect x="720" y="272.9" width="1" height="10.0" fill="#ff00ff"/>
<rect x="721" y="276.9" width="1" height="9.0" fill="#ff00ff"/>
<rect x="722" y="278.7" width="1" height="10.4" fill="#ff00ff"/>
<rect x="723" y="281.8" width="1" height="10.3" fill="#ff00ff"/>
<rect x="724" y="283.8" width="1" height="10.8" fill="#ff00ff"/>
<rect x="725" y="288.1" width="1" height="9.1" fill="#ff00ff"/>
<rect x="726" y="291.0" width="1" height="8.8" fill="#ff00ff"/>
<rect x="727" y="294.0" width="1" height="9.1" fill="#ff00ff"/>
<rect x="728" y="296.4" width="1" height="9.6" fill="#ff00ff"/>
<rect x="729" y="299.1" width="1" height="9.0" fill="#ff00ff"/>
<rect x="730" y="300.5" width="1" height="11.7" fill="#ff00ff"/>
<rect x="731" y="305.2" width="1" height="10.6" fill="#ff00ff"/>
<rect x="732" y="306.7" width="1" height="10.5" fill="#ff00ff"/>
<rect x="733" y="309.7" width="1" height="11.8" fill="#ff00ff"/>
<rect x="734" y="312.9" width="1" height="10.1" fill="#ff00ff"/>
<rect x="735" y="293.9" width="1" height="4.6" fill="#ff00ff"/>
<rect x="735" y="298.6" width="1" height="6.3" fill="#ff00ff"/>
<rect x="735" y="304.9" width="1" height="2.1" fill="#ff00ff"/>
<rect x="735" y="306.9" width="1" height="2.1" fill="#d000d8"/>
<rect x="735" y="309.0" width="1" height="6.4" fill="#ff00ff"/>
<rect x="735" y="317.4" width="1" height="1.0" fill="#ff00ff"/>
<rect x="736" y="288.9" width="1" height="2.6" fill="#ff00ff"/>
<rect x="736" y="291.5" width="1" height="5.7" fill="#ff00ff"/>
<rect x="736" y="301.0" width="1" height="4.0" fill="#ff00ff"/>
<rect x="736" y="305.1" width="1" height="5.3" fill="#ff00ff"/>
<rect x="736" y="310.3" width="1" height="5.9" fill="#ff00ff"/>
<rect x="736" y="316.3" width="1" height="1.6" fill="#d000d8"/>
<rect x="737" y="282.9" width="1" height="4.2" fill="#ff00ff"/>
<rect x="737" y="287.1" width="1" height="6.6" fill="#ff00ff"/>
<rect x="737" y="293.7" width="1" height="5.1" fill="#ff00ff"/>
<rect x="737" y="305.5" width="1" height="5.4" fill="#ff00ff"/>
<rect x="737" y="310.9" width="1" height="4.1" fill="#ff00ff"/>
<rect x="738" y="281.2" width="1" height="2.8" fill="#d000d8"/>
<rect x="738" y="284.0" width="1" height="5.0" fill="#ff00ff"/>
<rect x="738" y="289.0" width="1" height="5.7" fill="#ff00ff"/>
<rect x="738" y="294.7" width="1" height="4.7" fill="#ff00ff"/>
<rect x="738" y="299.5" width="1" height="5.3" fill="#ff00ff"/>
<rect x="738" y="304.7" width="1" height="5.9" fill="#ff00ff"/>
<rect x="738" y="310.7" width="1" height="1.0" fill="#ff00ff"/>
<rect x="739" y="277.1" width="1" height="2.1" fill="#ff00ff"/>
<rect x="739" y="279.2" width="1" height="3.9" fill="#d000d8"/>
<rect x="739" y="285.3" width="1" height="2.5" fill="#d000d8"/>
<rect x="739" y="287.8" width="1" height="3.8" fill="#ff00ff"/>
<rect x="739" y="291.6" width="1" height="5.1" fill="#ff00ff"/>
<rect x="739" y="296.6" width="1" height="2.1" fill="#ff00ff"/>
<rect x="739" y="298.7" width="1" height="5.4" fill="#ff00ff"/>
<rect x="739" y="304.1" width="1" height="4.2" fill="#ff00ff"/>
<rect x="740" y="278.0" width="1" height="4.6" fill="#ff00ff"/>
<rect x="740" y="282.5" width="1" height="4.1" fill="#d000d8"/>
<rect x="740" y="286.6" width="1" height="3.3" fill="#ff00ff"/>
<rect x="740" y="289.9" width="1" height="6.5" fill="#ff00ff"/>
<rect x="740" y="296.4" width="1" height="6.1" fill="#ff00ff"/>
<rect x="740" y="302.5" width="1" height="3.7" fill="#ff00ff"/>
<rect x="740" y="306.2" width="1" height="1.0" fill="#ff00ff"/>
<rect x="741" y="277.0" width="1" height="6.2" fill="#ff00ff"/>
<rect x="741" y="283.3" width="1" height="5.5" fill="#ff00ff"/>
<rect x="741" y="288.8" width="1" height="5.7" fill="#ff00ff"/>
<rect x="741" y="294.6" width="1" height="5.4" fill="#d000d8"/>
<rect x="741" y="299.9" width="1" height="3.1" fill="#ff00ff"/>
<rect x="742" y="274.2" width="1" height="5.9" fill="#ff00ff"/>
<rect x="742" y="280.0" width="1" height="2.6" fill="#ff00ff"/>
<rect x="742" y="282.6" width="1" height="5.8" fill="#ff00ff"/>
<rect x="742" y="288.4" width="1" height="4.3" fill="#d000d8"/>
<rect x="742" y="292.7" width="1" height="2.1" fill="#d000d8"/>
<rect x="742" y="294.8" width="1" height="3.8" fill="#ff00ff"/>
<rect x="742" y="298.5" width="1" height="4.4" fill="#ff00ff"/>
<rect x="743" y="271.0" width="1" height="4.1" fill="#d000d8"/>
<rect x="743" y="275.1" width="1" height="7.0" fill="#ff00ff"/>
<rect x="743" y="282.1" width="1" height="5.5" fill="#ff00ff"/>
<rect x="743" y="287.6" width="1" height="6.6" fill="#ff00ff"/>
<rect x="743" y="294.2" width="1" height="2.7" fill="#d000d8"/>
<rect x="743" y="296.9" width="1" height="2.1" fill="#ff00ff"/>
<rect x="743" y="299.0" width="1" height="1.0" fill="#d000d8"/>
<rect x="744" y="271.0" width="1" height="2.3" fill="#ff00ff"/>
<rect x="744" y="273.3" width="1" height="4.8" fill="#ff00ff"/>
<rect x="744" y="278.1" width="1" height="4.9" fill="#ff00ff"/>
<rect x="744" y="283.0" width="1" height="3.8" fill="#d000d8"/>
<rect x="744" y="286.8" width="1" height="3.4" fill="#ff00ff"/>
<rect x="744" y="293.1" width="1" height="4.1" fill="#ff00ff"/>
<rect x="745" y="268.5" width="1" height="6.4" fill="#d000d8"/>
<rect x="745" y="274.9" width="1" height="6.8" fill="#d000d8"/>
<rect x="745" y="281.7" width="1" height="5.4" fill="#ff00ff"/>
<rect x="745" y="287.1" width="1" height="6.7" fill="#ff00ff"/>
<rect x="745" y="293.8" width="1" height="2.1" fill="#ff00ff"/>
<rect x="746" y="266.1" width="1" height="3.3" fill="#d000d8"/>
<rect x="746" y="269.4" width="1" height="2.9" fill="#ff00ff"/>
<rect x="746" y="272.3" width="1" height="4.2" fill="#ff00ff"/>
<rect x="746" y="276.5" width="1" height="3.4" fill="#ff00ff"/>
<rect x="746" y="279.9" width="1" height="5.9" fill="#ff00ff"/>
<rect x="746" y="285.8" width="1" height="6.7" fill="#ff00ff"/>
<rect x="746" y="292.4" width="1" height="2.9" fill="#ff00ff"/>
<rect x="747" y="266.1" width="1" height="5.8" fill="#ff00ff"/>
<rect x="747" y="271.9" width="1" height="4.7" fill="#ff00ff"/>
<rect x="747" y="276.5" width="1" height="3.6" fill="#ff00ff"/>
<rect x="747" y="284.4" width="1" height="5.7" fill="#ff00ff"/>
<rect x="747" y="290.1" width="1" height="1.0" fill="#ff00ff"/>
<rect x="748" y="264.5" width="1" height="5.9" fill="#ff00ff"/>
<rect x="748" y="270.3" width="1" height="4.5" fill="#ff00ff"/>
<rect x="748" y="278.5" width="1" height="5.7" fill="#d000d8"/>
<rect x="748" y="284.2" width="1" height="4.7" fill="#d000d8"/>
<rect x="749" y="264.5" width="1" height="3.6" fill="#ff00ff"/>
<rect x="749" y="268.0" width="1" height="4.8" fill="#ff00ff"/>
<rect x="749" y="272.8" width="1" height="6.2" fill="#d000d8"/>
<rect x="749" y="279.1" width="1" height="2.9" fill="#ff00ff"/>
<rect x="749" y="282.0" width="1" height="4.6" fill="#ff00ff"/>
<rect x="749" y="286.6" width="1" height="2.6" fill="#d000d8"/>
<rect x="749" y="289.2" width="1" height="1.7" fill="#ff00ff"/>
<rect x="750" y="264.0" width="1" height="3.6" fill="#ff00ff"/>
<rect x="750" y="267.6" width="1" height="2.4" fill="#ff00ff"/>
<rect x="750" y="270.0" width="1" height="3.8" fill="#ff00ff"/>
<rect x="750" y="273.8" width="1" height="2.3" fill="#ff00ff"/>
<rect x="750" y="276.2" width="1" height="6.8" fill="#ff00ff"/>
<rect x="750" y="282.9" width="1" height="1.6" fill="#ff00ff"/>
<rect x="751" y="262.2" width="1" height="2.9" fill="#ff00ff"/>
<rect x="751" y="265.1" width="1" height="6.7" fill="#ff00ff"/>
<rect x="751" y="271.7" width="1" height="6.8" fill="#d000d8"/>
<rect x="751" y="278.5" width="1" height="4.7" fill="#ff00ff"/>
<rect x="751" y="283.2" width="1" height="1.5" fill="#ff00ff"/>
<rect x="752" y="260.1" width="1" height="6.1" fill="#ff00ff"/>
<rect x="752" y="266.2" width="1" height="2.2" fill="#d000d8"/>
<rect x="752" y="268.4" width="1" height="2.2" fill="#ff00ff"/>
<rect x="752" y="270.7" width="1" height="2.9" fill="#ff00ff"/>
<rect x="752" y="273.5" width="1" height="3.2" fill="#ff00ff"/>
<rect x="752" y="276.7" width="1" height="5.6" fill="#d000d8"/>
<rect x="752" y="282.3" width="1" height="1.0" fill="#ff00ff"/>
<rect x="753" y="259.1" width="1" height="2.6" fill="#ff00ff"/>
<rect x="753" y="261.8" width="1" height="3.5" fill="#ff00ff"/>
<rect x="753" y="265.2" width="1" height="6.3" fill="#ff00ff"/>
<rect x="753" y="271.5" width="1" height="4.4" fill="#ff00ff"/>
<rect x="753" y="275.9" width="1" height="2.9" fill="#ff00ff"/>
<rect x="753" y="278.8" width="1" height="1.0" fill="#ff00ff"/>
<rect x="754" y="261.8" width="1" height="3.5" fill="#ff00ff"/>
<rect x="754" y="265.3" width="1" height="4.5" fill="#ff00ff"/>
<rect x="754" y="269.9" width="1" height="5.2" fill="#ff00ff"/>
<rect x="755" y="261.1" width="1" height="5.4" fill="#ff00ff"/>
<rect x="755" y="266.6" width="1" height="3.0" fill="#ff00ff"/>
<rect x="755" y="269.5" width="1" height="6.2" fill="#ff00ff"/>
<rect x="755" y="275.7" width="1" height="2.1" fill="#ff00ff"/>
<rect x="755" y="277.8" width="1" height="1.1" fill="#ff00ff"/>
<rect x="756" y="260.2" width="1" height="6.1" fill="#ff00ff"/>
<rect x="756" y="266.3" width="1" height="6.0" fill="#ff00ff"/>
<rect x="756" y="272.3" width="1" height="1.8" fill="#ff00ff"/>
<rect x="757" y="258.6" width="1" height="5.4" fill="#ff00ff"/>
<rect x="757" y="264.0" width="1" height="3.2" fill="#ff00ff"/>
<rect x="757" y="267.2" width="1" height="2.8" fill="#ff00ff"/>
<rect x="757" y="270.0" width="1" height="2.4" fill="#ff00ff"/>
<rect x="758" y="255.7" width="1" height="6.9" fill="#ff00ff"/>
<rect x="758" y="262.6" width="1" height="4.5" fill="#ff00ff"/>
<rect x="758" y="267.1" width="1" height="3.3" fill="#ff00ff"/>
<rect x="758" y="270.4" width="1" height="1.0" fill="#ff00ff"/>
<rect x="759" y="255.0" width="1" height="5.7" fill="#ff00ff"/>
<rect x="759" y="260.7" width="1" height="3.5" fill="#ff00ff"/>
<rect x="759" y="264.2" width="1" height="3.4" fill="#ff00ff"/>
<rect x="759" y="267.6" width="1" height="1.0" fill="#ff00ff"/>
<rect x="760" y="254.2" width="1" height="3.4" fill="#ff00ff"/>
<rect x="760" y="257.6" width="1" height="2.9" fill="#ff00ff"/>
<rect x="760" y="260.5" width="1" height="2.3" fill="#d000d8"/>
<rect x="760" y="262.8" width="1" height="4.7" fill="#ff00ff"/>
<rect x="760" y="267.5" width="1" height="1.7" fill="#ff00ff"/>
<rect x="761" y="253.8" width="1" height="2.0" fill="#ff00ff"/>
<rect x="761" y="255.8" width="1" height="4.9" fill="#ff00ff"/>
<rect x="761" y="260.7" width="1" height="6.9" fill="#ff00ff"/>
<rect x="761" y="267.6" width="1" height="1.0" fill="#ff00ff"/>
<rect x="762" y="252.4" width="1" height="6.2" fill="#ff00ff"/>
<rect x="762" y="258.5" width="1" height="2.1" fill="#ff00ff"/>
<rect x="762" y="260.7" width="1" height="5.4" fill="#d000d8"/>
<rect x="763" y="253.5" width="1" height="11.6" fill="#ff00ff"/>
<rect x="764" y="253.2" width="1" height="11.9" fill="#ff00ff"/>
<rect x="764" y="257.1" width="1" height="1.4" fill="#a000a0"/>
<rect x="765" y="253.8" width="1" height="10.7" fill="#ff00ff"/>
<rect x="765" y="264.1" width="1" height="1.4" fill="#a000a0"/>
<rect x="766" y="255.3" width="1" height="9.2" fill="#ff00ff"/>
<rect x="767" y="255.6" width="1" height="9.8" fill="#ff00ff"/>
<rect x="768" y="256.2" width="1" height="9.7" fill="#ff00ff"/>
<rect x="768" y="264.0" width="1" height="2.3" fill="#a000a0"/>
<rect x="769" y="256.8" width="1" height="11.3" fill="#ff00ff"/>
<rect x="770" y="258.4" width="1" height="8.6" fill="#ff00ff"/>
<rect x="771" y="259.2" width="1" height="9.1" fill="#ff00ff"/>
<rect x="772" y="261.2" width="1" height="9.2" fill="#ff00ff"/>
<rect x="773" y="260.8" width="1" height="11.2" fill="#ff00ff"/>
<rect x="774" y="262.6" width="1" height="10.3" fill="#ff00ff"/>
<rect x="775" y="263.6" width="1" height="9.5" fill="#ff00ff"/>
<rect x="775" y="268.6" width="1" height="2.3" fill="#a000a0"/>
<rect x="776" y="266.7" width="1" height="8.6" fill="#ff00ff"/>
<rect x="776" y="270.3" width="1" height="1.3" fill="#a000a0"/>
<rect x="777" y="267.0" width="1" height="10.6" fill="#ff00ff"/>
<rect x="778" y="268.5" width="1" height="10.2" fill="#ff00ff"/>
<rect x="779" y="271.4" width="1" height="9.2" fill="#ff00ff"/>
<rect x="780" y="273.5" width="1" height="11.0" fill="#ff00ff"/>
<rect x="781" y="275.7" width="1" height="8.7" fill="#ff00ff"/>
<rect x="782" y="277.0" width="1" height="10.0" fill="#ff00ff"/>
<rect x="782" y="283.9" width="1" height="2.3" fill="#a000a0"/>
<rect x="783" y="279.3" width="1" height="9.9" fill="#ff00ff"/>
<rect x="784" y="282.2" width="1" height="10.3" fill="#ff00ff"/>
<rect x="785" y="285.5" width="1" height="9.5" fill="#ff00ff"/>
<rect x="786" y="285.9" width="1" height="10.8" fill="#ff00ff"/>
<rect x="786" y="288.2" width="1" height="2.6" fill="#a000a0"/>
<rect x="787" y="288.4" width="1" height="10.2" fill="#ff00ff"/>
<rect x="788" y="293.0" width="1" height="8.1" fill="#ff00ff"/>
<rect x="789" y="294.5" width="1" height="8.8" fill="#ff00ff"/>
<rect x="790" y="295.9" width="1" height="10.6" fill="#ff00ff"/>
<rect x="791" y="300.7" width="1" height="8.7" fill="#ff00ff"/>
<rect x="792" y="301.7" width="1" height="9.9" fill="#ff00ff"/>
<rect x="792" y="304.9" width="1" height="2.4" fill="#a000a0"/>
<rect x="793" y="304.4" width="1" height="9.7" fill="#ff00ff"/>
<rect x="793" y="312.0" width="1" height="1.6" fill="#a000a0"/>
<rect x="794" y="281.7" width="1" height="6.8" fill="#ff00ff"/>
<rect x="794" y="288.5" width="1" height="2.3" fill="#d000d8"/>
<rect x="794" y="290.9" width="1" height="5.8" fill="#ff00ff"/>
<rect x="794" y="296.7" width="1" height="3.4" fill="#d000d8"/>
<rect x="794" y="300.1" width="1" height="4.4" fill="#ff00ff"/>
<rect x="794" y="304.5" width="1" height="6.9" fill="#ff00ff"/>
<rect x="794" y="311.4" width="1" height="1.4" fill="#ff00ff"/>
<rect x="795" y="278.7" width="1" height="2.1" fill="#ff00ff"/>
<rect x="795" y="280.8" width="1" height="3.1" fill="#ff00ff"/>
<rect x="795" y="283.8" width="1" height="6.8" fill="#ff00ff"/>
<rect x="795" y="290.6" width="1" height="5.3" fill="#ff00ff"/>
<rect x="795" y="296.0" width="1" height="2.1" fill="#d000d8"/>
<rect x="795" y="298.1" width="1" height="3.6" fill="#ff00ff"/>
<rect x="795" y="301.7" width="1" height="6.0" fill="#ff00ff"/>
<rect x="795" y="307.6" width="1" height="1.0" fill="#ff00ff"/>
<rect x="796" y="273.2" width="1" height="6.1" fill="#ff00ff"/>
<rect x="796" y="279.4" width="1" height="5.2" fill="#ff00ff"/>
<rect x="796" y="284.6" width="1" height="6.9" fill="#d000d8"/>
<rect x="796" y="291.5" width="1" height="5.6" fill="#ff00ff"/>
<rect x="796" y="299.1" width="1" height="2.3" fill="#ff00ff"/>
<rect x="797" y="269.4" width="1" height="2.1" fill="#ff00ff"/>
<rect x="797" y="271.5" width="1" height="3.8" fill="#ff00ff"/>
<rect x="797" y="275.3" width="1" height="3.3" fill="#d000d8"/>
<rect x="797" y="285.7" width="1" height="3.0" fill="#ff00ff"/>
<rect x="797" y="288.7" width="1" height="2.8" fill="#ff00ff"/>
<rect x="797" y="291.5" width="1" height="4.5" fill="#ff00ff"/>
<rect x="797" y="296.0" width="1" height="3.8" fill="#ff00ff"/>
<rect x="798" y="268.3" width="1" height="5.1" fill="#ff00ff"/>
<rect x="798" y="273.4" width="1" height="2.6" fill="#d000d8"/>
<rect x="798" y="276.0" width="1" height="6.8" fill="#ff00ff"/>
<rect x="798" y="282.8" width="1" height="5.3" fill="#ff00ff"/>
<rect x="798" y="288.2" width="1" height="6.3" fill="#ff00ff"/>
<rect x="798" y="294.5" width="1" height="3.0" fill="#ff00ff"/>
<rect x="798" y="297.5" width="1" height="2.1" fill="#ff00ff"/>
<rect x="799" y="265.6" width="1" height="5.2" fill="#ff00ff"/>
<rect x="799" y="270.8" width="1" height="4.2" fill="#ff00ff"/>
<rect x="799" y="275.0" width="1" height="6.8" fill="#ff00ff"/>
<rect x="799" y="281.8" width="1" height="5.9" fill="#ff00ff"/>
<rect x="799" y="287.7" width="1" height="2.9" fill="#ff00ff"/>
<rect x="799" y="290.6" width="1" height="2.4" fill="#d000d8"/>
<rect x="799" y="293.0" width="1" height="1.0" fill="#ff00ff"/>
<rect x="800" y="263.7" width="1" height="6.9" fill="#ff00ff"/>
<rect x="800" y="270.6" width="1" height="3.8" fill="#d000d8"/>
<rect x="800" y="274.4" width="1" height="3.3" fill="#d000d8"/>
<rect x="800" y="277.8" width="1" height="3.8" fill="#ff00ff"/>
<rect x="800" y="281.6" width="1" height="6.2" fill="#ff00ff"/>
<rect x="800" y="287.8" width="1" height="2.9" fill="#ff00ff"/>
<rect x="800" y="290.7" width="1" height="3.0" fill="#ff00ff"/>
<rect x="801" y="261.3" width="1" height="5.6" fill="#ff00ff"/>
<rect x="801" y="266.9" width="1" height="3.9" fill="#ff00ff"/>
<rect x="801" y="270.8" width="1" height="5.1" fill="#ff00ff"/>
<rect x="801" y="275.9" width="1" height="5.9" fill="#ff00ff"/>
<rect x="801" y="281.9" width="1" height="5.8" fill="#ff00ff"/>
<rect x="801" y="287.7" width="1" height="3.5" fill="#d000d8"/>
<rect x="802" y="258.9" width="1" height="3.1" fill="#ff00ff"/>
<rect x="802" y="261.9" width="1" height="6.9" fill="#d000d8"/>
<rect x="802" y="268.8" width="1" height="2.1" fill="#ff00ff"/>
<rect x="802" y="270.9" width="1" height="4.8" fill="#ff00ff"/>
<rect x="802" y="275.7" width="1" height="4.8" fill="#d000d8"/>
<rect x="802" y="280.5" width="1" height="5.3" fill="#ff00ff"/>
<rect x="803" y="259.8" width="1" height="4.4" fill="#ff00ff"/>
<rect x="803" y="264.2" width="1" height="3.2" fill="#ff00ff"/>
<rect x="803" y="267.4" width="1" height="3.4" fill="#ff00ff"/>
<rect x="803" y="270.8" width="1" height="3.3" fill="#ff00ff"/>
<rect x="803" y="274.0" width="1" height="2.6" fill="#ff00ff"/>
<rect x="803" y="276.6" width="1" height="6.6" fill="#ff00ff"/>
<rect x="803" y="283.2" width="1" height="2.0" fill="#ff00ff"/>
<rect x="804" y="258.5" width="1" height="5.9" fill="#ff00ff"/>
<rect x="804" y="264.4" width="1" height="3.4" fill="#ff00ff"/>
<rect x="804" y="267.8" width="1" height="4.3" fill="#ff00ff"/>
<rect x="804" y="272.1" width="1" height="4.9" fill="#ff00ff"/>
<rect x="804" y="277.0" width="1" height="2.3" fill="#ff00ff"/>
<rect x="804" y="279.3" width="1" height="1.2" fill="#ff00ff"/>
<rect x="805" y="254.9" width="1" height="2.6" fill="#ff00ff"/>
<rect x="805" y="257.5" width="1" height="2.3" fill="#ff00ff"/>
<rect x="805" y="259.8" width="1" height="6.8" fill="#ff00ff"/>
<rect x="805" y="266.6" width="1" height="3.0" fill="#ff00ff"/>
<rect x="805" y="269.6" width="1" height="4.5" fill="#ff00ff"/>
<rect x="805" y="274.1" width="1" height="4.5" fill="#ff00ff"/>
<rect x="806" y="256.4" width="1" height="4.4" fill="#ff00ff"/>
<rect x="806" y="260.8" width="1" height="4.4" fill="#ff00ff"/>
<rect x="806" y="265.2" width="1" height="3.8" fill="#ff00ff"/>
<rect x="806" y="269.0" width="1" height="3.5" fill="#ff00ff"/>
<rect x="806" y="272.6" width="1" height="2.1" fill="#ff00ff"/>
<rect x="806" y="274.7" width="1" height="1.3" fill="#ff00ff"/>
<rect x="807" y="252.9" width="1" height="6.4" fill="#d000d8"/>
<rect x="807" y="259.3" width="1" height="4.2" fill="#ff00ff"/>
<rect x="807" y="263.5" width="1" height="6.2" fill="#ff00ff"/>
<rect x="807" y="269.7" width="1" height="3.9" fill="#ff00ff"/>
<rect x="807" y="273.6" width="1" height="4.4" fill="#ff00ff"/>
<rect x="808" y="253.4" width="1" height="6.2" fill="#ff00ff"/>
<rect x="808" y="259.6" width="1" height="4.7" fill="#ff00ff"/>
<rect x="808" y="264.3" width="1" height="6.0" fill="#ff00ff"/>
<rect x="809" y="250.1" width="1" height="4.1" fill="#d000d8"/>
<rect x="809" y="254.2" width="1" height="6.3" fill="#ff00ff"/>
<rect x="809" y="260.5" width="1" height="3.8" fill="#ff00ff"/>
<rect x="809" y="264.3" width="1" height="5.3" fill="#ff00ff"/>
<rect x="809" y="269.6" width="1" height="2.0" fill="#ff00ff"/>
<rect x="810" y="250.3" width="1" height="4.4" fill="#ff00ff"/>
<rect x="810" y="254.7" width="1" height="5.6" fill="#d000d8"/>
<rect x="810" y="263.4" width="1" height="3.4" fill="#ff00ff"/>
<rect x="811" y="249.9" width="1" height="2.9" fill="#ff00ff"/>
<rect x="811" y="252.8" width="1" height="4.7" fill="#d000d8"/>
<rect x="811" y="261.2" width="1" height="4.4" fill="#ff00ff"/>
<rect x="812" y="245.8" width="1" height="4.5" fill="#ff00ff"/>
<rect x="812" y="250.3" width="1" height="6.3" fill="#ff00ff"/>
<rect x="812" y="256.6" width="1" height="2.1" fill="#d000d8"/>
<rect x="812" y="258.6" width="1" height="6.7" fill="#ff00ff"/>
<rect x="812" y="265.3" width="1" height="2.1" fill="#ff00ff"/>
<rect x="813" y="248.5" width="1" height="6.9" fill="#ff00ff"/>
<rect x="813" y="255.4" width="1" height="3.8" fill="#ff00ff"/>
<rect x="813" y="259.2" width="1" height="4.2" fill="#d000d8"/>
<rect x="814" y="246.0" width="1" height="3.1" fill="#ff00ff"/>
<rect x="814" y="249.1" width="1" height="3.2" fill="#ff00ff"/>
<rect x="814" y="256.6" width="1" height="3.4" fill="#ff00ff"/>
<rect x="815" y="244.0" width="1" height="4.1" fill="#ff00ff"/>
<rect x="815" y="248.0" width="1" height="2.5" fill="#ff00ff"/>
<rect x="815" y="250.5" width="1" height="3.2" fill="#ff00ff"/>
<rect x="815" y="253.7" width="1" height="3.9" fill="#ff00ff"/>
<rect x="816" y="250.2" width="1" height="6.9" fill="#ff00ff"/>
<rect x="816" y="257.0" width="1" height="1.0" fill="#ff00ff"/>
<rect x="817" y="241.9" width="1" height="2.6" fill="#ff00ff"/>
<rect x="817" y="244.5" width="1" height="3.2" fill="#d000d8"/>
<rect x="817" y="247.7" width="1" height="5.6" fill="#ff00ff"/>
<rect x="818" y="243.1" width="1" height="10.5" fill="#ff00ff"/>
<rect x="819" y="242.1" width="1" height="10.9" fill="#ff00ff"/>
<rect x="820" y="243.4" width="1" height="11.2" fill="#ff00ff"/>
<rect x="820" y="247.0" width="1" height="2.2" fill="#a000a0"/>
<rect x="821" y="244.2" width="1" height="9.2" fill="#ff00ff"/>
<rect x="822" y="244.4" width="1" height="11.0" fill="#ff00ff"/>
<rect x="822" y="254.2" width="1" height="2.1" fill="#a000a0"/>
<rect x="823" y="246.1" width="1" height="8.7" fill="#ff00ff"/>
<rect x="824" y="244.8" width="1" height="10.5" fill="#ff00ff"/>
<rect x="825" y="246.5" width="1" height="10.5" fill="#ff00ff"/>
<rect x="826" y="248.1" width="1" height="10.3" fill="#ff00ff"/>
<rect x="827" y="248.6" width="1" height="11.8" fill="#ff00ff"/>
<rect x="828" y="249.4" width="1" height="11.0" fill="#ff00ff"/>
<rect x="829" y="251.3" width="1" height="10.5" fill="#ff00ff"/>
<rect x="829" y="261.2" width="1" height="2.0" fill="#a000a0"/>
<rect x="830" y="253.0" width="1" height="10.6" fill="#ff00ff"/>
<rect x="831" y="255.0" width="1" height="11.0" fill="#ff00ff"/>
<rect x="832" y="258.1" width="1" height="9.6" fill="#ff00ff"/>
<rect x="833" y="258.2" width="1" height="11.3" fill="#ff00ff"/>
<rect x="834" y="261.8" width="1" height="8.2" fill="#ff00ff"/>
<rect x="835" y="262.0" width="1" height="11.6" fill="#ff00ff"/>
<rect x="836" y="265.9" width="1" height="9.9" fill="#ff00ff"/>
<rect x="837" y="268.3" width="1" height="9.6" fill="#ff00ff"/>
<rect x="838" y="269.4" width="1" height="10.8" fill="#ff00ff"/>
<rect x="839" y="271.7" width="1" height="11.2" fill="#ff00ff"/>
<rect x="840" y="274.3" width="1" height="11.6" fill="#ff00ff"/>
<rect x="841" y="278.9" width="1" height="10.2" fill="#ff00ff"/>
<rect x="842" y="281.0" width="1" height="9.7" fill="#ff00ff"/>
<rect x="843" y="283.8" width="1" height="9.4" fill="#ff00ff"/>
<rect x="844" y="286.5" width="1" height="9.7" fill="#ff00ff"/>
<rect x="845" y="289.9" width="1" height="10.3" fill="#ff00ff"/>
<rect x="846" y="292.8" width="1" height="8.9" fill="#ff00ff"/>
<rect x="846" y="293.9" width="1" height="1.2" fill="#a000a0"/>
<rect x="847" y="295.4" width="1" height="9.0" fill="#ff00ff"/>
<rect x="848" y="299.0" width="1" height="9.2" fill="#ff00ff"/>
<rect x="849" y="301.2" width="1" height="10.3" fill="#ff00ff"/>
<rect x="850" y="303.7" width="1" height="11.1" fill="#ff00ff"/>
<rect x="850" y="305.4" width="1" height="1.6" fill="#a000a0"/>
<rect x="851" y="308.3" width="1" height="10.6" fill="#ff00ff"/>
<rect x="852" y="310.3" width="1" height="11.7" fill="#ff00ff"/>
<rect x="853" y="314.8" width="1" height="10.5" fill="#ff00ff"/>
<rect x="854" y="294.2" width="1" height="6.5" fill="#ff00ff"/>
<rect x="854" y="300.7" width="1" height="6.8" fill="#ff00ff"/>
<rect x="854" y="307.5" width="1" height="3.2" fill="#ff00ff"/>
<rect x="854" y="310.7" width="1" height="3.5" fill="#ff00ff"/>
<rect x="854" y="314.2" width="1" height="4.0" fill="#ff00ff"/>
<rect x="854" y="318.2" width="1" height="6.4" fill="#ff00ff"/>
<rect x="854" y="324.6" width="1" height="1.0" fill="#ff00ff"/>
<rect x="855" y="287.4" width="1" height="4.2" fill="#ff00ff"/>
<rect x="855" y="291.6" width="1" height="6.8" fill="#ff00ff"/>
<rect x="855" y="298.4" width="1" height="2.3" fill="#d000d8"/>
<rect x="855" y="300.7" width="1" height="5.2" fill="#d000d8"/>
<rect x="855" y="305.9" width="1" height="5.9" fill="#ff00ff"/>
<rect x="855" y="311.8" width="1" height="3.6" fill="#ff00ff"/>
<rect x="856" y="285.1" width="1" height="6.9" fill="#ff00ff"/>
<rect x="856" y="292.0" width="1" height="4.2" fill="#ff00ff"/>
<rect x="856" y="296.2" width="1" height="6.9" fill="#ff00ff"/>
<rect x="856" y="303.1" width="1" height="3.0" fill="#d000d8"/>
<rect x="856" y="306.1" width="1" height="2.1" fill="#ff00ff"/>
<rect x="856" y="308.2" width="1" height="4.6" fill="#ff00ff"/>
<rect x="856" y="312.9" width="1" height="3.9" fill="#ff00ff"/>
<rect x="856" y="316.8" width="1" height="1.0" fill="#ff00ff"/>
<rect x="857" y="280.9" width="1" height="5.5" fill="#ff00ff"/>
<rect x="857" y="286.4" width="1" height="4.8" fill="#ff00ff"/>
<rect x="857" y="291.2" width="1" height="4.8" fill="#ff00ff"/>
<rect x="857" y="296.0" width="1" height="6.5" fill="#ff00ff"/>
<rect x="857" y="302.5" width="1" height="3.5" fill="#d000d8"/>
<rect x="857" y="306.0" width="1" height="2.3" fill="#ff00ff"/>
<rect x="857" y="308.3" width="1" height="3.0" fill="#ff00ff"/>
<rect x="858" y="277.9" width="1" height="2.1" fill="#ff00ff"/>
<rect x="858" y="280.0" width="1" height="3.4" fill="#ff00ff"/>
<rect x="858" y="283.4" width="1" height="3.3" fill="#ff00ff"/>
<rect x="858" y="286.7" width="1" height="4.1" fill="#ff00ff"/>
<rect x="858" y="290.8" width="1" height="4.9" fill="#ff00ff"/>
<rect x="858" y="295.8" width="1" height="6.7" fill="#ff00ff"/>
<rect x="858" y="302.4" width="1" height="5.5" fill="#ff00ff"/>
<rect x="858" y="307.9" width="1" height="2.4" fill="#d000d8"/>
<rect x="858" y="310.3" width="1" height="1.0" fill="#ff00ff"/>
<rect x="859" y="278.0" width="1" height="6.7" fill="#ff00ff"/>
<rect x="859" y="284.7" width="1" height="4.4" fill="#d000d8"/>
<rect x="859" y="289.1" width="1" height="6.6" fill="#ff00ff"/>
<rect x="859" y="295.7" width="1" height="4.2" fill="#ff00ff"/>
<rect x="859" y="299.9" width="1" height="5.7" fill="#d000d8"/>
<rect x="859" y="305.6" width="1" height="2.6" fill="#ff00ff"/>
<rect x="860" y="275.3" width="1" height="3.1" fill="#ff00ff"/>
<rect x="860" y="281.7" width="1" height="2.1" fill="#ff00ff"/>
<rect x="860" y="283.8" width="1" height="3.0" fill="#d000d8"/>
<rect x="860" y="286.8" width="1" height="5.4" fill="#ff00ff"/>
<rect x="860" y="292.2" width="1" height="2.5" fill="#ff00ff"/>
<rect x="860" y="294.7" width="1" height="5.7" fill="#ff00ff"/>
<rect x="860" y="300.4" width="1" height="5.6" fill="#ff00ff"/>
<rect x="860" y="306.0" width="1" height="1.0" fill="#ff00ff"/>
<rect x="861" y="278.7" width="1" height="6.9" fill="#d000d8"/>
<rect x="861" y="285.6" width="1" height="6.2" fill="#ff00ff"/>
<rect x="861" y="291.8" width="1" height="6.4" fill="#d000d8"/>
<rect x="861" y="298.2" width="1" height="3.0" fill="#d000d8"/>
<rect x="861" y="301.2" width="1" height="1.0" fill="#d000d8"/>
<rect x="862" y="273.3" width="1" height="2.8" fill="#d000d8"/>
<rect x="862" y="276.2" width="1" height="2.9" fill="#ff00ff"/>
<rect x="862" y="279.0" width="1" height="5.9" fill="#d000d8"/>
<rect x="862" y="285.0" width="1" height="4.0" fill="#ff00ff"/>
<rect x="862" y="294.5" width="1" height="4.8" fill="#ff00ff"/>
<rect x="863" y="269.2" width="1" height="5.1" fill="#ff00ff"/>
<rect x="863" y="274.3" width="1" height="3.1" fill="#ff00ff"/>
<rect x="863" y="277.4" width="1" height="5.0" fill="#ff00ff"/>
<rect x="863" y="282.4" width="1" height="4.6" fill="#ff00ff"/>
<rect x="863" y="287.0" width="1" height="2.1" fill="#ff00ff"/>
<rect x="863" y="289.1" width="1" height="5.3" fill="#d000d8"/>
<rect x="863" y="294.4" width="1" height="3.1" fill="#ff00ff"/>
<rect x="864" y="271.6" width="1" height="6.7" fill="#ff00ff"/>
<rect x="864" y="278.3" width="1" height="2.3" fill="#ff00ff"/>
<rect x="864" y="280.6" width="1" height="5.4" fill="#ff00ff"/>
<rect x="864" y="286.0" width="1" height="5.1" fill="#ff00ff"/>
<rect x="864" y="291.1" width="1" height="5.0" fill="#ff00ff"/>
<rect x="864" y="296.0" width="1" height="2.7" fill="#ff00ff"/>
<rect x="865" y="271.8" width="1" height="6.7" fill="#d000d8"/>
<rect x="865" y="278.5" width="1" height="5.6" fill="#ff00ff"/>
<rect x="865" y="284.0" width="1" height="2.8" fill="#ff00ff"/>
<rect x="865" y="286.8" width="1" height="4.7" fill="#d000d8"/>
<rect x="865" y="291.5" width="1" height="1.4" fill="#ff00ff"/>
<rect x="866" y="264.7" width="1" height="2.4" fill="#ff00ff"/>
<rect x="866" y="273.0" width="1" height="6.0" fill="#ff00ff"/>
<rect x="866" y="279.0" width="1" height="3.5" fill="#ff00ff"/>
<rect x="866" y="282.5" width="1" height="4.7" fill="#ff00ff"/>
<rect x="866" y="287.2" width="1" height="5.0" fill="#ff00ff"/>
<rect x="866" y="292.2" width="1" height="1.9" fill="#ff00ff"/>
<rect x="867" y="265.9" width="1" height="6.6" fill="#d000d8"/>
<rect x="867" y="272.5" width="1" height="2.6" fill="#ff00ff"/>
<rect x="867" y="275.0" width="1" height="4.5" fill="#ff00ff"/>
<rect x="867" y="279.5" width="1" height="6.5" fill="#ff00ff"/>
<rect x="867" y="286.1" width="1" height="2.1" fill="#d000d8"/>
<rect x="867" y="288.1" width="1" height="4.9" fill="#ff00ff"/>
<rect x="868" y="264.6" width="1" height="3.9" fill="#ff00ff"/>
<rect x="868" y="268.5" width="1" height="5.5" fill="#d000d8"/>
<rect x="868" y="274.0" width="1" height="3.8" fill="#ff00ff"/>
<rect x="868" y="282.0" width="1" height="4.6" fill="#d000d8"/>
<rect x="868" y="286.6" width="1" height="1.5" fill="#ff00ff"/>
<rect x="869" y="264.2" width="1" height="4.5" fill="#ff00ff"/>
<rect x="869" y="268.7" width="1" height="2.4" fill="#ff00ff"/>
<rect x="869" y="271.1" width="1" height="5.5" fill="#ff00ff"/>
<rect x="869" y="276.6" width="1" height="4.7" fill="#ff00ff"/>
<rect x="869" y="281.3" width="1" height="2.8" fill="#ff00ff"/>
<rect x="869" y="284.0" width="1" height="1.0" fill="#ff00ff"/>
<rect x="870" y="262.3" width="1" height="6.2" fill="#ff00ff"/>
<rect x="870" y="268.5" width="1" height="4.0" fill="#ff00ff"/>
<rect x="870" y="272.5" width="1" height="3.6" fill="#ff00ff"/>
<rect x="870" y="276.1" width="1" height="6.6" fill="#ff00ff"/>
<rect x="870" y="282.7" width="1" height="3.5" fill="#d000d8"/>
<rect x="871" y="260.5" width="1" height="2.1" fill="#ff00ff"/>
<rect x="871" y="262.6" width="1" height="4.2" fill="#ff00ff"/>
<rect x="871" y="266.8" width="1" height="6.0" fill="#d000d8"/>
<rect x="871" y="272.8" width="1" height="6.1" fill="#ff00ff"/>
<rect x="871" y="278.9" width="1" height="6.0" fill="#ff00ff"/>
<rect x="872" y="260.2" width="1" height="2.1" fill="#ff00ff"/>
<rect x="872" y="273.0" width="1" height="5.7" fill="#ff00ff"/>
<rect x="872" y="278.7" width="1" height="1.4" fill="#ff00ff"/>
<rect x="873" y="258.5" width="1" height="3.0" fill="#ff00ff"/>
<rect x="873" y="261.6" width="1" height="2.0" fill="#ff00ff"/>
<rect x="873" y="263.6" width="1" height="3.5" fill="#ff00ff"/>
<rect x="873" y="267.1" width="1" height="2.5" fill="#ff00ff"/>
<rect x="873" y="272.0" width="1" height="3.3" fill="#ff00ff"/>
<rect x="873" y="275.3" width="1" height="2.3" fill="#d000d8"/>
<rect x="873" y="277.6" width="1" height="2.4" fill="#ff00ff"/>
<rect x="874" y="258.1" width="1" height="6.6" fill="#ff00ff"/>
<rect x="874" y="264.7" width="1" height="4.9" fill="#ff00ff"/>
<rect x="874" y="269.6" width="1" height="6.5" fill="#ff00ff"/>
<rect x="874" y="276.1" width="1" height="3.1" fill="#d000d8"/>
<rect x="875" y="256.4" width="1" height="3.4" fill="#ff00ff"/>
<rect x="875" y="259.8" width="1" height="3.3" fill="#ff00ff"/>
<rect x="875" y="263.1" width="1" height="3.3" fill="#ff00ff"/>
<rect x="875" y="266.4" width="1" height="2.6" fill="#ff00ff"/>
<rect x="875" y="268.9" width="1" height="4.2" fill="#ff00ff"/>
<rect x="875" y="273.2" width="1" height="2.0" fill="#ff00ff"/>
<rect x="876" y="255.7" width="1" height="5.8" fill="#ff00ff"/>
<rect x="876" y="261.5" width="1" height="4.3" fill="#ff00ff"/>
<rect x="876" y="269.1" width="1" height="3.9" fill="#d000d8"/>
<rect x="877" y="255.7" width="1" height="5.6" fill="#ff00ff"/>
<rect x="877" y="261.2" width="1" height="5.8" fill="#ff00ff"/>
<rect x="877" y="267.0" width="1" height="4.9" fill="#ff00ff"/>
<rect x="878" y="255.5" width="1" height="4.0" fill="#d000d8"/>
<rect x="878" y="259.5" width="1" height="2.2" fill="#ff00ff"/>
<rect x="878" y="261.7" width="1" height="4.7" fill="#ff00ff"/>
<rect x="878" y="266.4" width="1" height="1.6" fill="#ff00ff"/>
<rect x="879" y="255.6" width="1" height="2.8" fill="#ff00ff"/>
<rect x="879" y="258.4" width="1" height="3.4" fill="#ff00ff"/>
<rect x="879" y="266.3" width="1" height="2.1" fill="#ff00ff"/>
<rect x="880" y="259.3" width="1" height="4.6" fill="#ff00ff"/>
<rect x="881" y="255.0" width="1" height="6.7" fill="#d000d8"/>
<rect x="881" y="261.6" width="1" height="3.6" fill="#ff00ff"/>
<rect x="882" y="253.1" width="1" height="9.5" fill="#ff00ff"/>
<rect x="883" y="252.3" width="1" height="12.1" fill="#ff00ff"/>
<rect x="884" y="253.3" width="1" height="10.4" fill="#ff00ff"/>
<rect x="885" y="254.1" width="1" height="8.7" fill="#ff00ff"/>
<rect x="886" y="253.5" width="1" height="11.8" fill="#ff00ff"/>
<rect x="887" y="255.8" width="1" height="9.9" fill="#ff00ff"/>
<rect x="887" y="261.4" width="1" height="1.1" fill="#a000a0"/>
<rect x="888" y="256.6" width="1" height="10.1" fill="#ff00ff"/>
<rect x="889" y="256.8" width="1" height="9.2" fill="#ff00ff"/>
<rect x="890" y="258.5" width="1" height="8.5" fill="#ff00ff"/>
<rect x="891" y="260.2" width="1" height="8.3" fill="#ff00ff"/>
<rect x="892" y="260.1" width="1" height="9.4" fill="#ff00ff"/>
<rect x="892" y="267.2" width="1" height="1.4" fill="#a000a0"/>
<rect x="893" y="262.9" width="1" height="9.0" fill="#ff00ff"/>
<rect x="893" y="270.3" width="1" height="1.7" fill="#a000a0"/>
<rect x="894" y="262.8" width="1" height="9.7" fill="#ff00ff"/>
<rect x="895" y="265.3" width="1" height="10.1" fill="#ff00ff"/>
<rect x="896" y="266.2" width="1" height="9.8" fill="#ff00ff"/>
<rect x="897" y="268.9" width="1" height="10.7" fill="#ff00ff"/>
<rect x="898" y="271.3" width="1" height="10.4" fill="#ff00ff"/>
<rect x="899" y="272.5" width="1" height="10.7" fill="#ff00ff"/>
<rect x="900" y="276.5" width="1" height="8.2" fill="#ff00ff"/>
<rect x="901" y="277.1" width="1" height="10.2" fill="#ff00ff"/>
<rect x="902" y="281.1" width="1" height="8.5" fill="#ff00ff"/>
<rect x="903" y="281.3" width="1" height="11.8" fill="#ff00ff"/>
<rect x="903" y="291.2" width="1" height="1.5" fill="#a000a0"/>
<rect x="904" y="284.2" width="1" height="9.5" fill="#ff00ff"/>
<rect x="905" y="288.4" width="1" height="8.6" fill="#ff00ff"/>
<rect x="906" y="290.4" width="1" height="8.8" fill="#ff00ff"/>
<rect x="907" y="293.6" width="1" height="9.7" fill="#ff00ff"/>
<rect x="907" y="301.2" width="1" height="2.6" fill="#a000a0"/>
<rect x="908" y="295.8" width="1" height="9.5" fill="#ff00ff"/>
<rect x="908" y="302.2" width="1" height="2.2" fill="#a000a0"/>
<rect x="909" y="297.7" width="1" height="10.7" fill="#ff00ff"/>
<rect x="909" y="301.7" width="1" height="2.3" fill="#a000a0"/>
<rect x="910" y="301.3" width="1" height="10.2" fill="#ff00ff"/>
<rect x="911" y="302.4" width="1" height="10.4" fill="#ff00ff"/>
<rect x="912" y="287.0" width="1" height="3.9" fill="#d000d8"/>
<rect x="912" y="290.9" width="1" height="6.5" fill="#ff00ff"/>
<rect x="912" y="303.9" width="1" height="2.0" fill="#ff00ff"/>
<rect x="912" y="305.9" width="1" height="1.5" fill="#ff00ff"/>
<rect x="913" y="278.0" width="1" height="6.4" fill="#ff00ff"/>
<rect x="913" y="284.4" width="1" height="5.0" fill="#ff00ff"/>
<rect x="913" y="289.3" width="1" height="6.5" fill="#ff00ff"/>
<rect x="913" y="295.8" width="1" height="4.7" fill="#ff00ff"/>
<rect x="913" y="304.3" width="1" height="1.0" fill="#ff00ff"/>
<rect x="914" y="273.6" width="1" height="2.2" fill="#ff00ff"/>
<rect x="914" y="275.8" width="1" height="3.1" fill="#ff00ff"/>
<rect x="914" y="278.9" width="1" height="3.1" fill="#ff00ff"/>
<rect x="914" y="282.0" width="1" height="4.2" fill="#ff00ff"/>
<rect x="914" y="286.2" width="1" height="3.3" fill="#ff00ff"/>
<rect x="914" y="289.4" width="1" height="2.5" fill="#d000d8"/>
<rect x="914" y="291.9" width="1" height="4.1" fill="#ff00ff"/>
<rect x="914" y="296.0" width="1" height="5.9" fill="#ff00ff"/>
<rect x="914" y="301.8" width="1" height="2.8" fill="#ff00ff"/>
<rect x="915" y="271.3" width="1" height="4.5" fill="#ff00ff"/>
<rect x="915" y="275.8" width="1" height="4.9" fill="#ff00ff"/>
<rect x="915" y="280.8" width="1" height="2.8" fill="#d000d8"/>
<rect x="915" y="283.5" width="1" height="5.2" fill="#ff00ff"/>
<rect x="915" y="288.7" width="1" height="6.3" fill="#ff00ff"/>
<rect x="915" y="295.0" width="1" height="4.2" fill="#ff00ff"/>
<rect x="915" y="299.2" width="1" height="4.4" fill="#ff00ff"/>
<rect x="916" y="272.4" width="1" height="3.3" fill="#ff00ff"/>
<rect x="916" y="275.7" width="1" height="4.8" fill="#ff00ff"/>
<rect x="916" y="280.5" width="1" height="4.3" fill="#ff00ff"/>
<rect x="916" y="284.9" width="1" height="3.3" fill="#ff00ff"/>
<rect x="916" y="288.1" width="1" height="5.4" fill="#d000d8"/>
<rect x="916" y="293.5" width="1" height="3.3" fill="#ff00ff"/>
<rect x="916" y="296.8" width="1" height="1.0" fill="#ff00ff"/>
<rect x="917" y="268.6" width="1" height="3.2" fill="#d000d8"/>
<rect x="917" y="271.8" width="1" height="6.4" fill="#ff00ff"/>
<rect x="917" y="278.2" width="1" height="3.8" fill="#ff00ff"/>
<rect x="917" y="282.0" width="1" height="4.7" fill="#d000d8"/>
<rect x="917" y="286.7" width="1" height="3.9" fill="#ff00ff"/>
<rect x="917" y="290.6" width="1" height="6.1" fill="#ff00ff"/>
<rect x="917" y="296.8" width="1" height="2.2" fill="#ff00ff"/>
<rect x="918" y="266.9" width="1" height="5.0" fill="#ff00ff"/>
<rect x="918" y="271.9" width="1" height="5.3" fill="#ff00ff"/>
<rect x="918" y="277.3" width="1" height="6.0" fill="#ff00ff"/>
<rect x="918" y="283.3" width="1" height="2.6" fill="#ff00ff"/>
<rect x="918" y="285.9" width="1" height="5.3" fill="#ff00ff"/>
<rect x="918" y="291.2" width="1" height="2.3" fill="#ff00ff"/>
<rect x="919" y="263.6" width="1" height="2.2" fill="#ff00ff"/>
<rect x="919" y="265.9" width="1" height="3.6" fill="#ff00ff"/>
<rect x="919" y="269.5" width="1" height="6.5" fill="#ff00ff"/>
<rect x="919" y="276.0" width="1" height="3.7" fill="#ff00ff"/>
<rect x="919" y="279.8" width="1" height="5.4" fill="#ff00ff"/>
<rect x="919" y="285.2" width="1" height="5.1" fill="#ff00ff"/>
<rect x="920" y="270.5" width="1" height="2.3" fill="#ff00ff"/>
<rect x="920" y="277.8" width="1" height="5.0" fill="#ff00ff"/>
<rect x="920" y="282.8" width="1" height="2.7" fill="#ff00ff"/>
<rect x="920" y="285.5" width="1" height="2.8" fill="#ff00ff"/>
<rect x="920" y="288.3" width="1" height="1.7" fill="#ff00ff"/>
<rect x="921" y="261.5" width="1" height="4.5" fill="#d000d8"/>
<rect x="921" y="266.0" width="1" height="3.6" fill="#ff00ff"/>
<rect x="921" y="273.8" width="1" height="6.6" fill="#ff00ff"/>
<rect x="921" y="280.3" width="1" height="3.9" fill="#ff00ff"/>
<rect x="921" y="284.2" width="1" height="4.4" fill="#ff00ff"/>
<rect x="921" y="288.6" width="1" height="1.0" fill="#ff00ff"/>
<rect x="922" y="262.1" width="1" height="4.1" fill="#ff00ff"/>
<rect x="922" y="266.2" width="1" height="3.3" fill="#ff00ff"/>
<rect x="922" y="269.4" width="1" height="2.6" fill="#ff00ff"/>
<rect x="922" y="272.0" width="1" height="3.5" fill="#ff00ff"/>
<rect x="922" y="275.5" width="1" height="5.7" fill="#ff00ff"/>
<rect x="922" y="281.2" width="1" height="2.7" fill="#ff00ff"/>
<rect x="922" y="286.3" width="1" height="1.7" fill="#d000d8"/>
<rect x="923" y="259.4" width="1" height="2.7" fill="#ff00ff"/>
<rect x="923" y="262.1" width="1" height="5.4" fill="#ff00ff"/>
<rect x="923" y="267.5" width="1" height="3.6" fill="#ff00ff"/>
<rect x="923" y="271.1" width="1" height="3.4" fill="#ff00ff"/>
<rect x="923" y="277.4" width="1" height="5.9" fill="#ff00ff"/>
<rect x="924" y="257.3" width="1" height="2.2" fill="#ff00ff"/>
<rect x="924" y="259.6" width="1" height="4.5" fill="#ff00ff"/>
<rect x="924" y="264.1" width="1" height="4.9" fill="#ff00ff"/>
<rect x="924" y="269.0" width="1" height="5.8" fill="#d000d8"/>
<rect x="924" y="274.7" width="1" height="2.2" fill="#ff00ff"/>
<rect x="924" y="276.9" width="1" height="6.2" fill="#ff00ff"/>
<rect x="924" y="283.1" width="1" height="1.0" fill="#d000d8"/>
<rect x="925" y="260.3" width="1" height="3.0" fill="#ff00ff"/>
<rect x="925" y="263.3" width="1" height="2.1" fill="#ff00ff"/>
<rect x="925" y="268.9" width="1" height="5.8" fill="#ff00ff"/>
<rect x="925" y="274.7" width="1" height="4.0" fill="#ff00ff"/>
<rect x="925" y="278.7" width="1" height="2.8" fill="#ff00ff"/>
<rect x="925" y="281.5" width="1" height="1.5" fill="#ff00ff"/>
<rect x="926" y="255.5" width="1" height="6.9" fill="#ff00ff"/>
<rect x="926" y="262.4" width="1" height="4.2" fill="#ff00ff"/>
<rect x="926" y="266.6" width="1" height="6.2" fill="#ff00ff"/>
<rect x="926" y="279.3" width="1" height="1.8" fill="#ff00ff"/>
<rect x="927" y="258.3" width="1" height="7.0" fill="#ff00ff"/>
<rect x="927" y="265.2" width="1" height="5.4" fill="#ff00ff"/>
<rect x="927" y="270.6" width="1" height="4.0" fill="#ff00ff"/>
<rect x="928" y="255.2" width="1" height="5.9" fill="#ff00ff"/>
<rect x="928" y="261.1" width="1" height="5.5" fill="#ff00ff"/>
<rect x="928" y="266.6" width="1" height="5.9" fill="#ff00ff"/>
<rect x="928" y="272.4" width="1" height="2.9" fill="#ff00ff"/>
<rect x="929" y="254.5" width="1" height="4.8" fill="#ff00ff"/>
<rect x="929" y="259.4" width="1" height="2.7" fill="#ff00ff"/>
<rect x="929" y="262.1" width="1" height="2.6" fill="#ff00ff"/>
<rect x="929" y="267.7" width="1" height="3.0" fill="#ff00ff"/>
<rect x="929" y="270.8" width="1" height="2.4" fill="#ff00ff"/>
<rect x="930" y="252.3" width="1" height="5.5" fill="#ff00ff"/>
<rect x="930" y="257.8" width="1" height="6.7" fill="#ff00ff"/>
<rect x="930" y="264.5" width="1" height="3.5" fill="#ff00ff"/>
<rect x="930" y="268.0" width="1" height="2.1" fill="#ff00ff"/>
<rect x="931" y="251.6" width="1" height="5.7" fill="#ff00ff"/>
<rect x="931" y="257.3" width="1" height="6.9" fill="#ff00ff"/>
<rect x="931" y="264.2" width="1" height="3.8" fill="#ff00ff"/>
<rect x="931" y="268.1" width="1" height="1.7" fill="#ff00ff"/>
<rect x="932" y="252.3" width="1" height="6.0" fill="#ff00ff"/>
<rect x="932" y="258.3" width="1" height="2.1" fill="#d000d8"/>
<rect x="932" y="260.4" width="1" height="3.8" fill="#ff00ff"/>
<rect x="932" y="264.2" width="1" height="3.9" fill="#ff00ff"/>
<rect x="933" y="250.4" width="1" height="3.5" fill="#ff00ff"/>
<rect x="933" y="253.9" width="1" height="2.0" fill="#ff00ff"/>
<rect x="933" y="255.9" width="1" height="4.2" fill="#ff00ff"/>
<rect x="933" y="263.1" width="1" height="4.6" fill="#ff00ff"/>
<rect x="934" y="250.3" width="1" height="3.7" fill="#ff00ff"/>
<rect x="934" y="254.0" width="1" height="6.8" fill="#ff00ff"/>
<rect x="934" y="260.8" width="1" height="3.0" fill="#ff00ff"/>
<rect x="935" y="250.7" width="1" height="5.6" fill="#ff00ff"/>
<rect x="935" y="256.4" width="1" height="2.8" fill="#d000d8"/>
<rect x="935" y="259.1" width="1" height="2.9" fill="#ff00ff"/>
<rect x="936" y="251.4" width="1" height="5.8" fill="#ff00ff"/>
<rect x="936" y="257.1" width="1" height="2.4" fill="#d000d8"/>
<rect x="937" y="247.6" width="1" height="6.9" fill="#ff00ff"/>
<rect x="937" y="254.4" width="1" height="5.1" fill="#ff00ff"/>
<rect x="938" y="249.4" width="1" height="9.6" fill="#ff00ff"/>
<rect x="939" y="249.9" width="1" height="10.0" fill="#ff00ff"/>
<rect x="940" y="249.0" width="1" height="11.1" fill="#ff00ff"/>
<rect x="941" y="250.8" width="1" height="8.6" fill="#ff00ff"/>
<rect x="942" y="249.7" width="1" height="12.3" fill="#ff00ff"/>
<rect x="943" y="251.0" width="1" height="10.9" fill="#ff00ff"/>
<rect x="944" y="252.7" width="1" height="10.6" fill="#ff00ff"/>
<rect x="945" y="254.8" width="1" height="9.2" fill="#ff00ff"/>
<rect x="946" y="254.9" width="1" height="9.1" fill="#ff00ff"/>
<rect x="946" y="263.0" width="1" height="2.9" fill="#a000a0"/>
<rect x="947" y="257.0" width="1" height="8.5" fill="#ff00ff"/>
<rect x="948" y="257.0" width="1" height="10.3" fill="#ff00ff"/>
<rect x="949" y="260.3" width="1" height="7.8" fill="#ff00ff"/>
<rect x="950" y="261.5" width="1" height="10.0" fill="#ff00ff"/>
<rect x="950" y="265.0" width="1" height="2.5" fill="#a000a0"/>
<rect x="951" y="262.2" width="1" height="9.9" fill="#ff00ff"/>
<rect x="952" y="264.1" width="1" height="10.2" fill="#ff00ff"/>
<rect x="952" y="266.2" width="1" height="1.2" fill="#a000a0"/>
<rect x="953" y="266.7" width="1" height="9.8" fill="#ff00ff"/>
<rect x="953" y="268.5" width="1" height="1.8" fill="#a000a0"/>
<rect x="954" y="268.1" width="1" height="10.5" fill="#ff00ff"/>
<rect x="954" y="275.9" width="1" height="1.2" fill="#a000a0"/>
<rect x="955" y="271.3" width="1" height="9.2" fill="#ff00ff"/>
<rect x="956" y="274.9" width="1" height="9.4" fill="#ff00ff"/>
<rect x="956" y="276.7" width="1" height="1.3" fill="#a000a0"/>
<rect x="957" y="277.1" width="1" height="8.1" fill="#ff00ff"/>
<rect x="958" y="279.4" width="1" height="10.2" fill="#ff00ff"/>
<rect x="959" y="281.2" width="1" height="9.8" fill="#ff00ff"/>
<rect x="960" y="284.0" width="1" height="10.5" fill="#ff00ff"/>
<rect x="961" y="287.7" width="1" height="9.4" fill="#ff00ff"/>
<rect x="962" y="289.5" width="1" height="9.5" fill="#ff00ff"/>
<rect x="963" y="291.4" width="1" height="10.9" fill="#ff00ff"/>
<rect x="964" y="295.7" width="1" height="8.8" fill="#ff00ff"/>
<rect x="965" y="297.5" width="1" height="10.3" fill="#ff00ff"/>
<rect x="966" y="300.4" width="1" height="12.2" fill="#ff00ff"/>
<rect x="966" y="311.4" width="1" height="2.4" fill="#a000a0"/>
<rect x="967" y="305.4" width="1" height="9.2" fill="#ff00ff"/>
<rect x="968" y="307.3" width="1" height="10.2" fill="#ff00ff"/>
<rect x="969" y="309.7" width="1" height="11.0" fill="#ff00ff"/>
<rect x="970" y="297.8" width="1" height="5.0" fill="#ff00ff"/>
<rect x="970" y="302.8" width="1" height="4.8" fill="#ff00ff"/>
<rect x="970" y="307.6" width="1" height="6.3" fill="#ff00ff"/>
<rect x="970" y="313.9" width="1" height="3.9" fill="#ff00ff"/>
<rect x="970" y="317.8" width="1" height="4.6" fill="#ff00ff"/>
<rect x="971" y="287.5" width="1" height="4.1" fill="#ff00ff"/>
<rect x="971" y="291.6" width="1" height="6.3" fill="#ff00ff"/>
<rect x="971" y="297.8" width="1" height="3.0" fill="#ff00ff"/>
<rect x="971" y="300.8" width="1" height="3.2" fill="#ff00ff"/>
<rect x="971" y="308.3" width="1" height="5.0" fill="#ff00ff"/>
<rect x="972" y="286.9" width="1" height="6.0" fill="#ff00ff"/>
<rect x="972" y="292.9" width="1" height="5.6" fill="#ff00ff"/>
<rect x="972" y="298.5" width="1" height="5.3" fill="#ff00ff"/>
<rect x="972" y="303.7" width="1" height="6.7" fill="#ff00ff"/>
<rect x="972" y="310.4" width="1" height="1.7" fill="#ff00ff"/>
<rect x="973" y="281.0" width="1" height="5.1" fill="#ff00ff"/>
<rect x="973" y="286.1" width="1" height="2.0" fill="#ff00ff"/>
<rect x="973" y="288.2" width="1" height="5.1" fill="#d000d8"/>
<rect x="973" y="293.2" width="1" height="2.1" fill="#ff00ff"/>
<rect x="973" y="295.4" width="1" height="2.6" fill="#d000d8"/>
<rect x="973" y="298.0" width="1" height="6.0" fill="#ff00ff"/>
<rect x="973" y="304.0" width="1" height="4.4" fill="#ff00ff"/>
<rect x="973" y="308.4" width="1" height="2.3" fill="#ff00ff"/>
<rect x="974" y="280.0" width="1" height="2.3" fill="#ff00ff"/>
<rect x="974" y="282.3" width="1" height="4.5" fill="#ff00ff"/>
<rect x="974" y="286.8" width="1" height="6.4" fill="#ff00ff"/>
<rect x="974" y="293.3" width="1" height="2.1" fill="#ff00ff"/>
<rect x="974" y="295.3" width="1" height="5.3" fill="#ff00ff"/>
<rect x="974" y="300.6" width="1" height="4.2" fill="#d000d8"/>
<rect x="975" y="279.0" width="1" height="4.2" fill="#ff00ff"/>
<rect x="975" y="283.1" width="1" height="5.2" fill="#ff00ff"/>
<rect x="975" y="288.3" width="1" height="4.3" fill="#ff00ff"/>
<rect x="975" y="292.6" width="1" height="2.9" fill="#ff00ff"/>
<rect x="975" y="295.5" width="1" height="5.6" fill="#ff00ff"/>
<rect x="975" y="301.1" width="1" height="2.6" fill="#ff00ff"/>
<rect x="975" y="303.7" width="1" height="2.6" fill="#ff00ff"/>
<rect x="976" y="277.3" width="1" height="5.8" fill="#ff00ff"/>
<rect x="976" y="283.1" width="1" height="6.7" fill="#ff00ff"/>
<rect x="976" y="289.8" width="1" height="4.6" fill="#ff00ff"/>
<rect x="976" y="294.4" width="1" height="3.6" fill="#ff00ff"/>
<rect x="976" y="298.0" width="1" height="3.3" fill="#ff00ff"/>
<rect x="976" y="301.3" width="1" height="2.9" fill="#ff00ff"/>
<rect x="976" y="304.2" width="1" height="3.2" fill="#ff00ff"/>
<rect x="977" y="275.6" width="1" height="6.6" fill="#d000d8"/>
<rect x="977" y="282.2" width="1" height="2.5" fill="#ff00ff"/>
<rect x="977" y="284.8" width="1" height="6.6" fill="#ff00ff"/>
<rect x="977" y="291.4" width="1" height="2.7" fill="#ff00ff"/>
<rect x="977" y="297.0" width="1" height="6.4" fill="#ff00ff"/>
<rect x="977" y="303.4" width="1" height="1.0" fill="#ff00ff"/>
<rect x="978" y="274.3" width="1" height="4.8" fill="#ff00ff"/>
<rect x="978" y="279.2" width="1" height="4.1" fill="#ff00ff"/>
<rect x="978" y="283.3" width="1" height="6.7" fill="#ff00ff"/>
<rect x="978" y="290.0" width="1" height="4.1" fill="#ff00ff"/>
<rect x="978" y="294.1" width="1" height="5.9" fill="#ff00ff"/>
<rect x="978" y="300.0" width="1" height="1.0" fill="#ff00ff"/>
<rect x="979" y="270.4" width="1" height="6.5" fill="#ff00ff"/>
<rect x="979" y="276.9" width="1" height="5.0" fill="#ff00ff"/>
<rect x="979" y="287.6" width="1" height="4.4" fill="#ff00ff"/>
<rect x="979" y="292.0" width="1" height="4.7" fill="#ff00ff"/>
<rect x="979" y="296.7" width="1" height="2.8" fill="#ff00ff"/>
<rect x="980" y="269.9" width="1" height="4.9" fill="#ff00ff"/>
<rect x="980" y="274.8" width="1" height="3.0" fill="#ff00ff"/>
<rect x="980" y="277.8" width="1" height="5.7" fill="#ff00ff"/>
<rect x="980" y="288.7" width="1" height="3.8" fill="#ff00ff"/>
<rect x="980" y="297.6" width="1" height="1.7" fill="#d000d8"/>
<rect x="981" y="270.4" width="1" height="5.2" fill="#ff00ff"/>
<rect x="981" y="275.6" width="1" height="5.4" fill="#ff00ff"/>
<rect x="981" y="281.0" width="1" height="6.0" fill="#ff00ff"/>
<rect x="981" y="287.0" width="1" height="3.9" fill="#ff00ff"/>
<rect x="981" y="290.9" width="1" height="2.1" fill="#ff00ff"/>
<rect x="982" y="268.2" width="1" height="5.7" fill="#ff00ff"/>
<rect x="982" y="276.8" width="1" height="5.9" fill="#ff00ff"/>
<rect x="982" y="282.6" width="1" height="4.8" fill="#ff00ff"/>
<rect x="982" y="287.4" width="1" height="3.2" fill="#ff00ff"/>
<rect x="982" y="290.6" width="1" height="3.1" fill="#d000d8"/>
<rect x="983" y="265.9" width="1" height="4.2" fill="#ff00ff"/>
<rect x="983" y="270.1" width="1" height="5.8" fill="#ff00ff"/>
<rect x="983" y="275.9" width="1" height="3.3" fill="#ff00ff"/>
<rect x="983" y="279.2" width="1" height="6.3" fill="#ff00ff"/>
<rect x="983" y="285.5" width="1" height="2.6" fill="#ff00ff"/>
<rect x="983" y="288.1" width="1" height="2.0" fill="#ff00ff"/>
<rect x="984" y="266.5" width="1" height="3.4" fill="#d000d8"/>
<rect x="984" y="269.9" width="1" height="2.2" fill="#ff00ff"/>
<rect x="984" y="272.2" width="1" height="6.1" fill="#ff00ff"/>
<rect x="984" y="278.3" width="1" height="3.6" fill="#ff00ff"/>
<rect x="984" y="281.9" width="1" height="6.2" fill="#ff00ff"/>
<rect x="985" y="272.1" width="1" height="5.3" fill="#ff00ff"/>
<rect x="985" y="277.4" width="1" height="2.6" fill="#ff00ff"/>
<rect x="985" y="280.0" width="1" height="4.1" fill="#ff00ff"/>
<rect x="985" y="284.1" width="1" height="4.3" fill="#ff00ff"/>
<rect x="986" y="262.8" width="1" height="4.9" fill="#ff00ff"/>
<rect x="986" y="267.7" width="1" height="3.0" fill="#ff00ff"/>
<rect x="986" y="270.6" width="1" height="2.6" fill="#ff00ff"/>
<rect x="986" y="273.2" width="1" height="3.7" fill="#ff00ff"/>
<rect x="986" y="277.0" width="1" height="6.8" fill="#ff00ff"/>
<rect x="986" y="283.7" width="1" height="3.7" fill="#ff00ff"/>
<rect x="987" y="264.7" width="1" height="6.3" fill="#ff00ff"/>
<rect x="987" y="271.0" width="1" height="3.8" fill="#ff00ff"/>
<rect x="987" y="274.8" width="1" height="5.1" fill="#ff00ff"/>
<rect x="987" y="279.9" width="1" height="2.6" fill="#ff00ff"/>
<rect x="988" y="261.4" width="1" height="5.5" fill="#ff00ff"/>
<rect x="988" y="267.0" width="1" height="6.6" fill="#d000d8"/>
<rect x="988" y="279.5" width="1" height="3.7" fill="#ff00ff"/>
<rect x="988" y="283.2" width="1" height="1.0" fill="#d000d8"/>
<rect x="989" y="262.2" width="1" height="5.8" fill="#d000d8"/>
<rect x="989" y="268.0" width="1" height="4.3" fill="#ff00ff"/>
<rect x="989" y="272.3" width="1" height="6.4" fill="#ff00ff"/>
<rect x="989" y="278.6" width="1" height="1.0" fill="#ff00ff"/>
<rect x="990" y="261.9" width="1" height="2.7" fill="#ff00ff"/>
<rect x="990" y="264.6" width="1" height="4.9" fill="#ff00ff"/>
<rect x="990" y="269.5" width="1" height="3.5" fill="#ff00ff"/>
<rect x="990" y="277.2" width="1" height="3.8" fill="#ff00ff"/>
<rect x="991" y="259.5" width="1" height="2.1" fill="#ff00ff"/>
<rect x="991" y="261.6" width="1" height="4.6" fill="#ff00ff"/>
<rect x="991" y="266.2" width="1" height="5.5" fill="#ff00ff"/>
<rect x="991" y="271.7" width="1" height="2.3" fill="#d000d8"/>
<rect x="991" y="274.0" width="1" height="4.1" fill="#ff00ff"/>
<rect x="992" y="259.7" width="1" height="2.7" fill="#ff00ff"/>
<rect x="992" y="262.4" width="1" height="5.4" fill="#ff00ff"/>
<rect x="992" y="267.8" width="1" height="4.5" fill="#ff00ff"/>
<rect x="992" y="272.3" width="1" height="2.1" fill="#ff00ff"/>
<rect x="993" y="258.1" width="1" height="6.7" fill="#ff00ff"/>
<rect x="993" y="264.8" width="1" height="4.3" fill="#d000d8"/>
<rect x="993" y="269.1" width="1" height="4.4" fill="#ff00ff"/>
<rect x="993" y="273.5" width="1" height="2.3" fill="#ff00ff"/>
<rect x="994" y="255.9" width="1" height="6.5" fill="#d000d8"/>
<rect x="994" y="262.3" width="1" height="6.1" fill="#ff00ff"/>
<rect x="995" y="255.4" width="1" height="3.8" fill="#ff00ff"/>
<rect x="995" y="264.6" width="1" height="6.1" fill="#ff00ff"/>
<rect x="996" y="258.2" width="1" height="3.0" fill="#ff00ff"/>
<rect x="996" y="261.2" width="1" height="3.3" fill="#d000d8"/>
<rect x="996" y="264.6" width="1" height="5.4" fill="#ff00ff"/>
<rect x="997" y="256.5" width="1" height="5.9" fill="#ff00ff"/>
<rect x="997" y="262.4" width="1" height="4.9" fill="#ff00ff"/>
<rect x="997" y="267.3" width="1" height="1.3" fill="#ff00ff"/>
<rect x="998" y="254.7" width="1" height="4.6" fill="#ff00ff"/>
<rect x="998" y="259.3" width="1" height="4.6" fill="#ff00ff"/>
<rect x="998" y="263.9" width="1" height="1.9" fill="#ff00ff"/>
<rect x="999" y="255.0" width="1" height="8.8" fill="#ff00ff"/>
<rect x="1000" y="256.2" width="1" height="9.5" fill="#ff00ff"/>
<rect x="1001" y="255.3" width="1" height="10.7" fill="#ff00ff"/>
<rect x="1001" y="259.1" width="1" height="2.0" fill="#a000a0"/>
<rect x="1002" y="255.1" width="1" height="10.7" fill="#ff00ff"/>
<rect x="1003" y="255.5" width="1" height="11.1" fill="#ff00ff"/>
<rect x="1004" y="256.2" width="1" height="11.0" fill="#ff00ff"/>
<rect x="1005" y="258.1" width="1" height="9.4" fill="#ff00ff"/>
<rect x="1006" y="259.1" width="1" height="8.6" fill="#ff00ff"/>
<rect x="1007" y="260.6" width="1" height="9.0" fill="#ff00ff"/>
<rect x="1008" y="262.0" width="1" height="10.2" fill="#ff00ff"/>
<rect x="1009" y="262.3" width="1" height="10.1" fill="#ff00ff"/>
<rect x="1009" y="265.3" width="1" height="1.5" fill="#a000a0"/>
<rect x="1010" y="264.7" width="1" height="10.0" fill="#ff00ff"/>
<rect x="1011" y="266.2" width="1" height="9.2" fill="#ff00ff"/>
<rect x="1012" y="266.9" width="1" height="9.2" fill="#ff00ff"/>
<rect x="1013" y="269.9" width="1" height="9.1" fill="#ff00ff"/>
<rect x="1014" y="270.6" width="1" height="9.7" fill="#ff00ff"/>
<rect x="1014" y="274.8" width="1" height="1.6" fill="#a000a0"/>
<rect x="138.0" y="318" width="2.5" height="10" fill="#ff00ff"/>
<rect x="256.0" y="318" width="2.5" height="11" fill="#ff00ff"/>
<rect x="378.0" y="322" width="2.5" height="15" fill="#ff00ff"/>
<rect x="494.0" y="318" width="2.5" height="11" fill="#ff00ff"/>
<rect x="613.7" y="318" width="2.5" height="11" fill="#ff00ff"/>
<rect x="733.6" y="318" width="2.5" height="10" fill="#ff00ff"/>
<rect x="852.8" y="319" width="2.5" height="11" fill="#ff00ff"/>
<rect x="969.0" y="316" width="2.5" height="10" fill="#ff00ff"/>
<rect x="81.5" y="242" width="2" height="87" fill="#b000b8"/>
<rect x="84.0" y="241.6" width="1.3" height="34.6" fill="#d000d0"/>
<rect x="86.0" y="246.4" width="1.3" height="25.3" fill="#d000d0"/>
<rect x="88.0" y="243.3" width="1.3" height="24.8" fill="#d000d0"/>
<rect x="91.0" y="244.6" width="1.3" height="19.2" fill="#9800a0"/>
<rect x="93.0" y="248.2" width="1.3" height="13.3" fill="#9800a0"/>
<rect x="95.0" y="245.4" width="1.3" height="13.8" fill="#b000b8"/>
<rect x="97.0" y="247.4" width="1.3" height="9.9" fill="#9800a0"/>
<rect x="99.0" y="249.5" width="1.3" height="6.0" fill="#b000b8"/>
<rect x="101.0" y="248.5" width="1.3" height="5.3" fill="#d000d0"/>
<rect x="202.2" y="254" width="2" height="67" fill="#b000b8"/>
<rect x="204.7" y="252.7" width="1.3" height="22.7" fill="#9800a0"/>
<rect x="206.7" y="255.1" width="1.3" height="16.0" fill="#9800a0"/>
<rect x="208.7" y="254.1" width="1.3" height="13.5" fill="#b000b8"/>
<rect x="210.7" y="254.7" width="1.3" height="10.1" fill="#d000d0"/>
<rect x="213.7" y="251.1" width="1.3" height="10.1" fill="#9800a0"/>
<rect x="215.7" y="251.8" width="1.3" height="7.2" fill="#d000d0"/>
<rect x="217.7" y="251.5" width="1.3" height="5.6" fill="#d000d0"/>
<rect x="219.7" y="250.6" width="1.3" height="4.7" fill="#9800a0"/>
<rect x="320.3" y="235" width="2" height="96" fill="#b000b8"/>
<rect x="322.8" y="239.5" width="1.3" height="34.4" fill="#9800a0"/>
<rect x="324.8" y="238.8" width="1.3" height="30.3" fill="#d000d0"/>
<rect x="326.8" y="237.4" width="1.3" height="28.0" fill="#d000d0"/>
<rect x="329.8" y="242.1" width="1.3" height="18.6" fill="#b000b8"/>
<rect x="331.8" y="242.7" width="1.3" height="15.4" fill="#9800a0"/>
<rect x="333.8" y="240.9" width="1.3" height="14.9" fill="#9800a0"/>
<rect x="336.8" y="245.5" width="1.3" height="7.2" fill="#d000d0"/>
<rect x="340.8" y="243.2" width="1.3" height="5.9" fill="#b000b8"/>
<rect x="438.5" y="252" width="2" height="69" fill="#b000b8"/>
<rect x="441.0" y="251.2" width="1.3" height="25.1" fill="#b000b8"/>
<rect x="444.0" y="252.3" width="1.3" height="18.1" fill="#d000d0"/>
<rect x="447.0" y="252.0" width="1.3" height="14.0" fill="#9800a0"/>
<rect x="449.0" y="252.7" width="1.3" height="10.9" fill="#9800a0"/>
<rect x="451.0" y="252.4" width="1.3" height="9.0" fill="#b000b8"/>
<rect x="453.0" y="252.1" width="1.3" height="7.4" fill="#d000d0"/>
<rect x="455.0" y="249.9" width="1.3" height="7.8" fill="#9800a0"/>
<rect x="556.5" y="237" width="2" height="93" fill="#b000b8"/>
<rect x="559.0" y="239.0" width="1.3" height="34.6" fill="#b000b8"/>
<rect x="561.0" y="241.4" width="1.3" height="27.7" fill="#b000b8"/>
<rect x="564.0" y="238.8" width="1.3" height="25.1" fill="#9800a0"/>
<rect x="566.0" y="239.2" width="1.3" height="21.9" fill="#d000d0"/>
<rect x="568.0" y="241.1" width="1.3" height="17.6" fill="#b000b8"/>
<rect x="570.0" y="240.5" width="1.3" height="16.0" fill="#b000b8"/>
<rect x="572.0" y="245.9" width="1.3" height="8.6" fill="#9800a0"/>
<rect x="575.0" y="242.1" width="1.3" height="9.6" fill="#d000d0"/>
<rect x="578.0" y="245.2" width="1.3" height="4.1" fill="#d000d0"/>
<rect x="678.2" y="253" width="2" height="68" fill="#b000b8"/>
<rect x="680.7" y="253.3" width="1.3" height="19.8" fill="#d000d0"/>
<rect x="682.7" y="251.9" width="1.3" height="16.5" fill="#b000b8"/>
<rect x="684.7" y="249.9" width="1.3" height="14.8" fill="#b000b8"/>
<rect x="687.7" y="249.8" width="1.3" height="10.5" fill="#9800a0"/>
<rect x="689.7" y="250.9" width="1.3" height="6.9" fill="#b000b8"/>
<rect x="691.7" y="248.1" width="1.3" height="7.5" fill="#d000d0"/>
<rect x="693.7" y="247.5" width="1.3" height="6.0" fill="#9800a0"/>
<rect x="795.1" y="235" width="2" height="94" fill="#b000b8"/>
<rect x="797.6" y="235.8" width="1.3" height="37.6" fill="#9800a0"/>
<rect x="799.6" y="236.0" width="1.3" height="32.6" fill="#d000d0"/>
<rect x="801.6" y="238.8" width="1.3" height="26.1" fill="#9800a0"/>
<rect x="804.6" y="239.1" width="1.3" height="21.2" fill="#d000d0"/>
<rect x="807.6" y="242.7" width="1.3" height="14.0" fill="#b000b8"/>
<rect x="809.6" y="243.5" width="1.3" height="11.0" fill="#9800a0"/>
<rect x="811.6" y="244.7" width="1.3" height="7.8" fill="#b000b8"/>
<rect x="813.6" y="243.6" width="1.3" height="7.0" fill="#d000d0"/>
<rect x="913.0" y="255" width="2" height="65" fill="#b000b8"/>
<rect x="915.5" y="253.6" width="1.3" height="23.0" fill="#d000d0"/>
<rect x="918.5" y="254.2" width="1.3" height="16.7" fill="#d000d0"/>
<rect x="921.5" y="256.1" width="1.3" height="10.6" fill="#9800a0"/>
<rect x="923.5" y="253.4" width="1.3" height="11.0" fill="#9800a0"/>
<rect x="926.5" y="253.3" width="1.3" height="8.1" fill="#b000b8"/>
<rect x="929.5" y="252.0" width="1.3" height="6.7" fill="#9800a0"/>
<rect x="22" y="270" width="48" height="16" fill="#000"/>
<path d="M515.5,1 L522,1 L519,5 Z" fill="#d88e12"/>
<path d="M511,5 L516,5 C517.5,5 518.5,6 518.5,7.5 L518.5,15 L525,18 L519,23.5 L512,16 L511,16 C509.8,16 509,15.2 509,14 L509,7 C509,5.8 509.8,5 511,5 Z" fill="#d48a14"/>
<rect x="512.5" y="6.8" width="2.5" height="7" fill="#2a1a00"/>
<path d="M503.5,23.5 L513.5,23.5 C514.5,23.5 515.3,24.3 515.3,25.3 L515.3,35 L508.5,39.3 L501.8,35 L501.8,25.3 C501.8,24.3 502.5,23.5 503.5,23.5 Z" fill="#d08814"/>
<rect x="502.5" y="23.5" width="12" height="2.2" fill="#6a4000"/>
<rect x="507.3" y="25.5" width="2.2" height="9.5" fill="#2a1a00"/>
<path d="M1003.5,23.5 L1015,23.5 L1009.5,18 Z" fill="#c000c8"/>
<rect x="1008.5" y="23" width="2" height="5" fill="#c000c8"/>
<path d="M2,270 L15,270 L20,279 L15,287 L2,287 Z" fill="#a800a8"/>
<text x="5" y="285" font-family="Liberation Sans" font-weight="bold" font-size="16" fill="#200020">3</text>
</svg>

<!-- readout bar -->
<div class="box" style="left:20px;top:667px;width:551px;height:21px;border-radius:8px"></div>
<div class="a" style="left:303px;top:670px;width:25px;height:15px;border-radius:8px;background:#b000b8"></div>
<div class="a" style="left:311px;top:670px;font:bold 15px/15px 'Liberation Sans';color:#18001c">3</div>
<svg class="a" style="left:405px;top:671px" width="28" height="14"><path d="M1.5,7 C3,2 5,2 7,6 C9,10 11,10 12.5,5" stroke="#b800c0" stroke-width="2" fill="none"/><path d="M14,8 C15.5,3 17.5,3 19,7 C20.5,11 22.5,11 24,6 M16,11 L22,3" stroke="#b800c0" stroke-width="1.8" fill="none"/></svg>

<div class="box" style="left:579px;top:667px;width:147px;height:37px"></div>
<svg class="a" style="left:583px;top:686px" width="38" height="15"><path d="M1,3 C1,1 2,1 4,1 L10,1 C12,1 13,1 13,3 L13,11 L7,14 L1,11 Z" fill="#d48a14"/><rect x="4" y="3" width="6" height="2" fill="#2a1800"/><rect x="6" y="3" width="2" height="8" fill="#2a1800"/><rect x="13" y="7" width="8" height="1.5" fill="#d48a14"/><circle cx="16" cy="7.7" r="1.8" fill="#d48a14"/><path d="M24,5 L35,5 L29.5,11 Z" fill="#d48a14"/></svg>

<div class="box" style="left:733px;top:667px;width:107px;height:37px"></div>

<div class="box" style="left:846px;top:667px;width:169px;height:37px"></div>
<div class="a" style="left:876px;top:670px;width:25px;height:15px;border-radius:8px;background:#b000b8"></div>
<div class="a" style="left:884px;top:670px;font:bold 15px/15px 'Liberation Sans';color:#18001c">3</div>
<svg class="a" style="left:912px;top:671px" width="16" height="14"><path d="M2,12 L6,12 L10,2 L14,2" stroke="#f0f0f0" stroke-width="2" fill="none"/></svg>

<!-- channel tab -->
<div class="a" style="left:1px;top:709px;width:19px;height:54px;background:#a800a8;border-right:2px solid #5a0060;border-radius:0 7px 3px 0"></div>
<div class="a" style="left:5px;top:731px;font:bold 15px/15px 'Liberation Sans';color:#1a001a">3</div>

<!-- buttons -->
<div class="btn" style="left:20px;width:115px"></div>
<div class="hl" style="left:62px;top:738px;width:31px;height:25px;border-radius:4px 4px 0 0"></div>
<svg class="a" style="left:100px;top:740px" width="30" height="22"><path d="M16.3,4.5 L16.3,12.5 M11.5,12.5 L22.5,12.5 M12,12.5 C11,14 8,17.5 7,18.5 M17,12.8 C16,14.5 14,17 13,18.5 M22.5,12.8 C22,15 20.5,17 19.5,18.5" stroke="#080c20" stroke-width="2.2" stroke-linecap="round" fill="none"/></svg>

<div class="btn" style="left:137px;width:115px"></div>
<div class="hl" style="left:143px;top:738px;width:47px;height:25px;border-radius:4px 4px 0 0"></div>

<div class="btn" style="left:254px;width:115px"></div>
<div class="hl" style="left:323px;top:738px;width:34px;height:25px;border-radius:4px 4px 0 0"></div>

<div class="btn btn2" style="left:371px;width:116px"></div>
<div class="hl" style="left:401px;top:738px;width:56px;height:16px;border-radius:0;background:#d6daee"></div>

<div class="btn btn2" style="left:489px;width:115px"></div>
<div class="a" style="left:511px;top:721px;width:26px;height:17px;border-radius:9px;background:#a800a8"></div>
<div class="a" style="left:519px;top:723px;font:bold 14px/14px 'Liberation Sans';color:#111">3</div>
<div class="hl" style="left:523px;top:738px;width:46px;height:16px;border-radius:0;background:#d6daee"></div>

<div class="btn btn2" style="left:723px;width:114px;height:52px;border-radius:6px"></div>
<svg class="a" style="left:769px;top:722px" width="24" height="14"><path d="M11.5,1 L22,12.5 L1,12.5 Z" fill="#e6e8f2"/><rect x="3" y="10.5" width="17" height="2" fill="#8a8e9e"/></svg>

<div class="box" style="left:904px;top:725px;width:112px;height:36px;border-radius:7px"></div>
<div id="tek" class="t" style="left:2.50px;top:1.19px;font-size:17.5px;line-height:17.5px;font-weight:bold;letter-spacing:0.000px;color:#000;transform-origin:0 0;transform:scaleX(1.0000);">Tek</div>
<div id="stop" class="t" style="left:36.00px;top:0.00px;font-size:15px;line-height:15px;font-weight:bold;letter-spacing:0.917px;color:#eef0ff;transform-origin:0 0;transform:scaleX(1.0000);">Stop</div>
<div id="vout" class="t" style="left:24.50px;top:271.30px;font-size:15px;line-height:15px;font-weight:normal;letter-spacing:1.250px;color:#d0d0d8;transform-origin:0 0;transform:scaleX(1.0000);">VOUT</div>
<div id="mv" class="t" style="left:347.00px;top:669.38px;font-size:15.5px;line-height:15.5px;font-weight:normal;letter-spacing:0.938px;color:#b800c0;transform-origin:0 0;transform:scaleX(1.0000);-webkit-text-stroke:0.45px #b800c0">100mV</div>
<div id="hs" class="t" style="left:586.50px;top:669.38px;font-size:15.5px;line-height:15.5px;font-weight:normal;letter-spacing:1.310px;color:#e8e8f0;transform-origin:0 0;transform:scaleX(1.0000);-webkit-text-stroke:0.45px #e8e8f0">10.0µs</div>
<div id="ho" class="t" style="left:621.00px;top:686.38px;font-size:15.5px;line-height:15.5px;font-weight:bold;letter-spacing:1.125px;color:#d48a14;transform-origin:0 0;transform:scaleX(1.0000);">1.00000µs</div>
<div id="sr" class="t" style="left:740.40px;top:670.38px;font-size:15.5px;line-height:15.5px;font-weight:normal;letter-spacing:0.943px;color:#e8e8f0;transform-origin:0 0;transform:scaleX(1.0000);-webkit-text-stroke:0.45px #e8e8f0">1.00GS/s</div>
<div id="pts" class="t" style="left:740.40px;top:686.78px;font-size:15.5px;line-height:15.5px;font-weight:normal;letter-spacing:1.525px;color:#e8e8f0;transform-origin:0 0;transform:scaleX(1.0000);-webkit-text-stroke:0.45px #e8e8f0">100k points</div>
<div id="tl" class="t" style="left:955.00px;top:670.38px;font-size:15.5px;line-height:15.5px;font-weight:normal;letter-spacing:1.438px;color:#e8e8f0;transform-origin:0 0;transform:scaleX(1.0000);-webkit-text-stroke:0.45px #e8e8f0">704mV</div>
<div id="date" class="t" style="left:910.40px;top:729.96px;font-size:16px;line-height:16px;font-weight:normal;letter-spacing:1.250px;color:#e8e8f0;transform-origin:0 0;transform:scaleX(1.0000);-webkit-text-stroke:0.45px #e8e8f0">28 Jun 2017</div>
<div id="time" class="t" style="left:910.40px;top:745.96px;font-size:16px;line-height:16px;font-weight:normal;letter-spacing:1.107px;color:#e8e8f0;transform-origin:0 0;transform:scaleX(1.0000);-webkit-text-stroke:0.45px #e8e8f0">13:21:37</div>
<div id="coup" class="t" style="left:42.00px;top:717.46px;font-size:16px;line-height:16px;font-weight:bold;letter-spacing:0.536px;color:#0a0f28;transform-origin:0 0;transform:scaleX(1.0000);">Coupling</div>
<div id="dc" class="t" style="left:30.50px;top:742.33px;font-size:16.5px;line-height:16.5px;font-weight:bold;letter-spacing:-0.200px;color:#0a0f28;transform-origin:0 0;transform:scaleX(0.9214);">DC</div>
<div id="ac" class="t" style="left:67.40px;top:742.33px;font-size:16.5px;line-height:16.5px;font-weight:bold;letter-spacing:-0.200px;color:#0a0f28;transform-origin:0 0;transform:scaleX(0.9342);">AC</div>
<div id="term" class="t" style="left:147.50px;top:717.26px;font-size:16px;line-height:16px;font-weight:bold;letter-spacing:0.550px;color:#0a0f28;transform-origin:0 0;transform:scaleX(1.0000);">Termination</div>
<div id="1m" class="t" style="left:149.60px;top:742.33px;font-size:16.5px;line-height:16.5px;font-weight:bold;letter-spacing:-0.075px;color:#0a0f28;transform-origin:0 0;transform:scaleX(1.0000);">1MΩ</div>
<div id="50" class="t" style="left:206.70px;top:742.33px;font-size:16.5px;line-height:16.5px;font-weight:bold;letter-spacing:0.600px;color:#0a0f28;transform-origin:0 0;transform:scaleX(1.0000);">50Ω</div>
<div id="inv" class="t" style="left:288.50px;top:716.66px;font-size:16px;line-height:16px;font-weight:bold;letter-spacing:0.940px;color:#0a0f28;transform-origin:0 0;transform:scaleX(1.0000);">Invert</div>
<div id="on" class="t" style="left:271.80px;top:742.53px;font-size:16.5px;line-height:16.5px;font-weight:bold;letter-spacing:0.600px;color:#0a0f28;transform-origin:0 0;transform:scaleX(1.0000);">On</div>
<div id="off" class="t" style="left:327.80px;top:742.53px;font-size:16.5px;line-height:16.5px;font-weight:bold;letter-spacing:0.550px;color:#0a0f28;transform-origin:0 0;transform:scaleX(1.0000);">Off</div>
<div id="bw" class="t" style="left:387.90px;top:721.96px;font-size:16px;line-height:16px;font-weight:bold;letter-spacing:0.344px;color:#0a0f28;transform-origin:0 0;transform:scaleX(1.0000);">Bandwidth</div>
<div id="20m" class="t" style="left:402.60px;top:738.96px;font-size:16px;line-height:16px;font-weight:bold;letter-spacing:0.962px;color:#0a0f28;transform-origin:0 0;transform:scaleX(1.0000);">20MHz</div>
<div id="lab" class="t" style="left:542.60px;top:720.76px;font-size:16px;line-height:16px;font-weight:bold;letter-spacing:-0.200px;color:#0a0f28;transform-origin:0 0;transform:scaleX(0.9915);">Label</div>
<div id="vb" class="t" style="left:525.00px;top:738.96px;font-size:16px;line-height:16px;font-weight:bold;letter-spacing:-0.167px;color:#0a0f28;transform-origin:0 0;transform:scaleX(1.0000);">VOUT</div>
<div id="more" class="t" style="left:760.80px;top:736.96px;font-size:16px;line-height:16px;font-weight:bold;letter-spacing:1.083px;color:#0a0f28;transform-origin:0 0;transform:scaleX(1.0000);">More</div>
</div></body></html>
